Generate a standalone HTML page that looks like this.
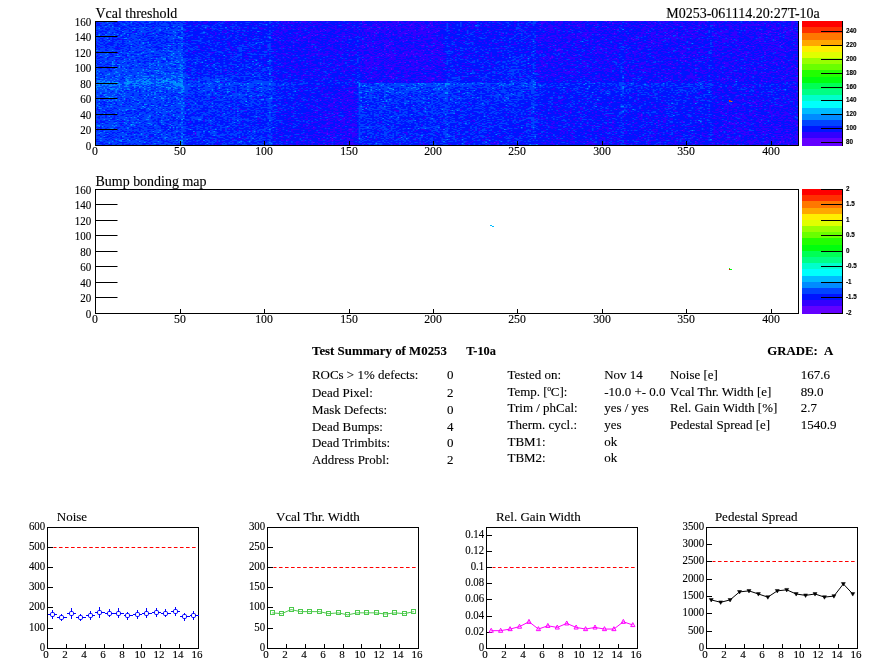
<!DOCTYPE html>
<html><head><meta charset="utf-8"><title>Test Summary of M0253</title>
<style>html,body{margin:0;padding:0;background:#fff;}svg{display:block;will-change:transform;}text{fill:#000;font-family:"Liberation Serif",serif;stroke:#000;stroke-width:.12px;}.s{font-family:"Liberation Sans",sans-serif;}</style></head><body>
<svg width="896" height="672" viewBox="0 0 896 672">
<rect width="896" height="672" fill="#fff"/>
<defs><clipPath id="hc"><rect x="95" y="21" width="703.5" height="124.5"/></clipPath><filter id="hb" x="-1%" y="-5%" width="102%" height="110%" color-interpolation-filters="sRGB"><feGaussianBlur stdDeviation="0.45"/></filter></defs>
<g clip-path="url(#hc)"><g filter="url(#hb)">
<rect x="92" y="18" width="709.5" height="130.5" fill="#0014ff"/>
<path transform="translate(95 21.5) scale(1.68990 1.00000)" d="M158 0h1m20 0h1m122 0h1m103 0h1M114 1h1m4 0h1m59 0h1m124 0h1m26 0h1M198 2h1m65 0h1m41 0h1M159 3h2m5 0h1m20 0h1m135 0h1m20 0h1m47 0h1M178 4h1m7 0h1m12 0h1m85 0h1m9 0h1m30 0h1m34 0h1m4 0h1m31 0h1M156 5h1m16 0h1m19 0h1m69 0h1m36 0h1m1 0h1M34 6h1m76 0h1m55 0h2m25 0h1m190 0h1m22 0h1M68 7h1m93 0h1m30 0h1m72 0h1m124 0h1m12 0h1M120 8h1m14 0h1m25 0h1m11 0h1m19 0h1m87 0h1m25 0h1m1 0h1m70 0h1m31 0h1M136 9h1m29 0h1m18 0h1m3 0h1m13 0h1m123 0h1m27 0h1M133 10h1m46 0h1m16 0h1m4 0h1m138 0h1m57 0h1M165 11h1m1 0h1m6 0h1m22 0h1m3 0h1m196 0h1m3 0h1m4 0h1m1 0h1M81 12h1m101 0h2m56 0h1m9 0h1m55 0h1m19 0h1m10 0h1m5 0h1m49 0h1m1 0h1M131 13h1m40 0h1m3 0h1m106 0h1m6 0h1m7 0h1m54 0h1m43 0h1m6 0h1M105 14h1m22 0h1m1 0h1m30 0h1m3 0h1m95 0h1m75 0h1m2 0h1m25 0h1M150 15h1m40 0h1m93 0h1M123 16h2m35 0h1m27 0h1m79 0h1m22 0h1M109 17h1m89 0h1m117 0h1M120 18h1m197 0h1m2 0h1m54 0h1M106 19h1m35 0h1m41 0h1m144 0h1m72 0h1M126 20h1m16 0h1m38 0h1m89 0h1m7 0h1m16 0h1m95 0h1M174 21h1m88 0h1m58 0h1m6 0h1m52 0h1m22 0h1M165 22h1m241 0h1M149 23h1m21 0h1m2 0h1m1 0h1m28 0h1m200 0h1M117 24h1m40 0h1m2 0h1m10 0h2m19 0h2m5 0h1m61 0h1m9 0h1m60 0h1m12 0h1m39 0h1m18 0h1M128 25h1m32 0h1m10 0h1m96 0h1m58 0h1m60 0h1M159 26h1m6 0h1m181 0h1m36 0h1M130 27h1m71 0h1m96 0h1M153 28h1m17 0h1m25 0h1m15 0h1m60 0h2m38 0h1m7 0h1M194 29h1m7 0h1m70 0h2m20 0h1m115 0h1M187 30h1m11 0h1m118 0h1m89 0h1M264 31h1m131 0h1M168 32h1m3 0h1m9 0h1m7 0h1m105 0h1m50 0h1m35 0h1M125 33h1m35 0h1m8 0h1m3 0h1m9 0h1m3 0h1m6 0h1m8 0h1m151 0h1m28 0h1m10 0h1M150 34h1m1 0h1m16 0h1m3 0h1m3 0h1m6 0h1m98 0h1m70 0h1m13 0h1m11 0h1M192 35h1m77 0h1m32 0h1M114 36h1m48 0h1m11 0h1m94 0h1m78 0h1m1 0h1M199 37h1m65 0h1m3 0h1m38 0h1m50 0h1M158 38h1m35 0h1m9 0h1m184 0h1M160 39h1m29 0h1m155 0h1m2 0h1M116 40h1m69 0h1m162 0h1m56 0h1M180 41h1m2 0h1m6 0h1m216 0h1M133 42h1m31 0h1m174 0h1m31 0h1M167 43h1m228 0h1m6 0h1M144 44h1m28 0h1m11 0h1m10 0h1m60 0h1m7 0h1m49 0h1m39 0h1m28 0h1M108 45h1m41 0h1m45 0h1m3 0h1m176 0h1m34 0h1M162 46h1m27 0h1m123 0h1m27 0h1m71 0h1M161 47h1m13 0h1m214 0h1m6 0h1m17 0h1M175 48h1m17 0h1m4 0h1m7 0h1m148 0h1M77 49h1m79 0h1m32 0h1M147 50h1m112 0h1m2 0h1m16 0h1m31 0h1m11 0h1m78 0h1M345 51h1m50 0h1M159 52h1m16 0h1m16 0h1m144 0h1M138 53h1m33 0h1m99 0h1M123 54h1m61 0h1m149 0h1m19 0h1M160 55h1m13 0h2m19 0h1m6 0h2m203 0h1M163 56h1m11 0h1m205 0h1M161 57h1m14 0h1m22 0h2m137 0h1m32 0h1M340 58h1m8 0h1m22 0h1m3 0h1M184 59h1m14 0h1m128 0h1m65 0h1M169 60h1m227 0h1M327 61h1m28 0h1M387 65h1m26 0h1M370 66h1M300 68h1M144 69h1m230 0h1M150 70h1m1 0h1m232 0h1M151 71h2M380 74h1M144 76h1M141 77h1M145 78h1m237 0h1M133 79h1m15 0h1M141 81h1m163 0h1m80 0h1m3 0h1M387 82h1M371 83h1m19 0h1M138 84h1m261 0h1M391 85h1m2 0h1M160 86h1M146 87h1M308 88h1M150 90h1m219 0h1M130 91h1m150 0h1M143 92h1m124 0h1M141 93h1m181 0h1M136 94h1m186 0h1m42 0h1m6 0h1m3 0h1m12 0h1m4 0h1M133 95h1m19 0h1M147 97h1M137 98h1M144 99h1m188 0h1m60 0h1m16 0h1M149 101h1m156 0h1m41 0h1m26 0h1m4 0h1m12 0h1M137 102h1m193 0h1m45 0h1M315 103h1m56 0h1m27 0h1M144 104h1m150 0h1m37 0h1m71 0h1m9 0h1M129 106h1m12 0h1m227 0h1M150 108h2M347 109h1m50 0h1M370 110h1m4 0h1m19 0h1m13 0h1M59 112h1m77 0h1m12 0h1m112 0h1m135 0h1M137 113h1m273 0h1M147 114h1M406 115h1M139 116h1m21 0h1m235 0h1M132 117h1m7 0h1m9 0h1m228 0h1m31 0h1M113 119h1m26 0h1M291 120h1m63 0h1m40 0h1m8 0h1m1 0h1M129 121h1m106 0h1m64 0h1m103 0h1M149 122h1m88 0h1m116 0h1m48 0h1M136 123h1m243 0h1m29 0h1" stroke="#6300ff" stroke-width="1.02" fill="none"/>
<path transform="translate(95 21.5) scale(1.68990 1.00000)" d="M54 0h1m11 0h1m8 0h1m1 0h3m2 0h1m10 0h1m12 0h2m2 0h3m1 0h1m1 0h1m5 0h3m3 0h3m1 0h1m1 0h2m1 0h1m8 0h1m6 0h2m1 0h1m2 0h1m3 0h1m1 0h2m1 0h5m2 0h4m1 0h2m3 0h2m1 0h2m4 0h1m2 0h3m1 0h2m1 0h1m1 0h1m8 0h1m4 0h1m1 0h3m4 0h1m5 0h2m11 0h2m14 0h3m2 0h1m2 0h2m1 0h2m3 0h1m1 0h2m2 0h3m3 0h1m3 0h1m4 0h1m2 0h1m2 0h2m2 0h1m2 0h4m3 0h4m1 0h2m1 0h1m4 0h3m1 0h2m2 0h2m1 0h1m5 0h2m1 0h1m2 0h5m2 0h2m2 0h5m2 0h1m1 0h1m2 0h1m3 0h1m3 0h1m3 0h3m1 0h1m2 0h1m4 0h2m2 0h1m3 0h2M25 1h1m32 0h1m3 0h1m1 0h3m4 0h1m2 0h1m2 0h1m22 0h1m9 0h1m1 0h1m3 0h3m3 0h4m2 0h4m6 0h1m5 0h1m5 0h1m7 0h2m4 0h1m1 0h1m1 0h2m2 0h1m3 0h2m3 0h2m1 0h2m2 0h7m3 0h2m1 0h1m2 0h1m2 0h2m2 0h1m10 0h4m5 0h1m4 0h2m1 0h1m8 0h1m3 0h2m9 0h5m4 0h2m1 0h2m1 0h2m2 0h4m1 0h1m2 0h1m2 0h2m1 0h1m6 0h1m2 0h1m3 0h1m2 0h2m3 0h1m3 0h1m4 0h2m1 0h1m3 0h1m1 0h3m3 0h6m2 0h1m3 0h1m2 0h4m1 0h1m3 0h1m1 0h1m2 0h1m2 0h2m5 0h1m4 0h1m1 0h2m2 0h1m2 0h1m1 0h1m1 0h1m3 0h1m3 0h2m3 0h3M3 2h1m49 0h2m5 0h1m3 0h2m2 0h1m2 0h1m4 0h1m1 0h1m2 0h1m12 0h1m4 0h1m5 0h1m5 0h7m3 0h1m2 0h1m1 0h1m1 0h1m2 0h3m2 0h2m4 0h1m1 0h1m5 0h2m1 0h1m2 0h1m1 0h1m6 0h1m1 0h1m2 0h1m1 0h8m1 0h5m1 0h2m2 0h2m1 0h1m4 0h1m2 0h1m1 0h3m2 0h1m2 0h1m6 0h1m2 0h1m1 0h2m4 0h2m8 0h1m10 0h1m1 0h1m7 0h2m2 0h1m1 0h2m3 0h1m1 0h3m3 0h1m1 0h1m1 0h1m1 0h1m2 0h1m2 0h6m2 0h2m1 0h2m2 0h5m3 0h1m4 0h1m6 0h2m2 0h2m2 0h2m3 0h1m2 0h1m3 0h2m2 0h1m1 0h1m3 0h2m1 0h1m5 0h1m2 0h2m5 0h1m3 0h1m4 0h1m3 0h1m1 0h1m2 0h2m2 0h1m2 0h2m7 0h1m1 0h2M58 3h2m2 0h1m7 0h1m9 0h1m11 0h1m2 0h1m8 0h1m3 0h2m1 0h1m1 0h1m3 0h1m2 0h1m1 0h1m3 0h2m1 0h3m1 0h2m3 0h2m6 0h2m1 0h2m5 0h1m5 0h1m1 0h2m2 0h1m1 0h6m1 0h1m1 0h1m5 0h2m1 0h1m1 0h1m1 0h2m1 0h1m1 0h3m1 0h3m6 0h1m7 0h1m4 0h1m4 0h1m3 0h2m1 0h2m3 0h1m7 0h1m8 0h2m3 0h1m1 0h1m2 0h1m1 0h1m4 0h2m2 0h1m6 0h5m3 0h1m2 0h1m3 0h1m5 0h1m2 0h1m1 0h1m3 0h2m5 0h1m1 0h2m3 0h1m1 0h1m1 0h2m2 0h1m3 0h3m1 0h1m1 0h1m2 0h1m2 0h2m2 0h2m1 0h2m2 0h4m1 0h1m3 0h3m1 0h1m1 0h1m2 0h10m1 0h1m1 0h1m1 0h4m1 0h1m2 0h1m4 0h1m1 0h2m1 0h1M59 4h1m18 0h1m15 0h1m14 0h1m2 0h1m1 0h1m5 0h1m1 0h1m1 0h2m1 0h3m2 0h2m6 0h1m1 0h1m3 0h1m1 0h1m2 0h1m6 0h2m4 0h4m2 0h1m1 0h1m1 0h4m4 0h1m1 0h2m1 0h3m2 0h5m13 0h1m7 0h1m2 0h1m1 0h1m6 0h2m6 0h2m6 0h1m1 0h1m2 0h2m2 0h1m8 0h1m3 0h3m1 0h1m1 0h2m2 0h7m1 0h2m1 0h1m6 0h3m2 0h1m2 0h3m6 0h1m1 0h2m1 0h2m1 0h1m5 0h5m2 0h2m2 0h3m2 0h3m1 0h2m2 0h1m3 0h2m10 0h1m1 0h1m1 0h1m1 0h4m1 0h3m2 0h13m1 0h1m2 0h3m2 0h1m2 0h1m3 0h1m2 0h1M78 5h1m6 0h1m4 0h1m5 0h1m12 0h2m3 0h2m1 0h1m1 0h1m1 0h1m2 0h3m5 0h1m2 0h2m1 0h1m2 0h2m4 0h1m1 0h2m1 0h2m3 0h8m1 0h5m1 0h1m2 0h2m1 0h1m1 0h1m1 0h2m2 0h1m1 0h1m1 0h1m3 0h2m1 0h5m1 0h1m2 0h2m1 0h1m10 0h1m1 0h3m3 0h1m1 0h1m1 0h2m1 0h1m7 0h1m4 0h1m5 0h1m1 0h1m7 0h1m3 0h6m6 0h1m2 0h1m1 0h5m11 0h1m6 0h1m4 0h3m1 0h1m1 0h3m3 0h1m1 0h4m2 0h1m1 0h1m1 0h1m2 0h2m6 0h2m2 0h1m1 0h1m1 0h3m3 0h1m3 0h1m2 0h3m3 0h3m2 0h1m1 0h2m1 0h1m1 0h1m9 0h2m2 0h2m2 0h1m4 0h3m1 0h2M61 6h1m4 0h1m12 0h1m2 0h1m1 0h1m1 0h1m3 0h1m6 0h2m2 0h1m4 0h1m1 0h1m3 0h1m1 0h2m4 0h4m1 0h1m3 0h1m2 0h1m5 0h3m1 0h1m6 0h2m2 0h1m4 0h5m8 0h1m3 0h1m1 0h8m1 0h4m1 0h3m1 0h1m2 0h3m2 0h1m6 0h1m8 0h2m2 0h1m1 0h2m5 0h2m5 0h2m16 0h2m2 0h1m2 0h2m1 0h4m2 0h2m1 0h1m1 0h3m2 0h1m3 0h1m1 0h1m1 0h1m2 0h2m3 0h1m1 0h1m3 0h1m1 0h1m3 0h1m4 0h1m4 0h2m1 0h2m2 0h2m3 0h1m3 0h1m1 0h1m1 0h1m6 0h1m2 0h3m3 0h2m2 0h1m2 0h1m2 0h1m1 0h1m5 0h2m3 0h1m1 0h1m5 0h1m2 0h1m1 0h1m3 0h1m2 0h7m2 0h1m1 0h2M54 7h1m11 0h1m6 0h1m8 0h1m7 0h1m6 0h4m7 0h1m1 0h1m1 0h1m2 0h3m1 0h3m1 0h1m5 0h2m2 0h1m3 0h1m2 0h3m1 0h1m1 0h1m1 0h2m1 0h1m1 0h1m1 0h1m5 0h1m1 0h4m4 0h4m1 0h1m1 0h3m2 0h6m3 0h1m1 0h4m3 0h5m5 0h1m6 0h2m2 0h2m2 0h1m9 0h1m18 0h1m6 0h2m5 0h2m2 0h2m4 0h1m4 0h3m2 0h1m4 0h2m2 0h1m4 0h2m1 0h1m2 0h1m3 0h1m4 0h1m1 0h1m3 0h4m3 0h2m3 0h4m4 0h1m3 0h2m1 0h3m1 0h3m2 0h1m11 0h1m2 0h3m1 0h1m2 0h1m2 0h2m2 0h1m2 0h2m4 0h3m1 0h2m1 0h1m2 0h3m1 0h1m2 0h1M18 8h1m47 0h2m1 0h1m13 0h1m1 0h1m1 0h1m10 0h1m11 0h6m2 0h1m2 0h1m2 0h2m1 0h2m1 0h1m2 0h1m3 0h2m3 0h4m4 0h1m2 0h2m2 0h1m1 0h2m1 0h1m2 0h1m1 0h3m1 0h1m4 0h1m1 0h3m4 0h1m1 0h1m1 0h1m1 0h2m1 0h1m1 0h2m1 0h2m1 0h1m3 0h1m10 0h1m1 0h1m8 0h1m8 0h3m2 0h1m2 0h2m1 0h1m1 0h2m4 0h1m9 0h1m1 0h4m3 0h1m11 0h1m2 0h1m2 0h4m1 0h1m2 0h4m1 0h1m1 0h1m14 0h3m1 0h1m5 0h2m1 0h1m1 0h1m3 0h3m2 0h2m1 0h1m5 0h1m13 0h1m4 0h1m1 0h1m1 0h1m2 0h1m1 0h1m2 0h1m3 0h1m8 0h1m1 0h3m2 0h3m1 0h1M54 9h2m3 0h1m16 0h2m1 0h1m10 0h1m10 0h1m5 0h2m2 0h3m7 0h1m4 0h1m1 0h1m1 0h2m1 0h2m2 0h3m3 0h2m2 0h3m3 0h1m1 0h1m1 0h1m1 0h6m2 0h1m1 0h4m1 0h2m1 0h1m1 0h2m2 0h2m1 0h3m2 0h3m1 0h4m1 0h3m4 0h1m2 0h2m4 0h1m2 0h1m5 0h2m1 0h1m4 0h1m1 0h1m9 0h1m1 0h1m4 0h1m1 0h2m7 0h1m2 0h2m1 0h3m1 0h1m1 0h1m2 0h2m3 0h1m4 0h1m1 0h2m2 0h2m1 0h4m2 0h1m1 0h1m7 0h1m2 0h2m1 0h1m3 0h2m5 0h1m3 0h1m1 0h3m1 0h3m3 0h1m2 0h1m1 0h4m1 0h1m1 0h3m1 0h1m3 0h2m2 0h2m1 0h2m3 0h1m6 0h4m1 0h1m3 0h1m2 0h3m1 0h2m2 0h1m1 0h2m1 0h1m1 0h1m1 0h1M23 10h1m29 0h2m15 0h1m4 0h1m1 0h1m6 0h1m9 0h1m11 0h3m1 0h1m1 0h2m6 0h3m4 0h6m1 0h2m1 0h2m3 0h3m5 0h1m2 0h3m1 0h1m1 0h10m1 0h2m2 0h2m3 0h1m2 0h3m1 0h5m1 0h4m3 0h3m1 0h1m6 0h1m2 0h1m2 0h2m15 0h2m4 0h1m10 0h1m2 0h1m3 0h1m3 0h2m5 0h2m1 0h1m1 0h2m1 0h1m2 0h1m1 0h1m5 0h1m3 0h1m3 0h2m3 0h1m3 0h1m2 0h1m1 0h1m2 0h1m3 0h1m7 0h2m1 0h1m3 0h1m1 0h6m1 0h1m1 0h1m1 0h1m4 0h1m1 0h3m5 0h1m1 0h2m5 0h1m2 0h4m3 0h2m5 0h2m2 0h2m1 0h1m1 0h1m1 0h3m1 0h1m4 0h1m1 0h1m1 0h5M22 11h1m10 0h1m34 0h1m2 0h1m3 0h3m8 0h2m1 0h1m3 0h1m1 0h1m2 0h1m6 0h1m1 0h4m1 0h1m4 0h5m3 0h1m2 0h1m1 0h3m4 0h1m2 0h1m1 0h2m2 0h2m1 0h1m5 0h1m2 0h1m1 0h1m2 0h2m4 0h3m4 0h1m2 0h1m1 0h3m1 0h2m1 0h2m1 0h6m1 0h3m10 0h1m1 0h1m8 0h1m2 0h2m5 0h1m4 0h1m2 0h1m7 0h1m18 0h1m1 0h3m1 0h2m4 0h1m8 0h10m1 0h1m2 0h1m1 0h1m2 0h1m1 0h1m7 0h1m1 0h1m1 0h4m4 0h3m2 0h2m3 0h3m1 0h4m1 0h1m1 0h1m1 0h1m2 0h2m3 0h3m2 0h1m1 0h8m1 0h5m2 0h1m1 0h2m1 0h1m2 0h3m5 0h3m1 0h2m1 0h1m3 0h2m1 0h2M28 12h1m40 0h1m1 0h1m1 0h1m5 0h1m10 0h1m6 0h1m7 0h2m2 0h2m7 0h1m3 0h2m3 0h3m3 0h2m6 0h2m3 0h2m2 0h3m3 0h1m1 0h1m1 0h1m2 0h1m1 0h1m1 0h1m3 0h1m1 0h1m2 0h1m2 0h4m3 0h1m1 0h8m2 0h2m2 0h1m9 0h1m3 0h1m4 0h1m5 0h2m2 0h1m2 0h1m5 0h1m3 0h1m1 0h1m7 0h1m1 0h1m7 0h1m1 0h1m1 0h1m4 0h1m4 0h1m3 0h2m1 0h3m1 0h3m1 0h1m4 0h1m6 0h2m1 0h1m4 0h1m7 0h1m1 0h4m1 0h4m1 0h1m2 0h1m3 0h1m1 0h1m5 0h1m1 0h7m1 0h1m6 0h2m1 0h4m5 0h3m3 0h1m1 0h1m3 0h1m1 0h1m1 0h1m1 0h1m1 0h2m5 0h1m1 0h1m2 0h2m2 0h3M36 13h1m28 0h1m5 0h1m3 0h1m2 0h1m6 0h1m2 0h1m4 0h1m4 0h1m7 0h3m1 0h1m2 0h1m2 0h1m2 0h2m1 0h1m3 0h2m1 0h2m1 0h1m1 0h4m5 0h7m2 0h3m1 0h1m1 0h1m1 0h2m1 0h4m4 0h1m1 0h2m2 0h2m1 0h2m1 0h1m1 0h1m1 0h6m1 0h5m6 0h1m13 0h2m13 0h1m1 0h2m2 0h1m3 0h4m7 0h1m1 0h1m7 0h2m1 0h1m4 0h2m1 0h2m2 0h3m2 0h2m1 0h2m2 0h2m2 0h1m3 0h4m2 0h3m2 0h1m1 0h1m4 0h1m1 0h2m1 0h1m1 0h1m3 0h2m2 0h1m3 0h1m1 0h1m1 0h1m1 0h2m2 0h1m1 0h1m1 0h1m2 0h1m2 0h3m5 0h3m1 0h2m1 0h1m3 0h4m4 0h1m2 0h2m2 0h5m2 0h1m1 0h3m5 0h4m3 0h1M30 14h1m29 0h1m9 0h1m7 0h1m7 0h1m8 0h1m8 0h1m2 0h1m1 0h1m1 0h1m2 0h1m2 0h1m1 0h1m5 0h3m3 0h1m2 0h1m3 0h1m1 0h1m3 0h1m1 0h2m2 0h1m2 0h2m1 0h1m1 0h2m3 0h1m2 0h1m2 0h1m3 0h2m1 0h2m1 0h3m1 0h1m4 0h2m1 0h1m2 0h2m1 0h5m1 0h1m1 0h1m3 0h1m15 0h1m1 0h1m4 0h1m7 0h2m1 0h1m19 0h4m3 0h3m1 0h2m1 0h1m2 0h1m1 0h1m2 0h1m1 0h4m1 0h2m2 0h2m1 0h1m1 0h2m7 0h1m1 0h3m1 0h1m2 0h1m2 0h2m1 0h1m2 0h2m1 0h5m2 0h2m4 0h1m2 0h1m1 0h1m4 0h2m1 0h4m1 0h1m2 0h1m1 0h1m2 0h5m1 0h5m2 0h1m1 0h2m5 0h1m1 0h1m3 0h2m1 0h1m7 0h2m1 0h4M53 15h1m12 0h1m1 0h1m9 0h1m13 0h1m15 0h1m3 0h1m4 0h1m1 0h1m3 0h3m1 0h1m1 0h1m3 0h1m2 0h1m3 0h1m4 0h2m1 0h2m2 0h1m4 0h1m3 0h1m1 0h1m1 0h3m1 0h1m1 0h4m4 0h3m2 0h4m1 0h1m3 0h1m1 0h1m1 0h2m3 0h1m2 0h1m5 0h1m14 0h1m4 0h1m4 0h1m6 0h1m6 0h1m14 0h1m2 0h5m2 0h1m3 0h3m1 0h1m2 0h1m1 0h5m1 0h1m3 0h1m3 0h1m1 0h1m1 0h1m2 0h1m4 0h1m1 0h1m2 0h1m1 0h3m3 0h1m1 0h3m2 0h3m1 0h1m1 0h2m1 0h2m1 0h11m3 0h2m4 0h3m3 0h1m1 0h1m3 0h1m1 0h2m4 0h4m2 0h4m4 0h1m1 0h3m1 0h1m1 0h1m2 0h1m3 0h1M57 16h1m11 0h1m1 0h1m6 0h1m3 0h1m4 0h1m1 0h1m3 0h1m7 0h1m3 0h1m1 0h1m2 0h1m3 0h3m1 0h2m1 0h1m4 0h2m5 0h4m1 0h1m3 0h2m2 0h1m1 0h1m1 0h1m2 0h1m5 0h1m1 0h2m1 0h2m4 0h1m2 0h1m4 0h1m3 0h1m2 0h1m1 0h1m1 0h1m3 0h1m3 0h5m1 0h3m4 0h2m3 0h1m4 0h1m15 0h1m9 0h1m6 0h1m7 0h5m1 0h1m4 0h2m3 0h4m1 0h2m1 0h3m2 0h1m1 0h1m8 0h1m3 0h1m1 0h3m5 0h1m1 0h2m8 0h1m1 0h1m1 0h5m1 0h1m1 0h7m2 0h4m2 0h2m1 0h2m9 0h1m1 0h1m2 0h1m1 0h6m1 0h2m3 0h3m4 0h1m1 0h1m1 0h1m1 0h1m1 0h3m3 0h3m2 0h3M14 17h1m44 0h1m29 0h1m7 0h1m7 0h2m4 0h1m2 0h1m2 0h2m1 0h2m1 0h1m1 0h3m3 0h1m7 0h3m2 0h5m1 0h2m7 0h1m2 0h1m1 0h2m1 0h1m1 0h1m4 0h1m1 0h1m1 0h1m1 0h1m2 0h3m2 0h3m1 0h1m1 0h5m1 0h2m1 0h1m1 0h1m5 0h1m1 0h2m3 0h1m15 0h3m12 0h2m5 0h1m4 0h1m1 0h3m1 0h1m1 0h3m1 0h1m1 0h1m1 0h1m1 0h3m2 0h4m2 0h2m1 0h1m5 0h1m1 0h1m1 0h2m1 0h1m2 0h3m3 0h2m2 0h1m1 0h1m6 0h1m1 0h1m2 0h1m7 0h3m1 0h3m1 0h1m3 0h2m8 0h2m1 0h3m2 0h2m1 0h1m1 0h1m2 0h1m8 0h1m3 0h4m2 0h3m1 0h1m1 0h1m3 0h3m2 0h1m1 0h1M15 18h1m4 0h1m49 0h1m4 0h2m6 0h1m4 0h2m5 0h1m11 0h1m2 0h1m4 0h1m3 0h1m2 0h1m3 0h1m2 0h1m1 0h3m1 0h2m2 0h1m1 0h2m1 0h2m2 0h1m7 0h2m1 0h1m1 0h3m1 0h1m1 0h1m2 0h1m1 0h1m1 0h2m5 0h2m1 0h1m3 0h1m3 0h1m1 0h4m2 0h2m1 0h1m2 0h1m32 0h2m14 0h1m1 0h1m2 0h2m1 0h1m2 0h1m1 0h2m2 0h3m5 0h2m5 0h1m3 0h1m4 0h1m2 0h2m3 0h2m1 0h1m7 0h1m1 0h1m1 0h2m2 0h1m3 0h2m1 0h2m1 0h1m1 0h5m1 0h3m2 0h2m1 0h1m3 0h1m2 0h5m1 0h1m5 0h1m1 0h3m1 0h2m3 0h2m3 0h1m3 0h1m2 0h5m1 0h1m2 0h1m1 0h3m5 0h3M55 19h1m15 0h1m1 0h1m7 0h1m7 0h2m2 0h1m13 0h1m5 0h3m1 0h1m2 0h5m1 0h1m1 0h2m3 0h1m4 0h2m3 0h1m1 0h2m1 0h1m8 0h2m2 0h1m1 0h1m4 0h6m1 0h2m3 0h4m2 0h9m5 0h3m9 0h2m2 0h3m2 0h1m5 0h1m2 0h1m2 0h1m10 0h1m9 0h1m6 0h4m1 0h3m1 0h1m2 0h3m1 0h1m2 0h2m3 0h3m5 0h2m2 0h2m2 0h2m5 0h4m3 0h1m2 0h3m9 0h1m2 0h4m1 0h1m2 0h1m1 0h1m3 0h3m6 0h1m2 0h1m2 0h1m4 0h1m3 0h4m2 0h2m1 0h1m2 0h2m2 0h1m2 0h4m1 0h1m3 0h2m5 0h1m1 0h1m1 0h1m1 0h1m2 0h1M52 20h1m3 0h1m21 0h1m29 0h2m2 0h1m1 0h1m2 0h2m3 0h1m4 0h5m3 0h1m2 0h5m2 0h1m1 0h1m5 0h1m4 0h2m2 0h1m2 0h4m1 0h4m3 0h2m1 0h1m2 0h1m3 0h2m2 0h2m1 0h2m3 0h4m1 0h1m7 0h1m2 0h1m2 0h1m3 0h2m3 0h2m1 0h1m9 0h1m5 0h1m10 0h2m3 0h1m2 0h1m1 0h4m3 0h1m4 0h1m3 0h3m5 0h1m1 0h2m1 0h1m1 0h1m7 0h1m1 0h2m3 0h3m1 0h2m4 0h1m2 0h6m2 0h1m3 0h2m1 0h2m3 0h1m2 0h1m1 0h1m3 0h1m3 0h1m6 0h1m1 0h2m1 0h4m1 0h2m1 0h2m2 0h1m1 0h2m2 0h2m3 0h2m2 0h1m2 0h1m1 0h2m1 0h1m2 0h1M1 21h1m56 0h1m11 0h1m3 0h1m4 0h1m5 0h1m3 0h1m18 0h2m2 0h1m3 0h1m1 0h3m2 0h1m2 0h1m1 0h5m4 0h1m2 0h2m5 0h1m5 0h1m4 0h1m1 0h4m1 0h2m1 0h2m1 0h2m2 0h2m2 0h1m2 0h1m6 0h1m5 0h1m2 0h4m1 0h2m11 0h1m4 0h1m9 0h1m2 0h1m4 0h3m6 0h1m1 0h1m1 0h1m3 0h1m5 0h1m10 0h1m2 0h2m2 0h1m2 0h1m1 0h2m2 0h2m2 0h1m2 0h1m4 0h3m2 0h1m3 0h1m2 0h1m2 0h1m2 0h1m1 0h1m1 0h1m3 0h2m2 0h4m2 0h1m1 0h1m2 0h2m7 0h2m4 0h2m6 0h2m2 0h4m1 0h1m1 0h1m2 0h1m1 0h1m1 0h3m1 0h1m1 0h1m1 0h2m3 0h1m2 0h5m3 0h2m4 0h2M8 22h1m69 0h2m7 0h1m16 0h1m1 0h1m2 0h1m1 0h1m1 0h1m3 0h1m2 0h1m1 0h1m5 0h1m1 0h1m1 0h1m2 0h1m1 0h1m1 0h2m4 0h1m2 0h1m3 0h1m3 0h1m1 0h1m2 0h1m1 0h2m1 0h3m3 0h5m1 0h1m4 0h3m2 0h1m1 0h2m1 0h4m2 0h1m1 0h1m2 0h1m2 0h1m9 0h1m6 0h1m1 0h1m2 0h1m1 0h1m1 0h2m1 0h3m4 0h1m4 0h1m4 0h1m1 0h1m4 0h1m7 0h2m1 0h1m3 0h2m1 0h1m5 0h1m8 0h1m4 0h2m2 0h1m4 0h1m5 0h2m6 0h1m2 0h3m2 0h1m1 0h1m1 0h3m7 0h2m1 0h3m2 0h2m6 0h1m3 0h1m2 0h2m1 0h1m7 0h1m1 0h2m2 0h1m4 0h1m1 0h2m1 0h9m2 0h1m7 0h1m1 0h1M45 23h1m19 0h1m13 0h1m5 0h1m3 0h1m8 0h1m10 0h2m10 0h1m3 0h2m6 0h1m1 0h1m6 0h1m1 0h4m11 0h1m1 0h3m1 0h1m1 0h1m7 0h1m6 0h1m3 0h1m1 0h1m3 0h1m1 0h1m1 0h1m4 0h4m4 0h1m3 0h1m4 0h1m18 0h1m3 0h1m1 0h1m2 0h4m5 0h1m1 0h1m5 0h1m1 0h1m3 0h2m1 0h1m1 0h1m2 0h3m1 0h1m2 0h3m3 0h2m1 0h3m1 0h1m2 0h2m1 0h2m3 0h1m3 0h1m1 0h2m6 0h1m1 0h2m1 0h2m1 0h1m2 0h1m3 0h1m3 0h2m1 0h1m16 0h2m3 0h1m1 0h1m2 0h1m3 0h1m2 0h1m1 0h5m3 0h2m4 0h1m5 0h5m2 0h1m1 0h1M25 24h1m8 0h1m25 0h2m17 0h1m10 0h1m9 0h2m3 0h1m5 0h1m1 0h1m7 0h1m4 0h1m1 0h4m5 0h1m2 0h1m4 0h1m3 0h1m1 0h1m2 0h1m2 0h1m5 0h2m1 0h1m3 0h1m3 0h1m3 0h3m2 0h1m1 0h4m2 0h2m3 0h3m5 0h3m4 0h1m1 0h1m7 0h1m2 0h1m9 0h1m3 0h1m24 0h2m1 0h1m1 0h1m5 0h1m2 0h2m1 0h2m2 0h2m1 0h1m3 0h1m5 0h1m3 0h1m3 0h1m1 0h2m3 0h2m3 0h3m1 0h4m2 0h1m1 0h1m1 0h2m1 0h2m4 0h1m6 0h1m1 0h1m1 0h1m2 0h3m4 0h1m4 0h5m10 0h1m2 0h1m6 0h1m2 0h2m1 0h1m1 0h1m3 0h2m3 0h1m4 0h3M41 25h1m11 0h1m7 0h1m4 0h1m7 0h1m3 0h1m1 0h1m3 0h1m5 0h1m3 0h1m6 0h1m2 0h3m3 0h3m1 0h2m1 0h1m7 0h1m1 0h1m4 0h4m2 0h1m1 0h1m1 0h1m2 0h1m1 0h1m1 0h1m4 0h1m1 0h4m3 0h1m3 0h2m2 0h1m1 0h1m1 0h1m2 0h2m3 0h1m1 0h1m1 0h2m1 0h1m2 0h2m2 0h4m1 0h2m1 0h1m23 0h1m2 0h1m11 0h2m3 0h1m3 0h1m1 0h1m2 0h1m8 0h1m2 0h2m4 0h3m4 0h1m2 0h2m6 0h1m1 0h3m3 0h2m3 0h2m12 0h1m1 0h3m1 0h1m2 0h2m1 0h1m1 0h1m9 0h1m1 0h3m3 0h1m2 0h1m3 0h1m5 0h2m1 0h1m1 0h3m1 0h2m2 0h1m1 0h1m3 0h4m1 0h1m5 0h1m1 0h4m2 0h1m3 0h2m1 0h1m2 0h2M4 26h1m7 0h1m48 0h1m2 0h1m2 0h1m12 0h2m1 0h1m8 0h1m5 0h1m2 0h1m7 0h3m5 0h1m1 0h2m3 0h5m4 0h1m3 0h4m4 0h2m1 0h2m3 0h1m1 0h1m1 0h2m3 0h1m1 0h1m3 0h1m2 0h3m1 0h3m1 0h4m1 0h1m1 0h3m2 0h1m1 0h2m2 0h3m2 0h5m3 0h1m4 0h1m14 0h1m6 0h1m2 0h1m23 0h2m5 0h2m1 0h1m1 0h5m1 0h1m2 0h3m2 0h1m2 0h1m2 0h4m3 0h3m1 0h1m10 0h1m2 0h1m1 0h1m2 0h2m2 0h1m1 0h1m1 0h1m4 0h1m1 0h1m1 0h1m5 0h5m4 0h1m1 0h4m5 0h1m1 0h4m1 0h1m3 0h2m2 0h1m5 0h1m1 0h1m2 0h1m2 0h1m1 0h1m1 0h2m1 0h1m3 0h2M14 27h1m52 0h1m8 0h1m3 0h1m29 0h1m1 0h1m1 0h1m5 0h1m1 0h2m4 0h1m3 0h1m3 0h5m6 0h1m2 0h2m6 0h1m3 0h3m2 0h2m2 0h1m1 0h5m2 0h3m1 0h2m3 0h1m6 0h1m4 0h1m1 0h1m7 0h1m1 0h1m4 0h1m4 0h1m4 0h1m2 0h1m4 0h1m2 0h4m8 0h1m3 0h1m12 0h2m2 0h1m1 0h2m6 0h1m5 0h2m1 0h1m1 0h1m3 0h1m2 0h2m2 0h1m1 0h3m2 0h1m4 0h1m2 0h1m2 0h3m4 0h1m5 0h1m3 0h1m1 0h2m2 0h1m2 0h2m5 0h3m8 0h1m1 0h1m2 0h1m5 0h2m1 0h1m2 0h1m2 0h2m1 0h2m1 0h1m2 0h2m1 0h2m1 0h5m1 0h1m1 0h2m2 0h3M62 28h1m14 0h1m3 0h2m10 0h1m11 0h3m2 0h1m3 0h2m1 0h1m2 0h2m2 0h1m1 0h2m2 0h2m3 0h1m3 0h4m3 0h1m9 0h2m3 0h7m1 0h1m4 0h2m1 0h1m3 0h4m1 0h1m1 0h3m2 0h1m1 0h1m4 0h2m2 0h2m4 0h1m3 0h2m9 0h1m3 0h1m3 0h1m4 0h1m3 0h1m14 0h1m11 0h2m2 0h1m4 0h1m3 0h3m1 0h1m9 0h3m1 0h1m1 0h1m5 0h3m10 0h1m1 0h1m5 0h1m1 0h1m1 0h2m1 0h1m1 0h1m1 0h3m3 0h1m2 0h1m8 0h2m4 0h1m1 0h1m1 0h4m5 0h4m1 0h2m3 0h1m1 0h1m5 0h1m1 0h5m1 0h5m1 0h1m1 0h2M28 29h1m26 0h1m7 0h2m10 0h2m4 0h1m1 0h1m6 0h1m2 0h3m4 0h2m4 0h1m4 0h1m9 0h1m6 0h4m8 0h1m1 0h2m2 0h1m1 0h1m6 0h8m1 0h1m3 0h2m1 0h1m2 0h1m2 0h3m1 0h1m3 0h1m1 0h7m1 0h1m1 0h5m1 0h1m1 0h1m4 0h1m9 0h1m3 0h1m27 0h1m8 0h1m1 0h2m3 0h2m5 0h2m6 0h2m6 0h2m4 0h1m2 0h3m2 0h5m3 0h1m1 0h1m1 0h1m2 0h1m1 0h1m4 0h1m5 0h1m5 0h1m1 0h1m3 0h1m1 0h3m5 0h1m2 0h2m3 0h1m1 0h3m1 0h2m3 0h3m2 0h2m8 0h1m2 0h2m1 0h4m1 0h1m1 0h2m1 0h3m2 0h1m1 0h4M55 30h1m2 0h2m11 0h1m6 0h1m13 0h2m1 0h1m15 0h1m6 0h2m2 0h2m2 0h1m1 0h1m1 0h1m1 0h1m3 0h3m2 0h2m1 0h2m1 0h1m3 0h2m1 0h1m2 0h2m3 0h3m2 0h1m2 0h3m1 0h2m1 0h1m1 0h1m3 0h3m2 0h1m2 0h2m1 0h1m5 0h1m2 0h2m8 0h1m4 0h1m2 0h1m8 0h1m1 0h1m6 0h1m8 0h2m5 0h2m4 0h4m1 0h1m1 0h1m2 0h1m1 0h1m1 0h2m2 0h1m1 0h1m10 0h1m1 0h1m2 0h2m1 0h1m1 0h2m1 0h2m2 0h2m2 0h1m1 0h1m3 0h3m8 0h1m1 0h1m2 0h3m2 0h1m2 0h7m1 0h2m1 0h2m1 0h3m1 0h2m4 0h1m6 0h2m1 0h2m1 0h3m1 0h3m1 0h1m1 0h2m1 0h1m2 0h1m2 0h3m1 0h1m3 0h1m1 0h2M57 31h1m3 0h1m5 0h4m12 0h1m4 0h1m1 0h2m13 0h2m7 0h2m6 0h1m3 0h1m5 0h1m1 0h1m2 0h1m4 0h1m1 0h3m1 0h2m1 0h4m3 0h1m3 0h2m1 0h2m2 0h1m1 0h1m2 0h2m1 0h2m3 0h7m1 0h1m1 0h3m1 0h1m1 0h8m9 0h1m8 0h1m2 0h1m6 0h1m3 0h3m10 0h2m1 0h2m5 0h2m3 0h1m8 0h5m2 0h1m4 0h1m1 0h1m5 0h5m4 0h2m1 0h1m1 0h1m3 0h1m2 0h1m1 0h3m3 0h2m3 0h4m4 0h2m2 0h1m1 0h1m2 0h3m1 0h2m1 0h3m2 0h4m4 0h1m1 0h1m1 0h4m3 0h2m3 0h1m1 0h2m1 0h1m5 0h2m3 0h1m2 0h1m1 0h3m3 0h1M13 32h1m40 0h1m3 0h1m10 0h1m10 0h1m8 0h1m7 0h1m4 0h1m1 0h2m1 0h2m1 0h3m3 0h1m1 0h1m7 0h1m1 0h7m1 0h3m2 0h1m2 0h3m3 0h1m2 0h2m3 0h1m4 0h2m2 0h1m1 0h1m3 0h1m1 0h2m2 0h1m3 0h2m1 0h4m1 0h3m6 0h1m2 0h1m1 0h3m6 0h2m3 0h1m1 0h3m10 0h1m9 0h1m13 0h1m3 0h2m3 0h2m3 0h1m2 0h1m3 0h1m3 0h1m5 0h1m1 0h2m1 0h1m3 0h3m1 0h1m1 0h2m9 0h2m1 0h2m1 0h2m1 0h1m1 0h2m3 0h2m3 0h1m4 0h1m4 0h1m6 0h3m4 0h1m5 0h1m2 0h1m5 0h1m3 0h1m2 0h1m1 0h4m2 0h3m3 0h2m4 0h3m1 0h2m3 0h1M2 33h1m65 0h1m9 0h2m1 0h1m1 0h1m18 0h1m5 0h2m1 0h4m1 0h2m5 0h1m2 0h1m1 0h2m2 0h6m4 0h1m2 0h1m4 0h1m1 0h2m2 0h3m1 0h1m3 0h2m1 0h2m3 0h2m1 0h4m1 0h3m3 0h2m1 0h5m2 0h6m3 0h3m5 0h1m1 0h1m4 0h2m3 0h1m5 0h2m1 0h1m3 0h1m10 0h1m17 0h2m10 0h2m1 0h1m1 0h2m2 0h2m1 0h1m1 0h1m1 0h1m5 0h2m4 0h2m5 0h2m3 0h2m1 0h1m2 0h1m7 0h2m4 0h1m5 0h1m1 0h3m2 0h1m5 0h2m1 0h2m2 0h2m1 0h2m4 0h1m4 0h1m1 0h2m5 0h1m2 0h1m2 0h1m6 0h1m3 0h4m4 0h2M65 34h1m8 0h1m14 0h1m17 0h1m4 0h1m2 0h1m5 0h3m3 0h3m1 0h2m2 0h3m1 0h2m4 0h1m5 0h1m4 0h1m2 0h4m3 0h3m2 0h2m1 0h3m1 0h1m1 0h4m1 0h2m1 0h2m1 0h8m3 0h1m9 0h2m9 0h1m3 0h1m1 0h1m4 0h1m3 0h1m1 0h1m16 0h1m10 0h1m1 0h1m4 0h1m2 0h1m1 0h1m5 0h1m1 0h1m6 0h1m1 0h1m4 0h3m1 0h1m1 0h1m5 0h1m2 0h1m1 0h1m2 0h1m1 0h2m3 0h2m1 0h2m8 0h1m3 0h1m2 0h1m1 0h2m3 0h1m1 0h1m2 0h1m1 0h1m2 0h2m1 0h1m3 0h2m6 0h1m1 0h1m1 0h1m1 0h2m1 0h1m1 0h3m2 0h3m4 0h5m4 0h1M72 35h1m8 0h1m6 0h3m6 0h1m1 0h1m6 0h2m3 0h1m1 0h1m8 0h1m4 0h1m4 0h1m1 0h1m4 0h1m1 0h2m2 0h2m3 0h1m7 0h10m1 0h2m1 0h5m2 0h5m1 0h2m1 0h1m5 0h1m1 0h1m2 0h5m1 0h3m3 0h1m1 0h1m2 0h1m1 0h3m4 0h1m1 0h1m3 0h2m1 0h1m1 0h1m1 0h1m3 0h1m2 0h1m8 0h1m11 0h3m2 0h1m1 0h1m1 0h1m2 0h1m2 0h1m4 0h1m2 0h3m6 0h1m3 0h1m3 0h1m2 0h1m4 0h2m3 0h1m4 0h1m5 0h2m1 0h1m1 0h1m1 0h1m5 0h1m3 0h2m2 0h1m1 0h2m1 0h2m4 0h1m2 0h3m1 0h1m1 0h5m2 0h1m3 0h3m6 0h1m4 0h1m1 0h1m1 0h1m1 0h1m6 0h1m3 0h3M18 36h1m16 0h1m41 0h1m2 0h1m26 0h1m1 0h1m8 0h2m5 0h2m15 0h1m14 0h1m2 0h1m3 0h1m6 0h2m3 0h2m3 0h1m1 0h1m1 0h1m2 0h2m3 0h4m1 0h1m1 0h6m6 0h1m5 0h2m3 0h1m8 0h1m10 0h1m11 0h1m7 0h4m1 0h2m1 0h1m3 0h3m1 0h7m1 0h1m2 0h3m1 0h1m1 0h1m1 0h1m2 0h1m3 0h1m8 0h4m4 0h2m1 0h1m5 0h1m4 0h1m1 0h1m1 0h1m2 0h1m2 0h1m1 0h1m1 0h1m4 0h1m6 0h1m8 0h1m2 0h2m1 0h3m4 0h1m1 0h3m1 0h1m1 0h2m2 0h1m3 0h1m1 0h2m1 0h1m1 0h1m4 0h2M62 37h1m4 0h1m7 0h1m13 0h2m6 0h1m1 0h2m7 0h1m2 0h1m3 0h1m1 0h3m6 0h2m3 0h2m5 0h4m2 0h1m2 0h1m3 0h1m5 0h1m1 0h1m2 0h9m3 0h4m1 0h5m5 0h2m1 0h3m1 0h2m2 0h1m2 0h5m4 0h1m4 0h1m1 0h2m6 0h2m1 0h1m3 0h2m17 0h3m4 0h1m3 0h1m2 0h1m2 0h1m1 0h1m1 0h2m4 0h4m2 0h1m10 0h1m1 0h1m4 0h2m1 0h1m7 0h1m1 0h1m1 0h3m2 0h2m1 0h1m3 0h1m2 0h1m2 0h8m1 0h3m3 0h1m3 0h1m1 0h1m3 0h1m4 0h5m5 0h2m1 0h1m3 0h2m2 0h1m2 0h2m1 0h1m1 0h1m1 0h1m3 0h3m2 0h2m4 0h1M65 38h1m2 0h1m4 0h1m4 0h1m7 0h1m3 0h1m1 0h2m4 0h1m3 0h1m6 0h1m2 0h1m4 0h1m11 0h1m5 0h1m1 0h1m4 0h1m4 0h1m2 0h1m2 0h2m4 0h6m2 0h1m3 0h1m1 0h5m3 0h1m2 0h1m1 0h3m3 0h1m2 0h3m2 0h1m2 0h1m1 0h2m3 0h1m16 0h1m4 0h2m2 0h1m13 0h1m8 0h1m3 0h1m1 0h2m1 0h2m4 0h1m1 0h1m4 0h1m1 0h1m2 0h1m7 0h1m1 0h2m1 0h1m1 0h2m1 0h1m1 0h4m4 0h4m1 0h2m5 0h1m5 0h2m2 0h2m2 0h1m3 0h1m1 0h1m4 0h1m3 0h1m5 0h3m5 0h2m2 0h1m1 0h1m4 0h1m3 0h2m2 0h1m1 0h3m1 0h1m2 0h1m1 0h1m1 0h6m2 0h1m1 0h3M55 39h1m32 0h1m11 0h1m6 0h1m1 0h1m2 0h1m3 0h2m2 0h1m4 0h1m1 0h3m5 0h1m1 0h1m4 0h2m2 0h5m3 0h1m3 0h1m4 0h2m1 0h5m1 0h1m1 0h1m1 0h1m1 0h3m1 0h7m2 0h4m1 0h1m2 0h1m1 0h2m1 0h1m7 0h1m10 0h1m12 0h1m3 0h1m10 0h1m3 0h1m3 0h1m3 0h2m2 0h3m1 0h1m2 0h2m1 0h3m3 0h2m3 0h5m3 0h3m2 0h3m1 0h1m3 0h1m3 0h1m6 0h2m6 0h2m3 0h1m1 0h1m11 0h2m6 0h6m1 0h1m3 0h2m2 0h1m6 0h2m4 0h1m1 0h1m6 0h1m8 0h2m3 0h1m4 0h2m1 0h2M12 40h1m57 0h1m2 0h1m8 0h1m22 0h1m12 0h1m4 0h1m1 0h3m7 0h1m3 0h1m1 0h1m1 0h1m2 0h1m10 0h1m1 0h2m1 0h3m2 0h3m1 0h1m1 0h1m1 0h1m1 0h2m1 0h1m1 0h1m4 0h4m1 0h2m2 0h2m1 0h2m1 0h4m1 0h1m5 0h1m6 0h1m13 0h1m5 0h1m6 0h1m13 0h1m1 0h3m1 0h1m1 0h1m1 0h3m2 0h1m1 0h1m2 0h3m4 0h1m3 0h2m3 0h1m1 0h2m2 0h2m4 0h1m4 0h1m1 0h1m8 0h1m4 0h1m3 0h1m2 0h1m1 0h3m5 0h2m1 0h1m3 0h1m7 0h1m3 0h1m2 0h1m2 0h1m2 0h3m2 0h1m1 0h1m4 0h2m1 0h1m6 0h2m1 0h2m2 0h1m2 0h1m2 0h1m4 0h1M86 41h1m7 0h1m11 0h1m3 0h1m1 0h1m1 0h1m1 0h2m4 0h2m1 0h1m1 0h1m4 0h1m2 0h1m2 0h1m2 0h1m2 0h1m1 0h1m2 0h2m3 0h1m2 0h1m1 0h10m2 0h2m1 0h1m4 0h1m1 0h2m3 0h1m1 0h2m5 0h1m2 0h1m1 0h1m1 0h4m8 0h1m41 0h1m7 0h2m8 0h3m2 0h1m8 0h3m2 0h1m4 0h1m1 0h1m2 0h1m2 0h1m2 0h2m2 0h2m8 0h3m3 0h1m8 0h1m2 0h1m2 0h1m5 0h3m1 0h1m2 0h2m2 0h1m4 0h1m1 0h2m1 0h4m1 0h1m1 0h2m11 0h2m2 0h3m1 0h1m2 0h2m1 0h1m5 0h1M62 42h1m3 0h1m1 0h2m9 0h1m17 0h1m8 0h2m3 0h3m5 0h1m2 0h1m4 0h2m3 0h1m1 0h1m1 0h1m3 0h2m1 0h1m1 0h3m9 0h1m1 0h5m2 0h3m2 0h1m1 0h1m1 0h1m1 0h3m2 0h1m4 0h2m1 0h3m1 0h2m4 0h2m1 0h1m2 0h1m3 0h1m6 0h2m1 0h2m7 0h1m4 0h1m17 0h1m11 0h1m1 0h1m2 0h3m2 0h1m4 0h1m1 0h2m5 0h3m3 0h1m1 0h1m1 0h3m1 0h1m1 0h1m8 0h1m5 0h7m1 0h1m3 0h3m3 0h1m1 0h1m3 0h2m3 0h1m3 0h1m4 0h1m3 0h1m7 0h1m1 0h1m1 0h2m3 0h2m1 0h1m2 0h1m2 0h1m1 0h1m3 0h1m5 0h5m1 0h1m1 0h1m1 0h1m1 0h2m2 0h1M96 43h1m3 0h1m11 0h1m5 0h2m2 0h1m3 0h2m1 0h2m4 0h1m1 0h1m4 0h5m2 0h1m6 0h1m3 0h2m1 0h4m3 0h2m1 0h2m1 0h2m1 0h1m1 0h2m1 0h2m1 0h2m1 0h2m1 0h1m4 0h2m1 0h3m1 0h2m6 0h1m8 0h1m1 0h1m3 0h1m5 0h2m2 0h1m5 0h1m16 0h2m1 0h4m2 0h1m1 0h1m6 0h2m2 0h2m1 0h1m2 0h4m1 0h2m8 0h1m2 0h1m4 0h1m2 0h2m5 0h3m1 0h2m2 0h2m1 0h1m1 0h3m1 0h4m1 0h2m1 0h2m3 0h1m2 0h2m3 0h1m1 0h1m4 0h2m4 0h3m2 0h1m1 0h1m4 0h3m4 0h1m1 0h1m6 0h1m5 0h3m3 0h1M56 44h1m5 0h1m5 0h1m11 0h1m4 0h1m14 0h2m2 0h1m6 0h1m3 0h2m2 0h2m2 0h1m4 0h3m2 0h2m1 0h1m1 0h1m3 0h1m2 0h1m5 0h2m3 0h2m2 0h5m1 0h1m4 0h2m1 0h4m5 0h2m2 0h3m1 0h2m2 0h1m3 0h1m3 0h5m9 0h2m11 0h1m5 0h1m19 0h1m4 0h1m4 0h2m2 0h2m1 0h1m3 0h2m2 0h4m1 0h3m1 0h1m3 0h1m1 0h1m2 0h1m2 0h1m2 0h2m1 0h1m9 0h2m1 0h2m3 0h4m4 0h1m3 0h2m2 0h1m1 0h1m7 0h1m1 0h1m1 0h1m4 0h1m5 0h2m3 0h3m1 0h2m2 0h1m1 0h2m4 0h2m3 0h1m2 0h2m2 0h1m2 0h2m1 0h1m2 0h1m2 0h3M72 45h1m8 0h1m16 0h1m8 0h1m1 0h3m1 0h2m2 0h3m1 0h1m1 0h1m1 0h1m1 0h1m12 0h1m1 0h1m6 0h1m1 0h3m3 0h2m1 0h1m1 0h2m1 0h5m1 0h2m3 0h7m1 0h1m3 0h1m1 0h2m1 0h3m1 0h1m1 0h1m5 0h2m5 0h1m1 0h1m2 0h1m1 0h3m9 0h1m3 0h1m9 0h1m10 0h1m6 0h3m1 0h1m3 0h1m1 0h1m2 0h1m10 0h1m2 0h1m7 0h2m1 0h1m2 0h2m7 0h1m1 0h1m1 0h3m2 0h1m1 0h1m9 0h1m5 0h1m10 0h1m3 0h1m1 0h1m5 0h1m3 0h1m2 0h1m1 0h3m6 0h1m4 0h1m2 0h1m2 0h3m2 0h2m7 0h1m1 0h1m4 0h1M97 46h1m8 0h1m2 0h1m1 0h1m6 0h2m10 0h2m2 0h3m2 0h3m3 0h2m2 0h1m1 0h1m2 0h2m1 0h1m1 0h3m1 0h2m2 0h2m3 0h5m4 0h3m2 0h2m1 0h1m1 0h1m2 0h2m1 0h3m1 0h1m33 0h1m18 0h1m2 0h1m3 0h3m2 0h2m4 0h1m4 0h1m8 0h2m2 0h2m2 0h1m1 0h1m8 0h1m1 0h1m5 0h1m1 0h1m2 0h1m3 0h1m2 0h1m5 0h1m2 0h1m6 0h1m1 0h1m4 0h1m3 0h1m5 0h1m2 0h1m3 0h1m4 0h1m4 0h1m2 0h1m4 0h1m1 0h1m1 0h1m2 0h1m1 0h5m2 0h1m2 0h1m5 0h1m1 0h3M29 47h1m25 0h1m25 0h1m12 0h1m1 0h1m10 0h1m5 0h2m3 0h1m1 0h1m4 0h1m1 0h3m1 0h3m3 0h2m2 0h1m2 0h1m1 0h1m1 0h1m2 0h1m1 0h2m1 0h5m2 0h1m1 0h1m1 0h1m1 0h1m1 0h4m1 0h1m3 0h4m1 0h7m3 0h6m2 0h2m1 0h1m2 0h1m1 0h1m1 0h1m1 0h1m1 0h2m3 0h1m6 0h1m19 0h1m3 0h1m8 0h1m1 0h1m4 0h1m4 0h2m5 0h1m1 0h1m5 0h2m1 0h1m2 0h3m2 0h1m1 0h2m1 0h3m1 0h1m4 0h1m2 0h2m1 0h1m4 0h6m1 0h1m1 0h1m2 0h2m2 0h3m2 0h1m1 0h1m4 0h1m4 0h1m3 0h1m4 0h1m7 0h2m1 0h1m1 0h1m4 0h3m1 0h1m5 0h1m10 0h1m2 0h3M56 48h1m9 0h1m9 0h2m12 0h1m15 0h1m1 0h1m6 0h1m4 0h1m1 0h4m3 0h1m1 0h1m3 0h1m1 0h1m1 0h1m2 0h1m1 0h1m1 0h1m1 0h1m3 0h1m4 0h1m2 0h2m1 0h1m1 0h1m1 0h2m5 0h1m1 0h1m4 0h1m1 0h6m1 0h1m4 0h3m3 0h1m5 0h1m6 0h1m5 0h1m2 0h1m1 0h2m9 0h1m5 0h1m2 0h1m16 0h1m3 0h1m1 0h2m3 0h3m1 0h3m1 0h4m3 0h1m2 0h2m1 0h2m2 0h1m1 0h1m1 0h4m1 0h1m5 0h2m5 0h6m1 0h2m6 0h1m14 0h2m2 0h1m3 0h1m4 0h2m3 0h1m1 0h1m1 0h2m3 0h1m2 0h1m2 0h1m1 0h1m1 0h1m2 0h1m1 0h1m1 0h1m4 0h2m1 0h1m1 0h1m4 0h2m2 0h3M54 49h1m1 0h1m58 0h2m1 0h1m4 0h1m4 0h1m1 0h3m3 0h1m2 0h2m5 0h4m1 0h3m4 0h1m1 0h1m1 0h2m6 0h1m2 0h2m2 0h2m1 0h1m2 0h1m1 0h1m1 0h3m4 0h1m6 0h3m10 0h1m7 0h1m2 0h3m3 0h2m27 0h4m1 0h1m1 0h1m1 0h2m1 0h3m2 0h1m3 0h3m2 0h1m2 0h1m1 0h1m2 0h1m1 0h4m1 0h3m1 0h1m3 0h1m4 0h2m4 0h1m2 0h4m1 0h1m2 0h2m2 0h3m1 0h3m1 0h1m1 0h2m2 0h3m1 0h1m1 0h2m1 0h4m1 0h1m2 0h2m1 0h1m2 0h1m2 0h3m2 0h1m5 0h2m1 0h1m14 0h3m1 0h2m2 0h1m1 0h1M67 50h1m8 0h1m3 0h2m7 0h1m4 0h1m2 0h1m8 0h1m7 0h1m1 0h3m1 0h1m3 0h1m1 0h1m3 0h1m3 0h1m7 0h1m2 0h2m5 0h1m4 0h1m1 0h4m2 0h2m2 0h1m1 0h1m1 0h2m2 0h2m1 0h1m2 0h3m6 0h1m2 0h3m4 0h1m1 0h1m4 0h1m1 0h1m8 0h3m7 0h1m3 0h1m5 0h1m11 0h1m3 0h1m4 0h2m2 0h2m3 0h2m5 0h1m1 0h1m4 0h1m1 0h1m1 0h1m1 0h1m1 0h4m5 0h1m1 0h3m9 0h1m1 0h3m6 0h3m1 0h1m2 0h1m3 0h1m2 0h1m2 0h1m2 0h1m4 0h1m1 0h1m1 0h3m1 0h2m2 0h1m1 0h1m1 0h1m1 0h2m4 0h2m8 0h1m2 0h1m1 0h2m2 0h1m4 0h2m4 0h1m1 0h1m1 0h4m1 0h1M60 51h1m7 0h1m14 0h1m16 0h1m4 0h1m1 0h1m1 0h1m6 0h5m2 0h1m3 0h1m3 0h1m1 0h1m1 0h1m4 0h3m4 0h1m2 0h1m2 0h1m4 0h1m2 0h2m1 0h3m2 0h1m1 0h3m2 0h1m1 0h3m1 0h3m2 0h1m1 0h4m7 0h1m2 0h3m2 0h2m4 0h1m2 0h2m7 0h1m10 0h1m7 0h1m12 0h1m3 0h1m5 0h1m3 0h1m1 0h9m1 0h1m4 0h1m12 0h1m2 0h1m2 0h1m6 0h1m4 0h1m1 0h1m5 0h1m2 0h1m3 0h3m1 0h1m1 0h2m1 0h1m7 0h1m5 0h2m1 0h2m2 0h1m2 0h1m1 0h1m2 0h3m1 0h2m1 0h1m5 0h1m1 0h1m1 0h2m3 0h1m3 0h6m2 0h1m1 0h1m1 0h1m2 0h2M54 52h1m6 0h2m4 0h1m4 0h1m1 0h1m2 0h1m1 0h1m3 0h1m22 0h1m6 0h1m5 0h1m7 0h2m1 0h1m3 0h1m3 0h1m8 0h1m3 0h1m2 0h1m3 0h1m3 0h1m1 0h2m2 0h1m3 0h2m1 0h1m1 0h4m3 0h1m1 0h4m2 0h1m4 0h4m3 0h1m10 0h1m21 0h1m18 0h1m6 0h2m5 0h2m2 0h1m3 0h4m1 0h1m1 0h1m5 0h1m1 0h1m4 0h1m3 0h1m4 0h1m8 0h1m7 0h1m1 0h1m4 0h1m1 0h2m2 0h1m1 0h2m2 0h3m6 0h2m5 0h3m7 0h1m1 0h1m1 0h1m2 0h1m1 0h5m1 0h1m2 0h5m1 0h3m1 0h3m4 0h1m1 0h1m1 0h2m1 0h3m1 0h1M55 53h2m24 0h1m3 0h1m6 0h1m9 0h1m2 0h1m5 0h2m1 0h1m1 0h1m2 0h2m2 0h2m3 0h1m3 0h1m6 0h1m8 0h1m13 0h1m2 0h4m5 0h4m4 0h3m2 0h1m2 0h2m1 0h1m5 0h3m1 0h2m2 0h1m31 0h2m25 0h3m1 0h2m2 0h1m1 0h1m2 0h1m2 0h3m3 0h5m5 0h1m1 0h1m2 0h1m4 0h2m3 0h2m1 0h1m1 0h1m4 0h1m1 0h1m4 0h1m2 0h1m5 0h1m3 0h1m1 0h2m5 0h2m1 0h2m7 0h2m2 0h1m3 0h1m1 0h3m1 0h1m2 0h2m1 0h1m1 0h1m3 0h1m2 0h1m2 0h1m1 0h1m2 0h1m1 0h2m7 0h1m1 0h2M70 54h1m33 0h2m1 0h1m3 0h1m1 0h1m2 0h1m5 0h1m1 0h7m4 0h1m1 0h2m5 0h1m4 0h1m1 0h1m7 0h1m1 0h4m1 0h2m2 0h1m3 0h2m1 0h2m4 0h2m1 0h1m7 0h2m2 0h1m2 0h1m1 0h1m1 0h1m7 0h2m2 0h1m5 0h1m1 0h2m26 0h1m9 0h1m2 0h1m2 0h3m1 0h1m10 0h1m1 0h1m3 0h1m5 0h3m1 0h1m5 0h1m1 0h2m4 0h1m1 0h4m2 0h2m1 0h3m3 0h1m6 0h1m2 0h1m4 0h1m3 0h4m6 0h2m3 0h1m3 0h1m3 0h1m4 0h1m1 0h1m1 0h1m2 0h1m1 0h1m4 0h1m1 0h3m1 0h1m6 0h2m1 0h1m1 0h2M85 55h1m20 0h1m4 0h1m1 0h1m8 0h1m8 0h1m2 0h1m1 0h1m1 0h1m5 0h1m1 0h1m17 0h3m1 0h1m1 0h1m1 0h2m2 0h1m2 0h2m2 0h4m3 0h5m3 0h1m5 0h1m1 0h1m14 0h2m1 0h1m10 0h1m14 0h1m2 0h2m6 0h6m1 0h1m2 0h2m3 0h1m1 0h1m8 0h2m1 0h2m1 0h1m2 0h3m2 0h2m14 0h2m7 0h1m3 0h2m3 0h1m1 0h2m1 0h2m3 0h1m1 0h1m2 0h6m2 0h1m1 0h1m5 0h1m2 0h1m3 0h1m1 0h2m2 0h2m3 0h2m1 0h2m6 0h1m1 0h3m8 0h2M107 56h1m3 0h1m1 0h1m1 0h1m1 0h1m2 0h1m1 0h1m1 0h2m1 0h2m1 0h1m1 0h1m1 0h3m1 0h2m2 0h1m1 0h4m1 0h2m1 0h1m5 0h1m1 0h1m1 0h1m1 0h2m1 0h1m8 0h2m3 0h1m1 0h2m5 0h1m3 0h1m1 0h5m1 0h1m1 0h1m4 0h1m7 0h2m7 0h1m3 0h1m20 0h2m10 0h1m1 0h1m1 0h1m1 0h1m5 0h2m3 0h4m1 0h1m1 0h1m5 0h1m1 0h1m1 0h2m6 0h2m2 0h1m5 0h1m3 0h1m1 0h1m8 0h1m2 0h2m4 0h1m1 0h1m3 0h2m3 0h9m2 0h1m2 0h1m4 0h1m1 0h1m2 0h2m3 0h1m4 0h1m3 0h1m1 0h1m2 0h1m1 0h1m4 0h1m3 0h3m1 0h1m2 0h5M60 57h1m46 0h2m6 0h1m6 0h1m10 0h1m2 0h1m5 0h1m1 0h1m7 0h2m5 0h1m2 0h1m4 0h1m2 0h3m1 0h2m3 0h2m1 0h1m4 0h4m1 0h2m2 0h3m4 0h3m11 0h1m2 0h1m8 0h1m5 0h1m6 0h1m2 0h1m19 0h1m1 0h1m7 0h2m2 0h1m2 0h1m9 0h1m1 0h1m1 0h1m2 0h1m3 0h1m1 0h1m1 0h1m5 0h1m11 0h2m7 0h1m2 0h1m3 0h1m4 0h1m2 0h1m1 0h1m1 0h2m5 0h1m4 0h1m1 0h1m1 0h1m2 0h2m2 0h1m4 0h1m1 0h2m2 0h1m1 0h1m4 0h4m2 0h1m1 0h2m3 0h2m3 0h4M57 58h1m1 0h1m46 0h2m1 0h1m10 0h1m1 0h1m4 0h1m4 0h1m1 0h1m2 0h1m4 0h1m2 0h1m2 0h2m2 0h1m8 0h1m1 0h2m1 0h1m3 0h2m6 0h2m1 0h5m2 0h1m2 0h1m1 0h3m1 0h4m2 0h1m1 0h3m9 0h1m12 0h1m11 0h1m2 0h1m1 0h1m16 0h1m2 0h1m5 0h2m2 0h1m6 0h1m8 0h1m1 0h1m1 0h3m2 0h2m2 0h2m6 0h2m1 0h1m2 0h1m3 0h1m3 0h2m4 0h1m2 0h1m1 0h1m1 0h1m4 0h1m3 0h1m3 0h3m4 0h1m5 0h5m2 0h1m3 0h1m1 0h1m1 0h2m3 0h1m6 0h1m2 0h1m2 0h1m5 0h2m2 0h1m3 0h2M58 59h1m51 0h1m4 0h1m2 0h1m13 0h1m8 0h1m3 0h2m5 0h2m3 0h4m7 0h3m2 0h1m1 0h1m1 0h1m3 0h1m1 0h1m2 0h1m2 0h1m1 0h1m4 0h1m1 0h1m1 0h1m1 0h2m1 0h1m15 0h1m1 0h1m25 0h1m17 0h1m1 0h1m2 0h1m2 0h2m1 0h1m12 0h1m2 0h1m1 0h1m2 0h1m4 0h1m1 0h1m1 0h1m5 0h2m1 0h1m12 0h1m1 0h2m1 0h1m1 0h2m1 0h1m1 0h3m2 0h2m1 0h1m3 0h1m2 0h1m2 0h2m3 0h1m2 0h1m1 0h2m2 0h1m2 0h2m2 0h3m1 0h1m2 0h2m1 0h1m7 0h2m1 0h3m1 0h1m1 0h8M77 60h1m36 0h1m6 0h2m3 0h1m4 0h1m1 0h2m7 0h1m4 0h1m2 0h3m4 0h3m6 0h2m3 0h1m1 0h2m1 0h1m2 0h1m2 0h1m1 0h1m5 0h2m1 0h1m1 0h4m29 0h1m4 0h1m4 0h1m24 0h3m3 0h2m2 0h3m3 0h1m2 0h3m4 0h1m6 0h2m2 0h1m11 0h1m1 0h2m6 0h1m3 0h2m2 0h1m2 0h1m1 0h3m4 0h1m4 0h1m5 0h1m1 0h1m2 0h1m4 0h1m6 0h1m1 0h2m2 0h1m1 0h1m2 0h1m1 0h1m10 0h3m1 0h2m1 0h1m2 0h2m2 0h1m1 0h1m4 0h1M74 61h2m11 0h1m29 0h1m1 0h1m15 0h1m5 0h1m16 0h1m1 0h1m1 0h3m2 0h2m5 0h3m4 0h1m2 0h2m3 0h1m1 0h1m1 0h1m2 0h1m1 0h1m31 0h1m30 0h2m5 0h1m5 0h1m4 0h1m6 0h1m1 0h1m5 0h2m5 0h1m19 0h1m9 0h4m8 0h1m2 0h2m1 0h1m2 0h2m1 0h1m5 0h2m2 0h2m4 0h2m5 0h1m7 0h1m3 0h1m2 0h1m3 0h1m1 0h1m2 0h3m3 0h1m5 0h1M115 62h1m13 0h1m20 0h1m1 0h2m161 0h1m52 0h1m3 0h1m1 0h1m9 0h1m8 0h2m13 0h1m1 0h1m2 0h1M135 63h1m2 0h1m3 0h1m7 0h1m147 0h1m21 0h1m7 0h1m17 0h1m14 0h1m15 0h1m4 0h1m3 0h3m5 0h1m10 0h1m6 0h2M112 64h1m11 0h2m1 0h1m2 0h1m2 0h1m13 0h1m4 0h1m1 0h1m80 0h1m31 0h1m2 0h1m42 0h1m28 0h1m17 0h1m5 0h2m1 0h1m5 0h1m3 0h1m3 0h2m3 0h3m4 0h1m9 0h1m1 0h1m3 0h1M108 65h1m8 0h1m3 0h1m1 0h1m6 0h4m3 0h1m8 0h2m6 0h1m85 0h1m87 0h1m26 0h1m19 0h2m6 0h3m4 0h1m3 0h1m5 0h1m6 0h1m4 0h2M72 66h1m36 0h1m12 0h1m5 0h1m6 0h1m1 0h1m3 0h1m1 0h1m2 0h1m3 0h5m69 0h1m42 0h1m4 0h1m16 0h1m12 0h1m4 0h1m8 0h1m5 0h1m3 0h1m9 0h1m11 0h1m12 0h1m4 0h1m7 0h3m1 0h1m3 0h1m3 0h1m1 0h1m1 0h1m2 0h1m8 0h1m2 0h1m4 0h4m1 0h1M94 67h1m14 0h1m11 0h1m2 0h1m1 0h1m5 0h1m1 0h2m1 0h1m9 0h6m74 0h1m43 0h1m7 0h1m18 0h1m2 0h1m6 0h1m12 0h1m15 0h1m2 0h1m8 0h2m14 0h1m3 0h1m4 0h1m1 0h1m17 0h1m6 0h2m2 0h1m7 0h3M94 68h1m25 0h2m1 0h1m1 0h1m8 0h1m1 0h1m5 0h2m1 0h1m1 0h1m2 0h1m2 0h1m84 0h1m23 0h1m2 0h1m4 0h2m8 0h1m5 0h1m18 0h1m19 0h1m3 0h1m38 0h2m1 0h1m3 0h1m1 0h1m3 0h1m8 0h2m3 0h1m14 0h1m2 0h1m1 0h1M107 69h1m14 0h1m7 0h1m2 0h2m6 0h1m8 0h1m1 0h3m101 0h1m4 0h1m17 0h1m1 0h1m1 0h1m5 0h1m10 0h1m5 0h1m13 0h1m39 0h1m4 0h1m2 0h4m13 0h2m3 0h1m12 0h1m2 0h2M72 70h1m8 0h1m7 0h1m5 0h1m15 0h1m2 0h1m6 0h2m4 0h1m5 0h2m3 0h1m6 0h2m1 0h1m2 0h1m41 0h1m85 0h1m1 0h1m16 0h2m33 0h1m11 0h1m12 0h1m7 0h1m4 0h1m4 0h1m4 0h2m3 0h1m4 0h2m8 0h1m9 0h1M69 71h1m12 0h1m25 0h1m4 0h1m5 0h1m14 0h1m3 0h3m3 0h1m2 0h1m2 0h1m65 0h1m18 0h1m18 0h1m17 0h1m6 0h1m9 0h1m13 0h1m24 0h1m4 0h1m18 0h1m4 0h2m7 0h4m1 0h2m2 0h5m2 0h1m8 0h2m3 0h1m1 0h2m6 0h2m4 0h1m2 0h1M123 72h1m4 0h3m2 0h1m2 0h4m3 0h5m1 0h4m2 0h1m7 0h1m1 0h1m101 0h1m5 0h1m3 0h1m13 0h1m2 0h1m23 0h3m1 0h1m6 0h1m17 0h1m8 0h2m1 0h1m5 0h2m2 0h1m7 0h2m4 0h4m2 0h1m4 0h1m2 0h1m7 0h1m4 0h1m2 0h2M55 73h1m18 0h1m38 0h1m10 0h1m2 0h1m7 0h2m5 0h1m1 0h1m1 0h1m1 0h1m1 0h1m1 0h1m1 0h1m13 0h1m45 0h1m20 0h1m28 0h1m22 0h1m28 0h1m1 0h1m26 0h1m3 0h1m7 0h1m8 0h1m1 0h1m4 0h1m16 0h2m1 0h1m5 0h1m1 0h1m4 0h2m4 0h1m1 0h1M120 74h2m5 0h1m6 0h1m1 0h2m2 0h1m1 0h1m3 0h4m1 0h1m34 0h1m14 0h1m20 0h1m33 0h1m17 0h1m1 0h2m5 0h1m11 0h2m12 0h1m4 0h1m2 0h1m2 0h1m9 0h1m4 0h1m5 0h1m9 0h1m2 0h1m14 0h1m2 0h2m7 0h1m8 0h2m4 0h1m1 0h1m2 0h1m5 0h1m1 0h2m3 0h1M99 75h1m9 0h1m5 0h1m4 0h1m9 0h1m3 0h5m2 0h1m1 0h1m1 0h1m1 0h2m2 0h3m33 0h1m28 0h1m38 0h1m4 0h1m9 0h1m6 0h1m8 0h1m5 0h1m5 0h1m8 0h1m10 0h1m10 0h1m1 0h1m10 0h1m9 0h1m13 0h1m3 0h1m2 0h2m4 0h2m1 0h1m2 0h5m1 0h1m13 0h1m3 0h2m1 0h1m1 0h1M69 76h3m21 0h1m3 0h1m23 0h1m2 0h1m12 0h1m2 0h1m6 0h1m1 0h4m56 0h1m31 0h1m25 0h1m4 0h2m4 0h1m4 0h1m12 0h1m6 0h1m9 0h1m6 0h1m5 0h1m18 0h1m5 0h1m17 0h2m4 0h1m3 0h1m3 0h1m2 0h2m4 0h1m1 0h1m10 0h1m1 0h2m1 0h1m4 0h1M53 77h1m1 0h1m14 0h1m22 0h1m4 0h1m21 0h1m5 0h1m5 0h2m8 0h3m2 0h3m5 0h1m26 0h1m49 0h1m9 0h1m35 0h1m7 0h2m1 0h2m13 0h1m2 0h1m2 0h1m9 0h1m1 0h1m1 0h1m2 0h1m8 0h1m7 0h1m3 0h1m4 0h1m7 0h1m7 0h2m2 0h1m4 0h1m4 0h1m2 0h1m1 0h1m6 0h1m3 0h1m5 0h1m2 0h1m2 0h1m1 0h1m1 0h1M18 78h1m81 0h1m7 0h1m3 0h1m6 0h1m2 0h1m3 0h1m2 0h1m3 0h1m2 0h2m1 0h1m1 0h2m3 0h2m1 0h4m1 0h2m57 0h1m11 0h1m42 0h1m1 0h1m5 0h2m41 0h2m6 0h1m23 0h1m2 0h1m2 0h1m2 0h2m1 0h1m1 0h1m1 0h1m10 0h4m7 0h1m1 0h1m1 0h1m1 0h1m2 0h1m4 0h2m1 0h1m1 0h1m3 0h3M53 79h1m55 0h1m2 0h1m8 0h1m4 0h1m2 0h1m1 0h1m3 0h2m2 0h1m1 0h3m2 0h1m1 0h1m1 0h4m43 0h1m35 0h1m28 0h1m11 0h3m13 0h1m1 0h1m3 0h1m17 0h1m6 0h1m2 0h2m9 0h2m3 0h1m13 0h1m12 0h1m6 0h1m5 0h5m1 0h1m2 0h1m1 0h2m1 0h1m2 0h2m4 0h1m2 0h1m4 0h1m3 0h1M54 80h1m11 0h1m1 0h1m11 0h1m24 0h2m11 0h1m2 0h3m6 0h1m1 0h1m4 0h1m3 0h2m1 0h3m2 0h1m1 0h2m1 0h2m118 0h2m5 0h1m5 0h1m6 0h1m10 0h1m16 0h1m12 0h1m1 0h1m16 0h3m5 0h1m4 0h2m1 0h1m7 0h1m2 0h1m1 0h3m4 0h4m2 0h1m1 0h2m2 0h1m1 0h1m4 0h2m2 0h1M84 81h1m27 0h2m4 0h1m9 0h1m1 0h1m3 0h1m3 0h1m8 0h2m1 0h1m1 0h1m1 0h1m66 0h1m33 0h1m6 0h1m8 0h3m1 0h1m5 0h1m4 0h1m2 0h1m1 0h1m8 0h1m2 0h1m2 0h1m2 0h2m7 0h1m2 0h1m1 0h1m5 0h2m23 0h2m2 0h1m6 0h1m4 0h2m3 0h1m6 0h1m4 0h3m4 0h2m7 0h1m1 0h1m4 0h1m2 0h1M55 82h1m57 0h1m3 0h1m7 0h2m4 0h1m3 0h1m3 0h3m1 0h1m2 0h1m1 0h1m2 0h3m17 0h1m49 0h1m12 0h1m30 0h1m1 0h1m4 0h1m2 0h2m1 0h1m17 0h4m19 0h1m9 0h1m4 0h1m13 0h1m10 0h1m6 0h1m2 0h2m1 0h2m2 0h1m1 0h2m5 0h1m3 0h3m1 0h2m1 0h1m3 0h1m2 0h2m1 0h1m3 0h1m2 0h1M16 83h1m38 0h1m51 0h1m3 0h1m6 0h1m5 0h2m5 0h1m3 0h2m1 0h3m1 0h1m3 0h1m3 0h2m2 0h1m21 0h1m11 0h1m30 0h1m2 0h1m46 0h1m12 0h1m2 0h1m9 0h1m3 0h1m4 0h1m13 0h1m1 0h1m10 0h1m2 0h1m1 0h1m5 0h1m3 0h1m7 0h1m13 0h3m1 0h1m1 0h1m2 0h5m6 0h1m4 0h2m6 0h1m3 0h1m1 0h3m3 0h1M69 84h1m28 0h1m9 0h1m6 0h1m1 0h1m2 0h1m6 0h2m4 0h1m5 0h3m1 0h2m1 0h2m1 0h1m2 0h2m6 0h2m8 0h1m24 0h1m70 0h1m24 0h1m5 0h1m6 0h1m17 0h1m8 0h1m4 0h4m13 0h1m12 0h1m6 0h2m1 0h4m1 0h1m1 0h1m9 0h1m5 0h1m1 0h1m5 0h1m3 0h1m3 0h1M84 85h1m32 0h1m7 0h1m1 0h3m4 0h2m1 0h4m2 0h1m3 0h3m4 0h2m31 0h1m57 0h1m9 0h1m7 0h1m2 0h1m4 0h3m9 0h1m2 0h1m2 0h1m2 0h1m5 0h1m6 0h1m3 0h1m11 0h1m5 0h1m2 0h1m3 0h2m4 0h2m7 0h2m5 0h1m1 0h1m7 0h1m2 0h1m2 0h4m1 0h2m1 0h1m2 0h1m4 0h3m1 0h2m3 0h1m1 0h2m1 0h5M54 86h1m14 0h1m10 0h1m27 0h2m16 0h1m1 0h1m1 0h2m1 0h1m2 0h1m1 0h1m1 0h1m2 0h1m1 0h1m1 0h2m2 0h1m1 0h1m5 0h1m36 0h1m20 0h1m3 0h1m9 0h1m9 0h2m8 0h1m2 0h1m10 0h1m2 0h1m3 0h1m2 0h1m10 0h3m6 0h1m21 0h1m9 0h1m2 0h2m5 0h3m7 0h1m7 0h1m1 0h1m11 0h1m2 0h1m1 0h1m1 0h2m5 0h2m3 0h1m10 0h1m5 0h2m2 0h1m1 0h1m1 0h1M60 87h1m47 0h1m9 0h1m7 0h1m2 0h1m1 0h1m7 0h4m2 0h1m1 0h1m1 0h1m1 0h4m13 0h1m8 0h1m15 0h1m7 0h1m36 0h1m27 0h1m6 0h2m6 0h1m5 0h2m3 0h1m16 0h1m3 0h1m9 0h1m2 0h1m2 0h1m1 0h2m2 0h1m20 0h1m3 0h1m7 0h1m3 0h3m7 0h1m1 0h1m5 0h1m2 0h2m1 0h2m1 0h1m2 0h1m4 0h3m2 0h1m1 0h1M80 88h2m3 0h2m2 0h1m5 0h1m13 0h2m2 0h1m7 0h1m9 0h2m1 0h1m4 0h1m1 0h3m3 0h1m1 0h3m1 0h1m40 0h1m21 0h1m41 0h1m4 0h1m9 0h1m3 0h1m4 0h1m4 0h2m11 0h1m2 0h1m3 0h1m2 0h1m4 0h1m21 0h1m1 0h1m6 0h1m9 0h2m5 0h1m3 0h4m1 0h1m1 0h1m1 0h1m1 0h2m4 0h1m1 0h2m5 0h1m5 0h1m1 0h1m1 0h1m1 0h1m5 0h2m2 0h1M2 89h1m82 0h1m22 0h1m8 0h1m1 0h1m9 0h1m2 0h2m8 0h2m1 0h1m1 0h3m5 0h1m3 0h1m17 0h3m8 0h1m20 0h1m6 0h1m21 0h1m18 0h1m6 0h2m8 0h1m1 0h1m4 0h1m4 0h1m2 0h1m3 0h2m3 0h1m1 0h1m1 0h2m7 0h1m4 0h1m6 0h2m3 0h1m5 0h1m1 0h1m5 0h2m6 0h1m4 0h1m7 0h1m3 0h2m2 0h1m2 0h3m2 0h1m1 0h4m2 0h1m1 0h2m5 0h4m1 0h1m3 0h1m1 0h1m2 0h1m2 0h1M64 90h1m9 0h1m8 0h1m4 0h2m15 0h1m5 0h1m2 0h1m1 0h1m13 0h2m3 0h2m1 0h2m1 0h1m9 0h1m1 0h3m22 0h2m11 0h1m53 0h1m9 0h1m15 0h1m2 0h1m2 0h2m1 0h2m1 0h1m7 0h1m4 0h1m2 0h1m16 0h1m1 0h1m15 0h2m7 0h2m1 0h1m10 0h1m7 0h1m3 0h1m4 0h1m3 0h2m9 0h3m4 0h1m1 0h4m1 0h2m3 0h1m2 0h1M50 91h1m48 0h1m7 0h2m7 0h2m7 0h2m2 0h1m1 0h1m2 0h2m2 0h1m2 0h4m2 0h2m1 0h1m3 0h1m87 0h1m14 0h1m3 0h1m1 0h1m4 0h1m3 0h1m5 0h2m7 0h1m2 0h1m3 0h1m1 0h1m9 0h1m15 0h1m12 0h1m15 0h2m2 0h1m7 0h1m2 0h3m1 0h2m1 0h2m1 0h1m4 0h1m2 0h1m2 0h1m1 0h1m2 0h2m5 0h2m2 0h2m1 0h4m2 0h1M43 92h1m14 0h1m16 0h1m22 0h1m13 0h2m9 0h2m3 0h1m2 0h1m4 0h1m2 0h1m2 0h1m6 0h4m60 0h1m9 0h1m4 0h1m15 0h1m12 0h1m1 0h1m2 0h2m5 0h1m2 0h1m1 0h2m3 0h1m1 0h1m4 0h2m2 0h1m3 0h1m5 0h1m13 0h1m3 0h1m2 0h1m1 0h1m18 0h1m4 0h1m8 0h2m12 0h3m7 0h4m3 0h4m8 0h2m1 0h3m3 0h3m3 0h1M9 93h1m43 0h1m56 0h2m5 0h1m3 0h1m3 0h2m8 0h4m1 0h1m2 0h1m4 0h1m1 0h2m2 0h1m59 0h1m17 0h1m18 0h1m23 0h1m2 0h1m9 0h1m3 0h1m3 0h1m3 0h1m1 0h2m10 0h1m1 0h1m4 0h2m3 0h1m9 0h1m18 0h1m3 0h1m2 0h1m8 0h2m1 0h1m1 0h1m1 0h2m1 0h1m1 0h1m1 0h1m1 0h2m3 0h2m4 0h1m1 0h3m1 0h2m1 0h4m4 0h1M35 94h1m8 0h1m21 0h1m7 0h1m8 0h1m2 0h1m3 0h1m16 0h1m6 0h1m3 0h1m6 0h1m2 0h1m2 0h1m3 0h1m3 0h2m8 0h3m16 0h1m1 0h1m32 0h1m12 0h1m4 0h1m33 0h1m1 0h1m2 0h1m1 0h1m12 0h1m2 0h1m1 0h1m2 0h1m12 0h3m2 0h7m5 0h1m5 0h1m2 0h1m3 0h1m4 0h4m1 0h1m1 0h1m5 0h1m3 0h1m1 0h1m10 0h1m10 0h1m2 0h1m3 0h2m1 0h3m1 0h3m5 0h1m2 0h1m2 0h1m1 0h3m1 0h3m1 0h2m1 0h1m1 0h1M68 95h1m18 0h1m13 0h1m6 0h1m9 0h1m3 0h1m1 0h1m1 0h5m1 0h1m4 0h3m2 0h2m4 0h1m3 0h1m2 0h1m10 0h1m28 0h1m37 0h1m8 0h1m1 0h1m1 0h1m13 0h1m1 0h1m3 0h1m5 0h1m7 0h1m10 0h1m1 0h1m1 0h1m7 0h1m3 0h1m2 0h1m2 0h1m7 0h3m1 0h3m3 0h1m6 0h1m10 0h1m8 0h2m7 0h2m5 0h1m2 0h5m1 0h2m4 0h4m2 0h3m2 0h2m2 0h1m1 0h1m5 0h2M65 96h1m30 0h1m15 0h1m2 0h1m1 0h1m1 0h1m1 0h2m1 0h2m4 0h2m2 0h2m5 0h3m1 0h1m1 0h2m1 0h2m43 0h1m13 0h1m11 0h1m22 0h1m9 0h2m6 0h1m1 0h1m12 0h1m6 0h1m1 0h2m2 0h1m3 0h1m1 0h1m4 0h1m3 0h1m6 0h1m4 0h1m3 0h1m1 0h1m3 0h1m1 0h1m3 0h1m1 0h1m1 0h2m10 0h1m2 0h2m7 0h2m1 0h1m1 0h1m2 0h4m1 0h1m1 0h1m3 0h2m1 0h3m3 0h1m1 0h1m1 0h2m2 0h2m1 0h1m4 0h4m1 0h2M66 97h1m22 0h1m6 0h2m10 0h1m5 0h2m9 0h1m2 0h1m9 0h3m2 0h2m1 0h1m2 0h3m34 0h1m4 0h1m2 0h1m9 0h1m1 0h1m41 0h1m2 0h1m1 0h1m6 0h1m1 0h1m1 0h3m8 0h1m4 0h1m2 0h2m2 0h2m5 0h1m8 0h1m18 0h2m3 0h1m3 0h2m3 0h2m2 0h2m8 0h1m2 0h1m11 0h3m1 0h1m4 0h1m1 0h1m5 0h1m1 0h2m6 0h1m2 0h2m3 0h1m1 0h1m1 0h2m1 0h1m2 0h3M80 98h1m15 0h1m1 0h1m13 0h1m1 0h1m7 0h1m1 0h2m1 0h1m5 0h3m2 0h1m2 0h1m1 0h2m1 0h3m1 0h1m1 0h2m20 0h1m7 0h1m4 0h1m31 0h1m31 0h1m11 0h1m1 0h1m17 0h1m3 0h1m7 0h1m24 0h1m1 0h2m4 0h1m6 0h1m1 0h2m1 0h2m3 0h1m10 0h1m13 0h1m3 0h1m1 0h2m4 0h2m2 0h1m2 0h1m2 0h2m1 0h1m4 0h1m2 0h1m2 0h1m2 0h1m2 0h1M0 99h1m63 0h1m28 0h1m22 0h2m10 0h1m4 0h1m1 0h3m1 0h2m1 0h1m2 0h3m2 0h1m1 0h1m1 0h1m61 0h1m6 0h2m11 0h1m9 0h1m9 0h1m3 0h1m6 0h1m1 0h1m11 0h1m2 0h2m1 0h1m3 0h1m5 0h2m3 0h2m2 0h1m5 0h1m5 0h1m5 0h1m3 0h1m7 0h2m9 0h1m6 0h1m6 0h1m10 0h1m5 0h2m3 0h1m2 0h3m2 0h2m2 0h3m1 0h1m1 0h2m1 0h3m1 0h3m1 0h3M1 100h1m14 0h1m39 0h1m7 0h1m13 0h1m8 0h1m9 0h1m12 0h1m3 0h1m4 0h1m2 0h1m3 0h1m3 0h1m1 0h1m5 0h1m3 0h1m2 0h3m1 0h2m2 0h1m15 0h1m21 0h1m10 0h1m10 0h1m8 0h1m1 0h1m15 0h1m16 0h1m12 0h2m2 0h1m6 0h1m9 0h1m11 0h1m2 0h2m8 0h1m1 0h1m4 0h1m1 0h1m1 0h1m1 0h1m3 0h2m1 0h2m8 0h2m7 0h1m1 0h1m1 0h1m7 0h1m3 0h3m5 0h1m2 0h3m6 0h4m4 0h1m8 0h1m2 0h5M20 101h1m35 0h1m48 0h1m22 0h4m5 0h4m4 0h1m1 0h1m2 0h1m3 0h1m12 0h1m1 0h1m34 0h1m1 0h1m10 0h1m37 0h1m1 0h1m9 0h1m3 0h1m1 0h1m2 0h2m1 0h2m12 0h1m16 0h1m2 0h1m6 0h1m12 0h1m2 0h2m9 0h1m8 0h1m4 0h1m6 0h1m4 0h1m2 0h1m1 0h1m6 0h2m1 0h1m6 0h1m1 0h1m2 0h1m3 0h2m6 0h1m1 0h2M44 102h1m10 0h1m40 0h2m12 0h1m4 0h2m8 0h1m2 0h1m4 0h1m4 0h3m1 0h1m1 0h1m1 0h2m4 0h2m14 0h1m56 0h1m2 0h1m1 0h1m2 0h1m20 0h1m7 0h1m7 0h2m1 0h1m4 0h1m3 0h2m2 0h1m2 0h1m6 0h1m3 0h1m2 0h1m2 0h2m8 0h1m2 0h2m4 0h1m7 0h1m17 0h1m5 0h2m2 0h1m2 0h1m1 0h3m3 0h1m1 0h3m1 0h1m1 0h1m4 0h3m2 0h1m3 0h1m6 0h1m3 0h1m2 0h2m2 0h1m1 0h1M67 103h1m17 0h1m24 0h1m3 0h1m1 0h1m4 0h1m1 0h2m1 0h1m5 0h1m1 0h1m1 0h3m3 0h2m3 0h3m1 0h4m6 0h1m8 0h1m6 0h1m2 0h1m12 0h1m20 0h1m8 0h1m10 0h1m1 0h1m12 0h2m12 0h2m2 0h1m2 0h1m6 0h1m5 0h1m5 0h2m1 0h1m5 0h1m1 0h1m2 0h1m1 0h1m7 0h1m4 0h1m8 0h1m3 0h1m3 0h2m5 0h1m3 0h1m20 0h1m5 0h1m1 0h5m1 0h1m1 0h1m2 0h2m1 0h1m3 0h2m1 0h1m1 0h1m2 0h1m1 0h2m1 0h1m3 0h2m1 0h3M15 104h1m8 0h1m18 0h1m15 0h1m8 0h1m2 0h1m13 0h1m1 0h1m3 0h1m1 0h1m29 0h1m2 0h1m1 0h1m5 0h3m5 0h1m3 0h2m2 0h5m38 0h1m53 0h1m15 0h1m2 0h1m1 0h1m2 0h1m11 0h1m4 0h1m1 0h1m2 0h2m2 0h1m3 0h1m2 0h3m11 0h1m2 0h1m2 0h1m1 0h1m7 0h1m5 0h3m1 0h1m9 0h2m3 0h1m13 0h1m4 0h1m1 0h1m1 0h1m1 0h2m1 0h1m2 0h1m2 0h2m2 0h1m1 0h2m7 0h2m1 0h2M45 105h1m66 0h1m7 0h1m2 0h1m1 0h1m1 0h1m1 0h1m4 0h5m1 0h1m2 0h2m1 0h1m5 0h1m1 0h1m18 0h2m30 0h1m6 0h1m1 0h1m27 0h1m14 0h1m11 0h2m4 0h1m4 0h1m19 0h1m5 0h1m21 0h1m8 0h1m2 0h1m3 0h1m4 0h5m3 0h1m1 0h2m5 0h1m3 0h4m1 0h1m2 0h1m4 0h1m6 0h2m1 0h7m1 0h5m8 0h2M56 106h1m34 0h1m8 0h1m6 0h1m7 0h1m6 0h1m3 0h1m3 0h1m2 0h2m1 0h1m4 0h1m3 0h1m19 0h1m13 0h1m27 0h1m20 0h1m19 0h1m1 0h1m3 0h1m11 0h1m2 0h5m7 0h1m5 0h2m5 0h2m4 0h4m2 0h1m1 0h2m1 0h1m5 0h1m1 0h2m3 0h2m1 0h1m2 0h1m2 0h1m1 0h2m1 0h2m6 0h1m9 0h1m5 0h1m3 0h2m1 0h1m3 0h1m4 0h1m1 0h2m1 0h1m2 0h1m8 0h1m5 0h3m5 0h1m1 0h3M1 107h1m76 0h2m27 0h1m1 0h1m1 0h1m2 0h1m9 0h3m1 0h3m6 0h1m3 0h5m2 0h1m1 0h4m1 0h1m18 0h1m12 0h1m38 0h1m4 0h2m21 0h1m9 0h1m5 0h1m1 0h1m3 0h1m1 0h2m1 0h1m3 0h1m12 0h1m1 0h1m1 0h2m3 0h1m1 0h2m12 0h2m13 0h1m12 0h1m10 0h1m3 0h1m2 0h1m4 0h2m1 0h1m1 0h4m1 0h2m3 0h1m1 0h2m1 0h5m3 0h5m5 0h1m2 0h1M68 108h1m15 0h1m23 0h1m7 0h5m8 0h1m3 0h1m5 0h3m3 0h3m4 0h1m1 0h2m13 0h1m23 0h2m10 0h1m15 0h1m5 0h1m16 0h1m12 0h2m18 0h1m1 0h1m3 0h2m7 0h1m5 0h2m3 0h1m1 0h1m1 0h1m5 0h1m5 0h1m2 0h1m3 0h1m3 0h3m4 0h1m3 0h2m5 0h1m11 0h1m5 0h1m1 0h1m1 0h2m4 0h1m3 0h3m1 0h3m4 0h1m1 0h1m1 0h3m1 0h1m1 0h1m2 0h1m1 0h1m1 0h4m1 0h1M76 109h1m7 0h1m1 0h1m5 0h1m16 0h1m4 0h1m1 0h1m5 0h1m3 0h2m4 0h3m2 0h1m3 0h1m2 0h2m3 0h4m1 0h1m12 0h1m22 0h1m4 0h1m2 0h1m18 0h1m3 0h1m2 0h1m2 0h1m11 0h1m14 0h1m10 0h2m5 0h1m2 0h2m1 0h1m3 0h1m6 0h1m1 0h2m4 0h1m2 0h1m2 0h2m1 0h1m11 0h1m5 0h1m2 0h1m1 0h2m1 0h1m13 0h1m1 0h1m7 0h2m8 0h2m1 0h3m1 0h4m2 0h1m2 0h2m7 0h4m2 0h1m1 0h1m1 0h1m2 0h3m2 0h1m1 0h1M92 110h1m2 0h1m12 0h1m5 0h1m1 0h1m9 0h1m4 0h1m2 0h1m2 0h1m1 0h4m2 0h1m1 0h2m1 0h2m1 0h2m13 0h1m20 0h1m6 0h1m38 0h1m3 0h1m5 0h1m30 0h2m1 0h1m2 0h1m9 0h2m1 0h3m3 0h1m1 0h1m1 0h1m6 0h3m15 0h3m9 0h1m1 0h1m3 0h1m1 0h1m2 0h1m7 0h1m4 0h3m5 0h1m1 0h2m1 0h1m1 0h4m1 0h3m7 0h2m2 0h1m1 0h4m2 0h1m1 0h1m3 0h2M22 111h1m35 0h2m39 0h1m7 0h1m2 0h1m6 0h1m12 0h2m1 0h5m1 0h2m1 0h1m2 0h4m2 0h3m20 0h1m7 0h3m7 0h1m8 0h1m11 0h1m11 0h1m7 0h1m14 0h1m17 0h1m2 0h1m5 0h1m1 0h1m1 0h1m1 0h3m3 0h1m1 0h1m10 0h1m6 0h2m5 0h1m3 0h1m3 0h1m1 0h1m6 0h1m2 0h2m2 0h1m1 0h1m2 0h1m1 0h1m5 0h1m7 0h1m2 0h1m2 0h4m5 0h1m2 0h2m1 0h2m2 0h3m2 0h1m2 0h5m1 0h1m3 0h4m1 0h1m5 0h1m1 0h1M55 112h1m55 0h1m7 0h2m2 0h1m1 0h1m6 0h1m2 0h2m1 0h1m2 0h1m1 0h2m3 0h1m2 0h5m3 0h1m6 0h1m17 0h1m17 0h1m11 0h1m6 0h1m20 0h1m8 0h3m3 0h1m4 0h1m5 0h1m1 0h1m4 0h1m1 0h1m1 0h1m3 0h1m5 0h1m5 0h1m1 0h1m4 0h1m2 0h1m7 0h2m11 0h1m5 0h1m3 0h1m1 0h2m3 0h2m1 0h1m7 0h1m4 0h3m4 0h1m1 0h1m3 0h1m3 0h2m4 0h3m1 0h1m2 0h1m4 0h1m1 0h2m2 0h1m6 0h1m1 0h1m1 0h1m3 0h1M29 113h1m27 0h1m1 0h1m13 0h1m29 0h1m2 0h1m2 0h2m11 0h2m1 0h1m3 0h2m7 0h4m6 0h1m1 0h1m1 0h3m24 0h1m4 0h1m18 0h1m12 0h1m15 0h1m29 0h1m2 0h1m10 0h1m4 0h1m6 0h1m2 0h2m5 0h1m4 0h1m3 0h1m4 0h1m4 0h1m1 0h1m2 0h1m5 0h1m1 0h2m2 0h1m16 0h2m1 0h1m1 0h2m1 0h1m6 0h2m1 0h1m1 0h1m1 0h1m9 0h8m1 0h1m1 0h1m1 0h1m4 0h6m1 0h3m1 0h1m1 0h1M78 114h1m22 0h1m3 0h1m4 0h1m5 0h1m7 0h1m1 0h3m1 0h3m1 0h1m1 0h1m2 0h1m1 0h1m2 0h2m3 0h2m1 0h3m32 0h1m3 0h1m5 0h1m15 0h1m5 0h1m11 0h2m5 0h1m2 0h1m1 0h1m7 0h1m21 0h1m1 0h1m3 0h1m1 0h2m1 0h1m6 0h1m1 0h1m3 0h1m2 0h1m8 0h1m5 0h1m4 0h1m4 0h2m1 0h2m1 0h1m2 0h1m5 0h1m2 0h4m6 0h2m4 0h2m1 0h1m2 0h1m2 0h1m2 0h1m2 0h2m4 0h1m3 0h1m2 0h1m2 0h1m2 0h1m1 0h2m2 0h1m2 0h2m3 0h2m1 0h1m1 0h1m1 0h2M32 115h2m15 0h1m9 0h1m27 0h1m13 0h1m11 0h1m1 0h2m2 0h1m1 0h1m3 0h1m3 0h1m3 0h1m1 0h1m4 0h3m3 0h1m5 0h2m1 0h1m5 0h1m4 0h1m5 0h1m7 0h1m13 0h1m19 0h1m2 0h1m7 0h1m12 0h1m1 0h1m9 0h1m1 0h1m11 0h1m3 0h1m1 0h1m4 0h1m6 0h1m7 0h1m2 0h1m4 0h1m5 0h1m1 0h1m18 0h1m3 0h2m8 0h2m2 0h1m2 0h2m5 0h1m1 0h1m4 0h5m2 0h2m1 0h2m2 0h2m1 0h1m1 0h2m2 0h1m2 0h1m3 0h1m3 0h1m5 0h1m2 0h3m2 0h3m2 0h3M11 116h1m54 0h1m2 0h1m18 0h2m15 0h2m3 0h2m9 0h2m1 0h1m4 0h1m1 0h1m5 0h1m8 0h4m2 0h1m1 0h1m13 0h1m10 0h2m8 0h1m11 0h1m3 0h1m7 0h1m2 0h1m6 0h1m4 0h1m3 0h2m5 0h2m4 0h1m1 0h1m6 0h1m11 0h2m5 0h2m2 0h1m1 0h1m2 0h1m9 0h1m6 0h3m3 0h1m1 0h2m12 0h1m1 0h2m3 0h1m2 0h1m2 0h1m1 0h1m4 0h2m9 0h1m3 0h1m5 0h1m5 0h3m2 0h1m2 0h2m1 0h3m1 0h1m7 0h1m1 0h2m5 0h2m1 0h1m2 0h1m1 0h5m1 0h2M81 117h1m2 0h1m1 0h1m1 0h1m5 0h1m13 0h1m6 0h1m8 0h2m1 0h1m6 0h1m7 0h1m2 0h3m1 0h1m5 0h1m10 0h1m9 0h1m11 0h1m42 0h1m30 0h1m7 0h1m9 0h1m1 0h2m10 0h1m5 0h2m2 0h1m1 0h1m2 0h2m2 0h1m7 0h1m1 0h1m3 0h1m6 0h2m2 0h1m2 0h1m4 0h1m1 0h1m4 0h1m3 0h2m6 0h3m1 0h1m2 0h1m1 0h2m2 0h1m1 0h2m4 0h1m1 0h1m2 0h1m4 0h1m1 0h1m1 0h9m1 0h1m3 0h2M69 118h1m2 0h1m8 0h1m1 0h1m1 0h1m20 0h1m3 0h1m2 0h2m8 0h1m2 0h2m4 0h1m1 0h3m2 0h3m4 0h1m2 0h4m10 0h1m2 0h1m7 0h1m15 0h1m38 0h1m3 0h1m13 0h1m11 0h1m11 0h1m1 0h3m5 0h2m5 0h1m1 0h2m3 0h1m2 0h2m1 0h1m1 0h1m3 0h1m1 0h2m7 0h1m1 0h3m2 0h1m5 0h1m4 0h1m2 0h1m1 0h1m2 0h2m1 0h2m3 0h1m4 0h1m1 0h1m1 0h2m4 0h1m5 0h3m1 0h1m2 0h2m1 0h1m4 0h1m1 0h2m5 0h1m1 0h1m1 0h1m2 0h1m1 0h2m1 0h1m1 0h1m1 0h1m1 0h1M89 119h1m16 0h1m3 0h2m2 0h1m2 0h1m5 0h1m8 0h3m1 0h1m1 0h2m2 0h3m3 0h2m1 0h2m2 0h1m33 0h1m24 0h1m10 0h1m3 0h2m1 0h1m34 0h1m8 0h2m1 0h1m6 0h1m11 0h1m2 0h1m2 0h2m1 0h1m5 0h2m5 0h1m2 0h2m1 0h1m1 0h4m3 0h3m5 0h1m9 0h1m3 0h1m7 0h2m1 0h2m3 0h1m5 0h2m1 0h2m2 0h2m1 0h4m4 0h2m1 0h2m4 0h2m1 0h1m2 0h1m1 0h2M11 120h1m47 0h1m3 0h1m8 0h1m2 0h1m5 0h1m37 0h2m1 0h2m2 0h1m1 0h1m8 0h2m1 0h1m6 0h1m1 0h1m42 0h1m10 0h1m16 0h1m2 0h1m13 0h2m8 0h1m3 0h1m16 0h1m1 0h1m1 0h1m6 0h1m1 0h3m3 0h1m1 0h1m3 0h1m1 0h1m7 0h1m10 0h1m12 0h2m5 0h1m8 0h2m14 0h2m6 0h1m1 0h1m1 0h2m3 0h1m2 0h1m2 0h1m2 0h6m1 0h1m1 0h1m2 0h2m1 0h2m1 0h2m1 0h1m2 0h1m1 0h2m2 0h1M72 121h1m39 0h1m5 0h3m5 0h1m4 0h1m3 0h2m5 0h1m1 0h3m4 0h2m33 0h1m7 0h1m24 0h1m2 0h1m7 0h1m3 0h1m3 0h1m5 0h1m19 0h1m1 0h1m3 0h1m3 0h1m7 0h2m1 0h1m2 0h1m3 0h3m7 0h2m2 0h2m2 0h2m1 0h1m5 0h2m1 0h1m3 0h2m7 0h1m3 0h2m2 0h1m3 0h2m6 0h2m1 0h1m5 0h3m1 0h1m1 0h2m12 0h1m1 0h4m1 0h3m1 0h4m4 0h1m2 0h2m1 0h3m3 0h1M74 122h1m37 0h1m6 0h1m1 0h1m1 0h1m4 0h1m3 0h1m5 0h1m1 0h1m2 0h2m1 0h1m4 0h2m1 0h1m3 0h1m16 0h1m3 0h1m1 0h1m10 0h1m1 0h1m14 0h1m5 0h1m4 0h2m12 0h3m4 0h1m11 0h1m6 0h1m1 0h1m2 0h2m2 0h3m2 0h1m6 0h1m1 0h1m7 0h6m2 0h2m2 0h1m2 0h1m2 0h1m3 0h3m1 0h1m9 0h2m5 0h1m4 0h1m1 0h1m1 0h1m9 0h1m2 0h1m9 0h1m4 0h4m3 0h1m3 0h1m2 0h1m1 0h4m2 0h1m2 0h2m4 0h1m2 0h1m1 0h4m1 0h1m1 0h1M32 123h1m38 0h1m35 0h2m6 0h2m2 0h2m3 0h1m1 0h1m1 0h1m3 0h3m3 0h2m2 0h2m1 0h2m3 0h4m1 0h1m4 0h1m16 0h1m14 0h1m1 0h1m1 0h1m13 0h1m8 0h1m12 0h1m4 0h1m9 0h1m23 0h1m18 0h2m2 0h2m3 0h1m2 0h2m5 0h1m6 0h1m2 0h1m4 0h1m2 0h1m4 0h2m1 0h1m2 0h1m3 0h1m1 0h1m1 0h2m5 0h1m4 0h2m3 0h4m1 0h3m2 0h1m1 0h2m1 0h1m3 0h1m1 0h1m2 0h2m2 0h3m1 0h1m6 0h3m7 0h4" stroke="#3300ff" stroke-width="1.02" fill="none"/>
<path transform="translate(95 21.5) scale(1.68990 1.00000)" d="M0 0h1m2 0h1m1 0h1m2 0h1m4 0h1m4 0h1m2 0h2m2 0h5m1 0h4m1 0h2m1 0h1m1 0h3m3 0h1m3 0h2m2 0h1m2 0h1m2 0h2m4 0h1m8 0h1m23 0h1m2 0h1m4 0h1m8 0h1m29 0h1m98 0h1m3 0h1m6 0h1m1 0h3m8 0h1m20 0h1m13 0h1m27 0h1m28 0h1m10 0h1m8 0h1m4 0h1m12 0h1m6 0h1M2 1h3m1 0h1m1 0h3m3 0h2m2 0h2m3 0h2m2 0h2m4 0h2m1 0h1m1 0h2m1 0h1m3 0h1m1 0h4m1 0h2m19 0h1m1 0h1m7 0h1m5 0h3m11 0h2m2 0h1m13 0h1m5 0h1m9 0h1m78 0h1m4 0h1m4 0h1m6 0h1m1 0h1m2 0h1m4 0h2m11 0h2m1 0h2m51 0h1m69 0h1m32 0h1M4 2h4m1 0h1m2 0h1m2 0h3m1 0h3m2 0h2m2 0h5m3 0h1m1 0h1m1 0h3m2 0h1m2 0h1m1 0h2m20 0h1m1 0h2m10 0h1m10 0h2m4 0h1m4 0h1m40 0h1m7 0h1m50 0h1m7 0h1m11 0h1m10 0h1m4 0h1m5 0h1m1 0h1m2 0h1m2 0h3m53 0h1m19 0h1m61 0h1m7 0h1M0 3h1m2 0h3m3 0h2m4 0h2m1 0h2m1 0h1m1 0h1m2 0h1m2 0h1m4 0h1m1 0h1m1 0h6m1 0h9m7 0h1m9 0h1m1 0h1m7 0h1m1 0h1m5 0h2m8 0h2m79 0h1m27 0h1m5 0h1m1 0h1m3 0h1m5 0h1m4 0h1m9 0h1m3 0h1m4 0h1m4 0h1m3 0h1m3 0h1m16 0h1m10 0h1m5 0h1m40 0h1M4 4h1m2 0h2m1 0h1m3 0h1m1 0h3m2 0h3m2 0h2m1 0h1m1 0h3m1 0h1m1 0h1m1 0h5m2 0h3m1 0h2m4 0h1m3 0h1m2 0h4m3 0h1m2 0h2m8 0h1m11 0h1m1 0h1m3 0h1m3 0h1m1 0h1m3 0h1m4 0h1m27 0h2m7 0h1m43 0h1m10 0h1m5 0h1m1 0h1m9 0h2m4 0h1m11 0h1m5 0h1m5 0h1m2 0h1m51 0h1m45 0h1m6 0h2m41 0h1M1 5h2m1 0h2m1 0h2m6 0h1m2 0h2m4 0h2m1 0h1m1 0h1m2 0h1m3 0h1m1 0h1m3 0h1m2 0h1m1 0h1m2 0h2m2 0h3m2 0h2m2 0h1m1 0h3m1 0h1m1 0h1m2 0h1m5 0h3m1 0h1m20 0h1m23 0h1m78 0h1m7 0h1m4 0h1m3 0h2m17 0h1m6 0h1m45 0h1m48 0h2m16 0h1M0 6h4m1 0h2m1 0h7m4 0h2m1 0h2m2 0h2m1 0h1m1 0h1m1 0h1m1 0h8m3 0h1m1 0h3m13 0h1m4 0h1m11 0h1m3 0h1m2 0h2m3 0h1m1 0h1m7 0h1m48 0h1m2 0h1m7 0h1m8 0h1m23 0h1m11 0h1m33 0h1m6 0h2m3 0h2m30 0h1m9 0h1m6 0h1m6 0h1M0 7h2m3 0h1m1 0h1m1 0h2m1 0h1m4 0h2m1 0h3m1 0h6m1 0h3m1 0h4m1 0h1m3 0h1m2 0h2m3 0h1m5 0h1m3 0h1m2 0h1m3 0h3m2 0h2m1 0h1m3 0h1m1 0h1m1 0h1m7 0h3m15 0h1m12 0h1m43 0h1m39 0h1m3 0h1m36 0h3m20 0h1m38 0h1m17 0h1m5 0h1m6 0h1m11 0h1m4 0h1m5 0h1m48 0h1M0 8h6m3 0h2m1 0h3m1 0h1m2 0h1m1 0h1m1 0h1m2 0h3m1 0h3m1 0h2m1 0h1m1 0h2m1 0h1m1 0h7m1 0h2m3 0h1m5 0h1m6 0h1m1 0h1m5 0h1m21 0h1m16 0h1m30 0h1m7 0h1m50 0h1m7 0h1m10 0h1m13 0h1m8 0h1m2 0h1m10 0h1m53 0h1m12 0h1m18 0h1m7 0h1m15 0h1m19 0h2m6 0h1M2 9h2m1 0h2m1 0h4m2 0h2m1 0h3m3 0h1m1 0h5m2 0h3m1 0h2m1 0h1m1 0h8m1 0h1m1 0h2m15 0h1m3 0h2m5 0h2m2 0h2m1 0h2m3 0h1m10 0h1m1 0h1m18 0h1m83 0h2m5 0h1m4 0h1m11 0h1m18 0h1m1 0h1m20 0h1m7 0h1m26 0h1m53 0h1m18 0h1m1 0h1m26 0h1m3 0h1M0 10h2m5 0h6m4 0h3m1 0h1m3 0h1m2 0h6m2 0h3m1 0h2m1 0h1m3 0h1m2 0h2m4 0h2m6 0h1m16 0h1m1 0h1m4 0h1m1 0h1m6 0h1m5 0h1m104 0h1m11 0h1m3 0h1m2 0h1m9 0h1m10 0h1m3 0h1m1 0h1m3 0h1m1 0h1m4 0h1m11 0h1m2 0h1m5 0h1m23 0h1m3 0h1m13 0h1m21 0h1m5 0h1m6 0h1m1 0h1m4 0h1m37 0h1M2 11h1m1 0h2m1 0h1m1 0h1m1 0h1m2 0h1m2 0h5m3 0h6m3 0h4m3 0h6m1 0h2m13 0h1m1 0h1m8 0h1m3 0h1m5 0h1m19 0h1m21 0h1m93 0h1m2 0h1m7 0h1m1 0h1m5 0h1m1 0h1m1 0h1m10 0h1m27 0h1m4 0h1m38 0h1m10 0h1m25 0h1m17 0h1M0 12h1m1 0h2m1 0h1m1 0h3m2 0h2m2 0h1m5 0h2m2 0h2m1 0h1m2 0h2m1 0h1m1 0h1m5 0h6m2 0h2m1 0h1m7 0h3m1 0h1m10 0h1m9 0h1m7 0h1m5 0h1m1 0h1m11 0h1m3 0h1m46 0h1m42 0h1m10 0h1m1 0h1m6 0h1m13 0h1m6 0h1m1 0h1m2 0h1m3 0h1m55 0h1m45 0h1m5 0h1m37 0h1M3 13h1m3 0h2m1 0h1m1 0h1m2 0h3m3 0h2m1 0h4m1 0h1m1 0h3m1 0h1m2 0h2m1 0h1m4 0h3m2 0h3m3 0h1m8 0h1m6 0h1m10 0h1m2 0h1m14 0h2m110 0h2m6 0h2m15 0h1m9 0h1m2 0h1m6 0h1m34 0h1m2 0h1m34 0h1m15 0h1m50 0h1M0 14h2m2 0h7m5 0h1m2 0h1m1 0h4m2 0h1m1 0h1m4 0h1m5 0h2m3 0h1m4 0h3m2 0h3m10 0h1m11 0h1m2 0h1m4 0h2m31 0h1m13 0h1m66 0h1m15 0h1m2 0h1m8 0h1m17 0h1m3 0h1m3 0h2m2 0h1m81 0h2m63 0h1M1 15h2m2 0h1m2 0h1m1 0h1m2 0h3m1 0h1m1 0h1m1 0h6m1 0h1m2 0h9m1 0h8m3 0h1m1 0h2m5 0h1m2 0h1m4 0h1m6 0h1m3 0h1m3 0h1m9 0h1m1 0h1m3 0h1m1 0h2m39 0h1m3 0h1m7 0h1m52 0h1m10 0h1m4 0h1m23 0h1m5 0h1m1 0h1m3 0h1m46 0h1m12 0h1m4 0h1m16 0h1m20 0h1m1 0h1m3 0h1m35 0h1M0 16h2m1 0h2m1 0h2m1 0h1m3 0h2m3 0h1m1 0h4m1 0h1m1 0h1m2 0h1m4 0h2m3 0h3m1 0h4m13 0h1m5 0h2m3 0h1m3 0h1m2 0h1m3 0h1m2 0h1m13 0h1m1 0h1m5 0h1m45 0h1m1 0h1m23 0h1m26 0h1m9 0h1m9 0h2m2 0h1m8 0h1m1 0h1m4 0h1m4 0h1m2 0h1m4 0h1m14 0h1m24 0h1m20 0h1m1 0h1m23 0h1m11 0h1m33 0h1m3 0h1m9 0h1M0 17h3m2 0h2m2 0h1m1 0h2m2 0h2m2 0h2m1 0h3m2 0h4m1 0h1m2 0h1m2 0h2m1 0h1m1 0h3m1 0h4m3 0h1m7 0h2m9 0h1m4 0h1m4 0h1m7 0h1m2 0h3m6 0h2m53 0h1m48 0h2m11 0h1m7 0h3m10 0h1m3 0h2m7 0h1m65 0h1m16 0h1m1 0h1m4 0h1m7 0h1m4 0h1m4 0h1m10 0h1m17 0h1M1 18h1m1 0h1m1 0h2m2 0h1m9 0h1m1 0h1m1 0h3m3 0h3m2 0h1m1 0h2m1 0h2m2 0h4m3 0h3m9 0h1m14 0h1m6 0h1m8 0h2m3 0h1m7 0h1m43 0h2m6 0h1m32 0h1m21 0h1m7 0h1m2 0h1m11 0h1m8 0h1m2 0h1m3 0h2m4 0h2m29 0h1m4 0h1m7 0h1m75 0h1m22 0h1M0 19h2m1 0h1m2 0h2m3 0h1m1 0h3m1 0h4m1 0h9m5 0h1m2 0h3m1 0h2m1 0h1m1 0h1m2 0h1m5 0h6m4 0h1m1 0h1m12 0h1m2 0h1m10 0h1m4 0h1m7 0h1m1 0h1m7 0h1m35 0h1m79 0h1m2 0h1m1 0h1m1 0h1m8 0h1m7 0h1m30 0h2m21 0h1m11 0h1m11 0h1m26 0h1m14 0h1m21 0h1m11 0h1M1 20h2m2 0h1m1 0h3m2 0h2m1 0h1m2 0h1m2 0h3m1 0h1m1 0h1m3 0h1m1 0h3m1 0h1m1 0h1m1 0h1m2 0h3m1 0h4m2 0h1m6 0h2m3 0h2m8 0h1m4 0h1m1 0h1m4 0h2m9 0h1m1 0h3m12 0h1m29 0h1m8 0h1m8 0h1m10 0h1m31 0h1m3 0h1m7 0h1m15 0h1m9 0h1m3 0h1m2 0h1m34 0h1m17 0h1m30 0h1m13 0h1m16 0h1m28 0h1M0 21h1m1 0h3m1 0h2m3 0h5m1 0h5m1 0h3m1 0h1m1 0h2m2 0h1m3 0h2m1 0h1m5 0h1m3 0h1m1 0h1m10 0h2m2 0h1m4 0h2m17 0h1m1 0h1m1 0h3m19 0h1m32 0h1m37 0h1m23 0h1m5 0h1m3 0h2m13 0h1m7 0h1m8 0h1m2 0h1m2 0h1m18 0h1m25 0h1m44 0h1m13 0h1m12 0h1M1 22h1m1 0h2m1 0h1m5 0h1m1 0h1m3 0h5m1 0h2m1 0h1m1 0h1m1 0h1m1 0h1m2 0h3m3 0h4m1 0h1m2 0h1m1 0h3m2 0h3m2 0h1m2 0h1m2 0h1m1 0h1m1 0h1m4 0h1m4 0h1m8 0h1m7 0h1m3 0h1m96 0h1m5 0h1m1 0h1m2 0h1m7 0h3m1 0h1m26 0h1m8 0h1m23 0h1m7 0h1m18 0h2m7 0h1m10 0h1m33 0h1m7 0h1M1 23h2m2 0h1m5 0h2m2 0h1m1 0h2m1 0h1m1 0h2m1 0h4m2 0h1m2 0h3m2 0h3m1 0h1m3 0h2m1 0h3m1 0h2m11 0h1m4 0h1m1 0h1m1 0h1m10 0h1m2 0h1m1 0h3m2 0h1m1 0h1m2 0h2m24 0h2m8 0h1m15 0h1m5 0h1m50 0h2m7 0h1m2 0h1m9 0h1m30 0h1m33 0h1m39 0h1m9 0h1m15 0h1m48 0h1M2 24h3m2 0h2m2 0h2m1 0h1m1 0h1m2 0h1m3 0h2m1 0h2m1 0h5m1 0h1m1 0h2m1 0h3m2 0h3m1 0h1m3 0h1m2 0h1m11 0h1m2 0h1m11 0h1m1 0h3m3 0h1m1 0h1m8 0h2m95 0h1m8 0h1m36 0h1m6 0h1m4 0h1m2 0h1m10 0h1m10 0h1m6 0h1m24 0h1m59 0h1m4 0h1M0 25h1m2 0h3m2 0h4m2 0h1m3 0h2m4 0h6m1 0h2m1 0h1m3 0h3m1 0h1m1 0h1m1 0h1m2 0h3m2 0h1m4 0h2m3 0h1m6 0h1m5 0h1m3 0h1m5 0h3m2 0h1m4 0h1m4 0h2m26 0h1m24 0h1m8 0h1m31 0h1m11 0h2m3 0h1m13 0h1m12 0h1m1 0h2m15 0h1m51 0h2m13 0h1m32 0h1m4 0h2m39 0h1M0 26h1m1 0h1m2 0h1m1 0h1m1 0h1m1 0h1m3 0h4m2 0h4m1 0h1m1 0h2m3 0h1m6 0h1m4 0h3m1 0h3m3 0h1m2 0h1m1 0h1m12 0h1m10 0h3m6 0h1m3 0h1m4 0h2m11 0h1m14 0h1m85 0h1m5 0h1m2 0h1m18 0h1m1 0h2m8 0h1m3 0h1m7 0h1m15 0h1m10 0h1m14 0h1m1 0h2m2 0h1m40 0h1m48 0h1M0 27h2m1 0h4m1 0h3m6 0h3m1 0h3m1 0h2m1 0h4m1 0h4m3 0h1m1 0h3m1 0h2m1 0h2m1 0h1m2 0h3m1 0h1m6 0h1m1 0h2m7 0h2m5 0h3m1 0h3m3 0h1m1 0h2m5 0h1m5 0h1m1 0h1m33 0h1m70 0h2m1 0h1m1 0h1m2 0h1m8 0h1m1 0h1m1 0h2m4 0h1m15 0h1m42 0h1m12 0h1m5 0h1m22 0h1m5 0h2M1 28h1m1 0h3m1 0h5m3 0h3m1 0h1m1 0h8m1 0h2m2 0h2m2 0h1m1 0h1m1 0h2m2 0h5m3 0h1m1 0h3m1 0h2m7 0h1m1 0h1m6 0h2m5 0h2m15 0h3m18 0h1m9 0h1m85 0h1m4 0h1m3 0h1m2 0h1m16 0h1m2 0h1m1 0h1m2 0h1m15 0h1m3 0h1m11 0h1m5 0h1m4 0h1m11 0h2m14 0h2m22 0h1m29 0h1M2 29h4m2 0h2m1 0h5m1 0h2m2 0h1m1 0h5m1 0h7m1 0h3m1 0h2m1 0h3m1 0h4m1 0h2m2 0h1m7 0h1m3 0h3m5 0h1m7 0h4m13 0h1m14 0h1m14 0h1m16 0h1m2 0h1m23 0h1m32 0h1m4 0h1m1 0h2m5 0h1m5 0h1m3 0h1m6 0h1m1 0h1m1 0h1m6 0h1m8 0h1m11 0h1m6 0h1m5 0h1m3 0h1m52 0h2m20 0h1M0 30h1m1 0h2m1 0h5m1 0h1m1 0h1m1 0h1m1 0h1m3 0h1m1 0h1m1 0h1m2 0h2m1 0h2m2 0h3m1 0h1m1 0h3m2 0h3m1 0h2m1 0h2m17 0h3m4 0h1m5 0h2m4 0h1m4 0h1m2 0h3m1 0h3m1 0h1m99 0h5m13 0h2m11 0h1m1 0h1m4 0h2m41 0h1m53 0h1m20 0h1M0 31h1m1 0h1m4 0h3m4 0h1m1 0h4m1 0h2m4 0h1m1 0h10m1 0h1m1 0h1m2 0h8m3 0h1m7 0h1m1 0h1m4 0h1m1 0h3m3 0h2m1 0h1m17 0h2m53 0h1m52 0h1m2 0h1m13 0h1m5 0h2m11 0h1m13 0h1m34 0h1m8 0h1m11 0h1m8 0h1m15 0h1m17 0h1m5 0h2m21 0h1m15 0h1M0 32h1m1 0h5m3 0h2m2 0h1m1 0h3m1 0h7m1 0h3m1 0h1m2 0h7m1 0h3m1 0h3m2 0h1m8 0h2m4 0h2m6 0h1m7 0h1m2 0h1m3 0h3m1 0h1m8 0h1m9 0h1m63 0h1m21 0h1m8 0h3m6 0h1m14 0h1m8 0h1m5 0h1m12 0h1m10 0h1m2 0h1m2 0h1m29 0h1m20 0h1m34 0h2m6 0h1m4 0h1m24 0h1M0 33h2m1 0h3m1 0h2m2 0h2m2 0h1m1 0h1m1 0h2m2 0h2m1 0h2m3 0h3m1 0h1m2 0h4m1 0h2m1 0h2m1 0h3m1 0h1m5 0h1m3 0h1m3 0h1m3 0h1m1 0h1m6 0h1m1 0h1m1 0h3m5 0h4m1 0h5m1 0h1m27 0h1m11 0h1m2 0h1m2 0h1m4 0h1m59 0h1m1 0h1m12 0h1m15 0h1m6 0h1m1 0h1m3 0h2m3 0h1m1 0h1m6 0h1m1 0h1m11 0h1m23 0h1m16 0h1M0 34h1m1 0h1m1 0h6m1 0h1m1 0h3m4 0h1m1 0h1m2 0h2m2 0h1m1 0h9m1 0h2m1 0h1m1 0h4m1 0h2m1 0h1m2 0h1m2 0h1m3 0h1m1 0h2m16 0h3m13 0h1m5 0h1m10 0h1m1 0h1m35 0h1m53 0h1m5 0h1m5 0h1m2 0h1m16 0h1m3 0h1m6 0h1m1 0h1m3 0h2m3 0h1m2 0h1m6 0h1m10 0h1m2 0h1m60 0h1M2 35h1m1 0h3m4 0h1m3 0h3m1 0h3m1 0h5m1 0h5m5 0h4m1 0h1m2 0h5m9 0h1m3 0h1m11 0h1m2 0h1m1 0h3m6 0h2m5 0h1m1 0h1m3 0h1m24 0h1m7 0h1m51 0h1m38 0h2m17 0h2m2 0h2m3 0h1m2 0h1m5 0h1m10 0h1m34 0h1m16 0h1m11 0h1m18 0h1m25 0h1m9 0h1m12 0h1M1 36h1m3 0h1m3 0h3m4 0h2m2 0h4m2 0h5m1 0h1m1 0h1m1 0h1m1 0h1m1 0h2m1 0h5m1 0h2m8 0h2m1 0h1m3 0h2m1 0h1m11 0h1m1 0h1m2 0h1m5 0h1m5 0h1m4 0h1m1 0h1m5 0h1m8 0h1m14 0h1m9 0h1m10 0h1m1 0h1m8 0h1m45 0h1m6 0h1m10 0h1m3 0h1m5 0h1m5 0h1m1 0h2m2 0h1m3 0h1m3 0h1m48 0h1m19 0h1m16 0h1m13 0h1m1 0h1m30 0h1M0 37h1m2 0h4m1 0h6m1 0h1m1 0h7m1 0h2m1 0h1m2 0h2m1 0h2m1 0h3m3 0h2m1 0h1m1 0h7m1 0h1m3 0h1m3 0h1m5 0h1m2 0h1m2 0h1m3 0h1m1 0h1m3 0h1m11 0h1m25 0h1m21 0h1m1 0h1m6 0h1m52 0h1m1 0h1m4 0h1m6 0h1m20 0h1m4 0h1m3 0h1m6 0h1m13 0h1M0 38h7m1 0h4m2 0h1m3 0h1m4 0h5m2 0h1m1 0h1m3 0h4m4 0h7m1 0h2m1 0h2m1 0h5m4 0h1m1 0h2m8 0h1m1 0h1m1 0h1m1 0h1m2 0h1m2 0h1m2 0h2m7 0h1m4 0h1m24 0h1m7 0h1m13 0h1m55 0h1m1 0h1m2 0h2m1 0h1m6 0h1m3 0h1m16 0h2m2 0h1m4 0h1m3 0h1m18 0h2m6 0h1m5 0h1m9 0h1m8 0h1m41 0h1m1 0h1m25 0h2M1 39h1m1 0h1m1 0h5m3 0h10m1 0h1m1 0h8m2 0h3m2 0h2m2 0h1m1 0h1m1 0h2m1 0h3m2 0h1m2 0h1m9 0h1m5 0h1m5 0h2m5 0h1m14 0h1m16 0h1m1 0h1m27 0h2m2 0h1m42 0h1m6 0h1m2 0h3m2 0h1m6 0h1m3 0h1m1 0h1m5 0h1m11 0h1m1 0h2m1 0h2m3 0h1m1 0h1m61 0h1m25 0h1m19 0h1m14 0h1m16 0h1m13 0h1M0 40h1m1 0h1m1 0h1m2 0h3m1 0h1m1 0h4m1 0h4m1 0h2m2 0h2m3 0h1m2 0h1m2 0h2m4 0h1m1 0h1m1 0h1m1 0h4m6 0h2m1 0h1m4 0h1m15 0h2m3 0h2m12 0h2m1 0h1m10 0h1m37 0h1m52 0h1m12 0h1m1 0h2m1 0h1m4 0h1m3 0h1m2 0h2m1 0h2m1 0h2m3 0h2m1 0h3m30 0h1m3 0h1m6 0h1m9 0h2m5 0h1m7 0h1m4 0h1m4 0h1m1 0h1m1 0h1m19 0h1m1 0h2m35 0h1M1 41h1m3 0h3m3 0h2m1 0h2m2 0h1m2 0h4m2 0h1m2 0h3m1 0h3m1 0h1m2 0h7m2 0h2m3 0h1m2 0h1m3 0h1m9 0h1m3 0h1m3 0h1m15 0h1m1 0h1m4 0h1m29 0h1m14 0h1m6 0h1m50 0h1m1 0h1m1 0h1m8 0h1m2 0h3m3 0h1m1 0h1m1 0h1m4 0h2m2 0h2m4 0h2m1 0h1m1 0h1m7 0h1m34 0h1m11 0h2m3 0h1m3 0h1m1 0h1m11 0h2m15 0h1m12 0h1m23 0h1m4 0h1m11 0h1M0 42h1m1 0h5m1 0h2m1 0h2m2 0h1m1 0h2m1 0h2m1 0h3m1 0h2m1 0h2m1 0h1m1 0h9m2 0h1m3 0h4m3 0h1m1 0h2m4 0h1m5 0h3m2 0h1m3 0h1m5 0h1m4 0h1m1 0h1m1 0h2m5 0h2m5 0h1m15 0h1m9 0h1m3 0h1m8 0h1m5 0h1m52 0h2m24 0h1m3 0h1m5 0h1m1 0h1m1 0h3m9 0h1m7 0h1m8 0h1m10 0h1m3 0h1m16 0h1m2 0h1m80 0h1M4 43h2m3 0h1m5 0h6m2 0h10m1 0h2m2 0h4m1 0h3m2 0h2m1 0h1m1 0h1m3 0h1m1 0h1m7 0h1m11 0h5m1 0h1m1 0h1m1 0h2m2 0h1m4 0h1m4 0h1m4 0h1m24 0h1m4 0h1m14 0h1m54 0h1m5 0h1m12 0h1m1 0h1m9 0h1m3 0h1m5 0h1m3 0h2m3 0h2m15 0h1m6 0h1m25 0h1m1 0h1m40 0h1m36 0h1M1 44h4m1 0h3m1 0h1m3 0h5m1 0h2m1 0h1m1 0h1m1 0h1m1 0h2m3 0h1m3 0h6m1 0h2m1 0h2m2 0h2m10 0h1m4 0h3m1 0h1m2 0h2m5 0h1m3 0h1m1 0h1m4 0h1m15 0h1m13 0h1m18 0h1m5 0h1m61 0h1m2 0h1m9 0h1m8 0h1m7 0h1m10 0h2m5 0h2m30 0h1m28 0h1m42 0h2m29 0h1M0 45h2m3 0h1m2 0h2m1 0h2m4 0h4m2 0h6m2 0h4m1 0h3m2 0h4m3 0h3m1 0h1m1 0h2m3 0h1m5 0h2m2 0h2m2 0h2m1 0h2m9 0h1m1 0h2m1 0h1m4 0h1m1 0h1m4 0h1m32 0h1m18 0h1m53 0h2m17 0h1m3 0h1m6 0h2m1 0h1m2 0h5m3 0h1m4 0h1m6 0h1m18 0h1m3 0h1m1 0h1m17 0h1m1 0h1m59 0h1M1 46h1m3 0h1m1 0h1m3 0h1m1 0h1m2 0h2m1 0h1m1 0h3m1 0h2m1 0h4m1 0h7m1 0h1m2 0h3m1 0h2m1 0h3m2 0h2m9 0h1m2 0h1m3 0h1m4 0h1m1 0h1m1 0h1m6 0h1m5 0h1m4 0h1m1 0h1m11 0h1m50 0h1m40 0h1m8 0h1m11 0h2m6 0h1m1 0h1m2 0h1m1 0h2m1 0h1m2 0h1m9 0h1m11 0h1m12 0h1m8 0h1m4 0h1m12 0h1m11 0h1m6 0h1m15 0h1m16 0h1m8 0h1m9 0h1m24 0h1M0 47h2m2 0h3m2 0h1m3 0h4m2 0h1m2 0h7m1 0h1m1 0h4m3 0h5m1 0h2m1 0h1m2 0h1m1 0h1m4 0h1m5 0h1m12 0h1m1 0h1m6 0h2m1 0h1m2 0h1m2 0h1m1 0h1m1 0h2m1 0h1m1 0h1m38 0h1m11 0h1m8 0h1m29 0h1m25 0h1m15 0h1m4 0h1m3 0h1m10 0h1m2 0h2m16 0h1m23 0h1m9 0h2m42 0h2m6 0h1m1 0h1m4 0h1m11 0h1m1 0h1m19 0h1M1 48h7m1 0h2m1 0h6m1 0h3m1 0h5m1 0h1m1 0h1m1 0h2m2 0h5m1 0h5m2 0h1m6 0h3m1 0h1m2 0h1m2 0h2m3 0h1m1 0h1m5 0h1m4 0h2m7 0h1m4 0h2m1 0h3m12 0h1m12 0h1m1 0h1m8 0h1m11 0h1m12 0h1m43 0h1m1 0h1m3 0h1m15 0h2m3 0h1m1 0h1m3 0h1m2 0h7m1 0h1m62 0h1m18 0h1m2 0h1m56 0h1M0 49h1m1 0h6m2 0h6m1 0h11m1 0h3m1 0h2m3 0h15m4 0h2m4 0h1m7 0h4m1 0h1m1 0h1m2 0h1m1 0h1m1 0h1m7 0h1m1 0h1m2 0h4m1 0h1m1 0h1m2 0h1m32 0h1m65 0h1m1 0h1m1 0h2m5 0h1m1 0h1m2 0h1m4 0h2m12 0h1m2 0h4m1 0h1m2 0h1m3 0h1m1 0h1m18 0h1m27 0h1m4 0h1m66 0h2m10 0h1m10 0h1M3 50h3m1 0h2m1 0h2m1 0h5m1 0h1m1 0h4m1 0h5m1 0h5m1 0h1m1 0h1m3 0h3m2 0h1m1 0h1m3 0h1m3 0h1m3 0h1m2 0h1m2 0h1m4 0h1m4 0h1m4 0h1m3 0h1m1 0h1m8 0h1m3 0h2m2 0h1m3 0h1m13 0h1m3 0h1m5 0h2m42 0h1m32 0h1m2 0h1m7 0h1m11 0h2m1 0h1m2 0h1m2 0h4m2 0h1m3 0h1m2 0h1m24 0h1m2 0h1m20 0h1m4 0h1m10 0h1M0 51h3m1 0h8m2 0h2m1 0h4m1 0h3m1 0h1m1 0h1m3 0h1m1 0h2m2 0h2m1 0h3m1 0h1m1 0h4m2 0h1m3 0h2m2 0h1m1 0h1m3 0h1m1 0h1m2 0h1m1 0h1m3 0h1m1 0h1m4 0h1m3 0h1m1 0h1m2 0h3m1 0h1m4 0h1m8 0h2m22 0h1m2 0h1m15 0h1m7 0h1m37 0h1m14 0h1m2 0h1m3 0h2m8 0h1m1 0h2m2 0h2m6 0h1m1 0h2m2 0h1m5 0h1m26 0h1m5 0h1m18 0h1m12 0h2m7 0h1m21 0h1m15 0h1m4 0h1m7 0h1m9 0h1M0 52h1m2 0h1m1 0h3m1 0h2m1 0h13m1 0h3m1 0h1m1 0h1m2 0h2m1 0h1m1 0h1m1 0h1m1 0h1m2 0h1m1 0h5m3 0h1m8 0h1m4 0h1m9 0h1m2 0h1m1 0h1m2 0h4m1 0h2m1 0h1m2 0h1m1 0h1m5 0h1m15 0h1m12 0h1m7 0h1m49 0h1m13 0h1m3 0h1m6 0h1m2 0h2m1 0h1m2 0h1m2 0h2m2 0h1m1 0h2m1 0h1m2 0h5m2 0h1m2 0h1m5 0h2m34 0h1m16 0h1m4 0h1m27 0h1M0 53h3m2 0h2m2 0h5m2 0h1m2 0h12m1 0h5m2 0h2m1 0h4m1 0h3m2 0h3m2 0h1m1 0h1m4 0h4m2 0h1m7 0h3m2 0h2m2 0h1m1 0h2m5 0h2m1 0h1m15 0h1m11 0h1m24 0h2m2 0h1m51 0h1m1 0h1m9 0h1m10 0h1m10 0h1m1 0h1m1 0h2m3 0h1m1 0h1m1 0h1m4 0h3m68 0h1m77 0h1M1 54h2m1 0h2m1 0h4m1 0h2m1 0h2m1 0h2m2 0h1m1 0h1m1 0h1m1 0h5m2 0h10m2 0h4m1 0h4m2 0h1m2 0h1m7 0h1m1 0h2m1 0h2m1 0h1m3 0h2m10 0h1m2 0h2m2 0h2m16 0h1m13 0h1m3 0h1m11 0h1m6 0h1m53 0h1m17 0h1m3 0h1m3 0h2m8 0h1m1 0h1m3 0h1m4 0h1m1 0h1m8 0h1m13 0h1m21 0h1m8 0h1m50 0h1M0 55h5m1 0h5m3 0h4m1 0h4m2 0h3m4 0h2m1 0h1m1 0h2m1 0h1m1 0h4m2 0h1m3 0h3m8 0h1m1 0h1m3 0h1m1 0h5m4 0h5m1 0h6m3 0h4m4 0h3m8 0h2m40 0h1m14 0h1m10 0h1m26 0h1m5 0h1m1 0h4m4 0h1m1 0h1m2 0h2m8 0h1m3 0h1m1 0h1m1 0h1m2 0h2m2 0h3m17 0h1m6 0h1m6 0h1m22 0h1m8 0h1m11 0h1m29 0h1m4 0h1m5 0h1m14 0h1m25 0h1M2 56h1m1 0h1m2 0h2m2 0h1m1 0h3m2 0h1m2 0h2m1 0h8m1 0h7m1 0h4m1 0h1m1 0h2m1 0h1m2 0h1m1 0h1m1 0h1m1 0h2m2 0h4m3 0h1m3 0h1m1 0h2m2 0h1m2 0h2m2 0h1m3 0h2m3 0h1m3 0h1m4 0h1m48 0h1m22 0h1m32 0h5m12 0h2m1 0h2m7 0h1m2 0h1m2 0h1m1 0h1m7 0h1m1 0h1m1 0h1m3 0h1m12 0h1m45 0h1m13 0h1m51 0h1m11 0h1M1 57h2m2 0h7m1 0h3m3 0h4m1 0h1m1 0h2m5 0h2m2 0h2m1 0h1m3 0h1m1 0h3m2 0h3m1 0h1m1 0h2m2 0h1m1 0h5m1 0h1m1 0h8m1 0h2m3 0h1m2 0h1m8 0h3m2 0h1m1 0h1m23 0h1m6 0h1m1 0h1m2 0h1m22 0h1m14 0h1m32 0h3m1 0h1m11 0h1m2 0h1m2 0h1m9 0h1m2 0h1m2 0h1m1 0h3m3 0h1m31 0h1m5 0h1m16 0h1m5 0h2m1 0h2m34 0h1m16 0h1m31 0h1M0 58h2m1 0h3m1 0h2m1 0h3m1 0h1m1 0h2m2 0h1m1 0h4m2 0h1m1 0h1m2 0h1m1 0h1m4 0h2m3 0h1m1 0h3m2 0h1m8 0h2m1 0h8m1 0h1m5 0h2m7 0h1m2 0h2m1 0h1m5 0h1m2 0h2m7 0h2m4 0h2m3 0h1m11 0h1m14 0h2m2 0h1m21 0h1m31 0h1m5 0h3m12 0h1m5 0h2m1 0h1m2 0h1m2 0h1m6 0h1m2 0h2m2 0h2m1 0h1m10 0h1m14 0h1m13 0h1m20 0h1m12 0h1m43 0h1M4 59h1m1 0h5m1 0h5m3 0h4m3 0h1m4 0h5m1 0h2m3 0h3m1 0h2m3 0h2m1 0h3m1 0h1m1 0h4m1 0h2m1 0h12m1 0h2m6 0h2m2 0h5m4 0h2m2 0h1m1 0h1m1 0h1m9 0h2m7 0h2m2 0h1m4 0h1m2 0h2m7 0h1m4 0h1m33 0h1m17 0h1m3 0h2m1 0h1m13 0h1m1 0h1m7 0h1m6 0h3m3 0h2m1 0h1m2 0h3m18 0h1m1 0h1m3 0h1m4 0h1m21 0h1m5 0h1m2 0h1m23 0h1m10 0h1m6 0h2M0 60h1m2 0h1m2 0h1m2 0h1m2 0h2m1 0h4m4 0h1m2 0h1m6 0h3m1 0h1m10 0h2m3 0h8m5 0h3m1 0h1m4 0h2m3 0h2m5 0h3m2 0h12m2 0h1m3 0h1m12 0h1m15 0h1m13 0h1m1 0h1m52 0h4m7 0h1m15 0h1m4 0h1m1 0h1m2 0h1m3 0h1m1 0h1m2 0h1m3 0h1m18 0h1m7 0h1m1 0h1m3 0h2m13 0h1m32 0h2m18 0h2m28 0h1M1 61h1m3 0h1m3 0h1m4 0h3m5 0h2m1 0h3m3 0h1m2 0h2m5 0h2m5 0h1m1 0h1m1 0h2m2 0h1m1 0h1m1 0h2m2 0h1m1 0h4m3 0h1m2 0h1m1 0h3m2 0h2m1 0h1m4 0h1m1 0h11m1 0h1m6 0h2m2 0h1m1 0h1m4 0h1m1 0h1m12 0h1m4 0h2m1 0h1m1 0h1m1 0h1m2 0h1m2 0h1m12 0h1m30 0h1m7 0h1m1 0h1m1 0h2m1 0h1m7 0h2m1 0h3m2 0h1m7 0h2m5 0h3m1 0h1m1 0h3m2 0h3m32 0h1m4 0h2m11 0h3m2 0h1m2 0h1m19 0h1m18 0h2m9 0h1m40 0h1m3 0h1M5 62h1m7 0h1m1 0h2m4 0h1m4 0h1m2 0h1m5 0h2m1 0h4m1 0h1m1 0h1m6 0h2m1 0h3m1 0h1m1 0h2m2 0h1m1 0h1m1 0h3m1 0h3m1 0h2m2 0h4m1 0h4m1 0h5m1 0h1m1 0h4m1 0h3m1 0h1m2 0h2m1 0h1m1 0h1m4 0h5m2 0h1m2 0h2m1 0h1m7 0h1m1 0h1m3 0h1m5 0h1m2 0h4m1 0h1m2 0h1m2 0h4m1 0h3m2 0h7m1 0h5m1 0h1m2 0h6m1 0h1m1 0h1m1 0h1m3 0h3m3 0h2m3 0h2m1 0h1m1 0h2m2 0h8m1 0h3m3 0h2m2 0h1m1 0h3m3 0h4m1 0h1m3 0h1m3 0h1m1 0h1m2 0h2m1 0h3m4 0h3m4 0h3m3 0h1m1 0h2m1 0h3m1 0h1m2 0h4m2 0h1m1 0h1m1 0h1m4 0h1m3 0h1m1 0h3m4 0h1m2 0h2m4 0h2m2 0h1m3 0h1m1 0h3m1 0h1m1 0h2m14 0h1m10 0h1m5 0h1m10 0h1m1 0h1m4 0h1M3 63h1m4 0h1m1 0h1m1 0h1m4 0h1m2 0h1m1 0h1m2 0h1m1 0h1m3 0h1m2 0h2m1 0h2m1 0h1m1 0h4m6 0h3m1 0h1m1 0h8m2 0h2m1 0h3m1 0h1m4 0h7m2 0h5m1 0h1m3 0h4m1 0h3m1 0h1m1 0h1m2 0h2m1 0h3m1 0h3m8 0h2m7 0h1m8 0h1m7 0h1m1 0h2m1 0h2m1 0h5m2 0h2m1 0h13m1 0h1m1 0h1m1 0h2m1 0h3m1 0h3m1 0h1m5 0h1m2 0h4m2 0h9m1 0h1m1 0h3m3 0h2m2 0h4m1 0h1m5 0h2m1 0h3m4 0h2m1 0h2m2 0h1m5 0h1m2 0h2m2 0h2m2 0h1m14 0h1m2 0h1m1 0h1m1 0h1m1 0h4m1 0h1m1 0h2m5 0h1m1 0h1m2 0h1m1 0h2m2 0h2m1 0h1m4 0h1m3 0h1m2 0h4m1 0h2m5 0h4m4 0h1m7 0h2m3 0h1m1 0h1m5 0h1m1 0h1m6 0h2m1 0h1m4 0h1m2 0h1M0 64h2m1 0h1m1 0h1m1 0h1m5 0h1m1 0h3m1 0h3m4 0h5m1 0h4m3 0h1m1 0h3m1 0h2m5 0h8m1 0h3m1 0h7m2 0h2m1 0h5m5 0h9m1 0h3m2 0h5m1 0h4m1 0h1m3 0h1m17 0h1m10 0h1m4 0h1m5 0h2m2 0h2m3 0h1m1 0h1m1 0h2m1 0h8m2 0h1m1 0h2m1 0h1m1 0h3m2 0h7m1 0h4m1 0h5m1 0h9m1 0h1m2 0h2m2 0h3m2 0h1m3 0h1m1 0h5m3 0h3m1 0h2m1 0h4m1 0h1m1 0h2m5 0h1m1 0h1m1 0h2m3 0h1m11 0h1m1 0h1m3 0h1m1 0h1m4 0h1m2 0h1m1 0h2m2 0h1m1 0h2m2 0h3m2 0h3m2 0h1m2 0h1m1 0h2m1 0h1m1 0h2m1 0h2m6 0h1m4 0h2m1 0h1m4 0h2m7 0h1m4 0h1m14 0h1m5 0h1M4 65h4m2 0h4m1 0h2m3 0h3m1 0h2m4 0h1m1 0h2m1 0h4m2 0h3m2 0h2m1 0h1m3 0h4m1 0h2m2 0h1m2 0h2m1 0h3m1 0h7m1 0h4m1 0h1m1 0h1m3 0h3m2 0h1m2 0h2m1 0h1m1 0h1m2 0h1m1 0h1m4 0h1m1 0h1m42 0h1m1 0h6m1 0h7m2 0h4m1 0h2m2 0h2m1 0h1m1 0h2m1 0h9m1 0h3m1 0h1m1 0h5m1 0h7m2 0h1m4 0h2m1 0h1m1 0h1m2 0h2m1 0h3m1 0h1m1 0h4m1 0h3m1 0h3m4 0h2m2 0h1m1 0h2m13 0h1m1 0h1m10 0h1m3 0h1m1 0h1m4 0h1m2 0h1m1 0h2m4 0h2m2 0h1m3 0h1m1 0h1m2 0h2m2 0h1m3 0h1m7 0h6m4 0h2m1 0h3m5 0h2m2 0h1m3 0h1m11 0h1m3 0h1m1 0h1m1 0h1m1 0h1m4 0h1m5 0h1M1 66h4m1 0h1m1 0h1m1 0h4m1 0h7m2 0h1m2 0h1m1 0h2m3 0h2m1 0h1m1 0h3m3 0h1m2 0h3m2 0h3m4 0h1m3 0h3m1 0h3m3 0h1m4 0h2m2 0h1m2 0h2m1 0h5m1 0h1m3 0h5m1 0h1m5 0h1m1 0h1m3 0h1m7 0h1m5 0h1m7 0h1m7 0h1m7 0h2m5 0h1m1 0h4m1 0h1m1 0h2m1 0h1m1 0h3m1 0h5m1 0h2m2 0h2m2 0h2m3 0h1m1 0h3m1 0h6m1 0h1m4 0h1m3 0h3m2 0h7m1 0h4m1 0h1m1 0h1m1 0h2m4 0h3m1 0h1m3 0h3m1 0h1m1 0h1m1 0h1m2 0h1m4 0h3m2 0h1m6 0h1m1 0h2m3 0h1m5 0h1m10 0h1m1 0h1m1 0h1m9 0h1m1 0h1m3 0h1m8 0h2m4 0h4m6 0h1m1 0h1m1 0h2m4 0h1m15 0h1m3 0h1m4 0h1M0 67h1m1 0h1m1 0h1m1 0h2m4 0h1m1 0h1m1 0h3m1 0h1m1 0h2m1 0h4m1 0h5m2 0h3m1 0h2m3 0h1m2 0h3m1 0h4m3 0h10m2 0h1m1 0h1m2 0h2m1 0h2m1 0h1m1 0h7m3 0h1m2 0h9m3 0h2m1 0h2m3 0h2m2 0h1m4 0h1m2 0h2m24 0h3m1 0h1m2 0h3m1 0h1m1 0h5m2 0h1m3 0h1m2 0h4m1 0h3m2 0h1m1 0h1m1 0h1m2 0h1m1 0h1m1 0h3m3 0h2m3 0h3m4 0h4m2 0h1m3 0h2m2 0h1m1 0h2m1 0h1m4 0h2m3 0h1m3 0h1m1 0h4m13 0h1m6 0h1m1 0h3m4 0h1m5 0h1m10 0h1m1 0h1m1 0h1m4 0h2m2 0h1m2 0h1m2 0h1m7 0h2m5 0h1m10 0h1m1 0h2m2 0h3m2 0h1m18 0h1m2 0h1m17 0h1M0 68h1m1 0h2m1 0h1m5 0h1m2 0h2m2 0h1m2 0h1m1 0h3m1 0h2m1 0h2m1 0h10m1 0h2m1 0h2m1 0h1m2 0h4m1 0h1m4 0h1m1 0h4m1 0h1m1 0h1m2 0h3m1 0h3m1 0h1m3 0h3m1 0h3m1 0h5m1 0h2m1 0h2m2 0h1m1 0h1m4 0h1m1 0h1m11 0h1m26 0h1m3 0h3m4 0h1m2 0h3m1 0h2m2 0h1m1 0h1m1 0h1m2 0h5m1 0h1m2 0h4m1 0h1m1 0h2m5 0h2m3 0h2m1 0h3m6 0h1m4 0h1m1 0h1m1 0h1m1 0h1m4 0h2m2 0h1m1 0h4m1 0h8m1 0h1m1 0h1m12 0h2m5 0h1m1 0h1m5 0h1m3 0h1m1 0h1m1 0h1m4 0h1m1 0h1m3 0h3m1 0h3m1 0h1m8 0h1m2 0h1m1 0h1m1 0h1m6 0h1m3 0h3m6 0h1m2 0h1m22 0h1m1 0h3m3 0h1m8 0h1m2 0h1m4 0h1m1 0h1M0 69h6m1 0h5m1 0h2m1 0h2m2 0h1m1 0h1m2 0h1m1 0h3m2 0h1m2 0h3m1 0h1m1 0h1m1 0h8m1 0h3m3 0h2m2 0h2m1 0h3m5 0h3m2 0h1m1 0h4m2 0h2m2 0h2m2 0h3m1 0h4m2 0h1m1 0h1m11 0h1m1 0h1m3 0h2m1 0h1m21 0h1m6 0h6m2 0h2m1 0h2m2 0h8m1 0h10m2 0h3m2 0h2m1 0h10m1 0h1m2 0h2m3 0h2m1 0h2m7 0h3m1 0h1m3 0h5m1 0h1m1 0h2m2 0h2m5 0h2m6 0h1m8 0h1m1 0h1m4 0h1m1 0h1m3 0h1m10 0h1m1 0h1m1 0h1m3 0h1m4 0h1m1 0h1m1 0h1m4 0h2m1 0h1m5 0h2m2 0h1m1 0h1m4 0h1m1 0h2m1 0h4m3 0h1m1 0h1m6 0h2m24 0h2m11 0h1m2 0h1m3 0h1M0 70h6m1 0h3m1 0h1m1 0h1m1 0h1m2 0h6m3 0h1m1 0h1m1 0h5m1 0h1m2 0h2m1 0h2m3 0h3m2 0h2m1 0h2m2 0h6m2 0h3m3 0h1m1 0h2m5 0h1m1 0h1m1 0h2m2 0h2m4 0h1m2 0h1m1 0h1m1 0h1m3 0h1m4 0h1m3 0h1m14 0h1m23 0h2m1 0h1m2 0h5m1 0h2m1 0h1m3 0h2m2 0h3m1 0h3m2 0h4m2 0h2m2 0h1m3 0h2m2 0h5m3 0h1m8 0h1m4 0h1m3 0h1m2 0h3m2 0h3m3 0h1m5 0h1m1 0h1m1 0h1m1 0h3m2 0h1m1 0h1m2 0h1m9 0h1m6 0h1m4 0h2m4 0h1m3 0h1m1 0h3m3 0h2m1 0h2m1 0h1m1 0h1m4 0h1m8 0h1m4 0h1m2 0h1m7 0h1m2 0h1m1 0h1m1 0h1m1 0h1m7 0h2m22 0h1m1 0h1m5 0h1m2 0h3m14 0h1M0 71h1m1 0h1m1 0h4m2 0h2m1 0h2m1 0h3m1 0h6m1 0h5m2 0h1m3 0h1m4 0h6m3 0h4m1 0h2m2 0h3m1 0h1m2 0h1m1 0h4m2 0h1m3 0h1m2 0h1m1 0h2m2 0h1m2 0h2m5 0h1m1 0h3m1 0h2m3 0h1m17 0h2m23 0h1m4 0h1m3 0h3m5 0h2m1 0h1m1 0h2m2 0h1m1 0h5m1 0h2m2 0h3m3 0h1m3 0h4m1 0h1m3 0h1m1 0h4m3 0h1m1 0h1m1 0h1m2 0h1m1 0h1m3 0h1m1 0h1m2 0h2m1 0h5m3 0h1m1 0h3m5 0h4m2 0h1m3 0h1m2 0h1m5 0h1m7 0h3m11 0h1m2 0h1m1 0h1m3 0h1m3 0h1m2 0h1m2 0h1m3 0h2m1 0h2m3 0h1m3 0h1m5 0h1m1 0h1m1 0h2m1 0h1m2 0h1m3 0h1m1 0h1m37 0h1m5 0h1m1 0h1M0 72h3m3 0h8m1 0h2m1 0h4m1 0h11m2 0h5m1 0h3m1 0h1m2 0h1m3 0h6m1 0h1m1 0h1m2 0h1m1 0h2m1 0h1m3 0h1m3 0h1m2 0h6m2 0h1m1 0h5m1 0h3m3 0h1m1 0h1m1 0h1m1 0h1m4 0h2m38 0h1m1 0h2m4 0h1m1 0h1m1 0h1m1 0h1m2 0h1m3 0h5m1 0h1m2 0h1m3 0h3m1 0h1m1 0h3m3 0h3m2 0h2m2 0h3m5 0h1m2 0h3m4 0h4m4 0h1m2 0h1m3 0h1m1 0h1m3 0h1m1 0h3m2 0h2m1 0h2m3 0h1m7 0h1m3 0h1m3 0h1m3 0h1m5 0h1m9 0h1m2 0h1m1 0h1m7 0h2m1 0h1m11 0h1m3 0h2m11 0h1m5 0h1m1 0h1M0 73h5m2 0h4m1 0h1m1 0h1m1 0h6m1 0h3m2 0h2m4 0h1m1 0h2m1 0h1m1 0h3m1 0h1m1 0h2m3 0h1m1 0h1m2 0h1m3 0h1m1 0h1m1 0h2m1 0h1m1 0h4m3 0h1m3 0h4m1 0h3m1 0h1m2 0h2m1 0h5m4 0h2m8 0h1m1 0h1m1 0h1m14 0h1m2 0h1m2 0h1m14 0h2m2 0h2m1 0h2m3 0h1m1 0h1m1 0h1m1 0h1m1 0h2m1 0h2m1 0h1m1 0h2m1 0h1m1 0h1m2 0h2m5 0h3m1 0h1m1 0h3m1 0h1m2 0h1m3 0h1m1 0h1m2 0h1m1 0h2m1 0h1m8 0h1m2 0h2m4 0h4m1 0h1m1 0h2m1 0h1m2 0h1m3 0h3m2 0h1m20 0h1m1 0h1m2 0h1m2 0h1m1 0h1m4 0h1m2 0h1m16 0h1m1 0h3m1 0h1m3 0h2m6 0h1m3 0h1m6 0h1m9 0h5m17 0h1m1 0h1m3 0h1m5 0h1m3 0h1m1 0h1m2 0h1m5 0h1M0 74h1m1 0h1m3 0h4m1 0h1m1 0h1m1 0h2m1 0h3m2 0h3m1 0h2m3 0h6m1 0h3m1 0h2m3 0h9m1 0h1m2 0h2m1 0h5m1 0h1m1 0h6m1 0h1m1 0h9m1 0h1m3 0h1m1 0h1m2 0h2m1 0h2m6 0h1m2 0h1m2 0h1m38 0h1m3 0h6m1 0h1m3 0h3m3 0h1m2 0h1m1 0h3m3 0h1m2 0h1m1 0h2m1 0h4m2 0h8m1 0h3m5 0h3m1 0h2m3 0h1m2 0h10m1 0h5m1 0h6m3 0h1m1 0h4m1 0h1m6 0h1m9 0h1m8 0h1m2 0h1m9 0h1m4 0h1m2 0h2m8 0h1m6 0h2m1 0h1m13 0h2m3 0h1m7 0h1m1 0h1m13 0h1m4 0h1m4 0h1M1 75h2m1 0h1m3 0h4m1 0h3m1 0h4m1 0h5m1 0h1m3 0h2m1 0h3m1 0h2m1 0h1m1 0h1m1 0h1m1 0h1m1 0h1m1 0h2m2 0h1m1 0h1m7 0h2m3 0h1m1 0h1m2 0h5m1 0h2m1 0h3m4 0h3m1 0h1m3 0h1m1 0h3m2 0h2m1 0h1m17 0h1m27 0h2m1 0h2m1 0h2m1 0h1m1 0h2m3 0h1m1 0h1m3 0h2m1 0h1m1 0h1m1 0h1m3 0h1m1 0h2m1 0h1m2 0h1m1 0h1m3 0h6m2 0h5m2 0h1m2 0h1m6 0h1m5 0h1m1 0h3m1 0h1m1 0h1m1 0h1m1 0h1m3 0h2m1 0h1m2 0h3m15 0h1m1 0h1m5 0h1m6 0h2m2 0h1m17 0h1m1 0h1m2 0h1m17 0h1m1 0h2m3 0h1m13 0h1m4 0h1m3 0h1m2 0h1m3 0h1m20 0h1m5 0h1m8 0h1M0 76h8m3 0h2m1 0h1m1 0h5m2 0h2m1 0h5m1 0h1m1 0h1m1 0h2m2 0h2m1 0h5m1 0h1m1 0h2m1 0h1m2 0h2m2 0h1m1 0h1m2 0h2m4 0h1m5 0h1m1 0h1m1 0h2m1 0h2m1 0h1m3 0h1m3 0h1m12 0h1m2 0h1m2 0h2m6 0h1m5 0h1m6 0h1m1 0h1m17 0h1m1 0h1m3 0h3m1 0h2m2 0h2m4 0h1m2 0h4m1 0h1m2 0h2m1 0h1m1 0h4m1 0h1m2 0h2m1 0h2m2 0h2m1 0h1m1 0h2m1 0h2m3 0h1m3 0h1m2 0h2m1 0h1m3 0h1m2 0h2m1 0h1m1 0h1m1 0h1m4 0h1m3 0h1m3 0h1m1 0h1m2 0h1m6 0h2m3 0h3m4 0h2m10 0h1m3 0h3m6 0h1m9 0h2m9 0h1m2 0h3m6 0h1m2 0h1m6 0h1m5 0h4m2 0h1m4 0h1m34 0h1M1 77h3m1 0h2m1 0h4m1 0h4m3 0h6m1 0h1m2 0h5m1 0h3m2 0h2m2 0h2m2 0h2m1 0h1m6 0h2m2 0h1m1 0h1m1 0h3m2 0h2m1 0h1m3 0h1m1 0h2m1 0h6m1 0h2m1 0h1m4 0h1m1 0h2m2 0h2m1 0h3m3 0h1m1 0h2m4 0h1m17 0h1m15 0h2m2 0h4m2 0h2m3 0h1m2 0h2m2 0h1m2 0h1m1 0h1m2 0h6m1 0h1m1 0h1m3 0h1m5 0h2m1 0h1m1 0h2m1 0h2m1 0h4m1 0h2m2 0h2m1 0h1m7 0h1m1 0h1m2 0h1m1 0h1m6 0h1m2 0h1m5 0h3m7 0h2m3 0h2m4 0h1m10 0h2m19 0h1m3 0h1m4 0h1m10 0h1m17 0h2m4 0h1m8 0h1m9 0h1m26 0h3m2 0h1M0 78h2m3 0h4m1 0h2m1 0h2m1 0h1m2 0h1m1 0h2m1 0h7m1 0h2m1 0h1m1 0h5m1 0h3m2 0h1m3 0h2m1 0h2m2 0h1m1 0h1m1 0h5m3 0h1m1 0h5m1 0h1m1 0h1m1 0h1m3 0h3m2 0h4m1 0h1m3 0h4m2 0h1m15 0h2m3 0h1m2 0h1m24 0h1m6 0h1m3 0h1m3 0h3m1 0h1m1 0h1m1 0h2m2 0h1m4 0h2m1 0h1m2 0h3m1 0h2m3 0h1m2 0h3m2 0h1m2 0h1m1 0h1m1 0h1m4 0h1m4 0h1m2 0h1m1 0h1m2 0h1m1 0h1m2 0h4m1 0h7m1 0h2m1 0h1m2 0h1m3 0h1m23 0h1m2 0h1m3 0h1m5 0h1m4 0h1m3 0h1m10 0h1m10 0h1m1 0h1m6 0h1m1 0h1m2 0h1m12 0h1m42 0h1m7 0h1M0 79h2m1 0h2m1 0h1m2 0h1m1 0h1m1 0h1m1 0h3m1 0h1m1 0h1m1 0h2m1 0h3m1 0h2m1 0h6m4 0h2m1 0h7m1 0h1m1 0h2m2 0h1m1 0h2m6 0h6m6 0h1m3 0h1m1 0h2m1 0h1m1 0h1m2 0h1m1 0h2m1 0h4m2 0h1m8 0h1m6 0h1m1 0h1m4 0h1m25 0h1m4 0h1m1 0h1m2 0h2m6 0h2m1 0h3m3 0h3m1 0h1m2 0h4m5 0h3m1 0h1m2 0h3m1 0h2m1 0h1m2 0h1m5 0h1m3 0h1m1 0h3m1 0h1m1 0h1m2 0h3m4 0h2m4 0h1m7 0h2m10 0h1m11 0h1m3 0h1m10 0h2m13 0h1m6 0h1m17 0h1m1 0h1m3 0h3m2 0h2m6 0h1m1 0h3m1 0h2m7 0h1m15 0h1m7 0h1m3 0h1M0 80h2m1 0h1m2 0h1m1 0h1m1 0h1m1 0h4m1 0h1m1 0h1m1 0h1m4 0h3m1 0h2m1 0h4m1 0h4m1 0h2m1 0h1m1 0h1m2 0h1m1 0h1m1 0h4m1 0h1m1 0h1m1 0h2m1 0h1m1 0h1m6 0h4m2 0h1m2 0h3m4 0h2m2 0h2m4 0h3m4 0h1m21 0h1m25 0h1m4 0h3m4 0h1m1 0h1m1 0h2m2 0h2m1 0h1m2 0h2m2 0h9m3 0h1m2 0h2m3 0h2m2 0h2m2 0h1m5 0h1m5 0h1m2 0h4m2 0h2m2 0h1m1 0h2m1 0h2m1 0h2m5 0h1m3 0h1m8 0h2m13 0h1m2 0h1m4 0h1m1 0h1m13 0h1m11 0h1m5 0h1m6 0h1m16 0h1m13 0h2m10 0h1m13 0h1m21 0h2M0 81h1m1 0h1m1 0h1m2 0h1m2 0h2m1 0h3m2 0h4m1 0h2m2 0h9m1 0h4m1 0h1m1 0h1m1 0h6m2 0h2m2 0h2m4 0h1m1 0h1m1 0h2m5 0h1m2 0h2m3 0h1m2 0h2m2 0h1m1 0h3m2 0h1m2 0h1m1 0h2m15 0h1m25 0h1m9 0h1m2 0h2m1 0h1m2 0h1m1 0h3m4 0h1m1 0h2m1 0h1m2 0h4m2 0h1m2 0h1m2 0h1m2 0h1m2 0h1m1 0h2m1 0h1m1 0h1m2 0h2m3 0h2m1 0h3m2 0h1m3 0h1m2 0h1m1 0h2m7 0h2m7 0h1m8 0h1m1 0h1m2 0h1m5 0h1m12 0h1m10 0h1m2 0h1m18 0h1m12 0h1m6 0h1m2 0h1m2 0h1m2 0h1m3 0h1m7 0h1m11 0h1m5 0h1m25 0h1m1 0h1m5 0h1M0 82h2m2 0h1m1 0h3m1 0h1m2 0h5m1 0h1m1 0h4m1 0h1m2 0h4m1 0h4m1 0h2m1 0h1m2 0h1m2 0h1m2 0h1m4 0h1m7 0h2m1 0h1m3 0h2m1 0h1m1 0h1m4 0h2m4 0h2m2 0h2m1 0h2m1 0h2m1 0h1m2 0h1m4 0h2m8 0h1m2 0h1m34 0h1m8 0h1m1 0h1m1 0h2m2 0h1m1 0h5m4 0h2m1 0h1m3 0h1m1 0h2m2 0h1m1 0h2m2 0h3m3 0h1m1 0h1m1 0h1m1 0h1m2 0h1m1 0h1m1 0h1m2 0h2m1 0h1m3 0h1m4 0h2m3 0h1m1 0h4m4 0h2m4 0h2m8 0h1m1 0h1m9 0h1m2 0h1m1 0h1m2 0h1m1 0h1m4 0h1m8 0h1m20 0h1m13 0h1m2 0h1m1 0h1m7 0h1m22 0h1m8 0h1m12 0h1M0 83h4m3 0h2m1 0h1m2 0h2m3 0h1m1 0h1m1 0h6m4 0h1m2 0h2m2 0h6m2 0h8m1 0h5m3 0h3m2 0h1m1 0h1m1 0h3m3 0h2m1 0h1m1 0h2m4 0h1m1 0h1m2 0h3m4 0h3m1 0h1m2 0h1m3 0h1m3 0h1m2 0h1m5 0h1m30 0h1m1 0h1m7 0h1m2 0h2m1 0h2m4 0h1m3 0h1m7 0h2m2 0h1m2 0h2m2 0h1m1 0h1m1 0h2m1 0h1m4 0h1m2 0h1m9 0h4m1 0h1m1 0h3m8 0h2m1 0h1m1 0h1m7 0h4m1 0h2m5 0h1m2 0h1m5 0h1m1 0h1m1 0h1m6 0h1m5 0h1m14 0h1m1 0h1m1 0h2m8 0h1m3 0h1m9 0h1m3 0h2m14 0h1m1 0h1m1 0h1m9 0h1m2 0h1m6 0h1m18 0h2M0 84h1m3 0h1m1 0h2m1 0h4m1 0h8m1 0h3m1 0h1m1 0h1m2 0h1m2 0h3m1 0h1m6 0h5m1 0h2m3 0h2m1 0h4m2 0h1m1 0h1m1 0h1m1 0h4m1 0h3m2 0h1m1 0h1m2 0h1m2 0h1m1 0h2m2 0h1m3 0h1m1 0h2m1 0h1m1 0h1m3 0h2m9 0h1m6 0h1m26 0h2m5 0h3m2 0h2m1 0h1m4 0h1m1 0h1m1 0h1m2 0h1m6 0h1m1 0h1m3 0h3m1 0h1m4 0h4m1 0h1m1 0h1m3 0h1m1 0h2m1 0h1m1 0h1m1 0h2m2 0h2m6 0h1m9 0h2m1 0h1m8 0h3m3 0h1m10 0h1m4 0h1m13 0h1m15 0h2m1 0h1m1 0h1m6 0h1m16 0h1m7 0h1m12 0h1m1 0h1m23 0h2m7 0h1m8 0h2M0 85h2m1 0h2m1 0h1m1 0h1m1 0h4m1 0h1m2 0h2m2 0h3m1 0h2m1 0h2m1 0h1m1 0h1m3 0h2m4 0h3m1 0h4m1 0h1m1 0h1m1 0h1m2 0h1m1 0h2m1 0h1m1 0h2m4 0h1m2 0h1m3 0h1m2 0h1m4 0h5m4 0h1m5 0h3m1 0h1m7 0h1m3 0h1m11 0h1m10 0h1m13 0h1m1 0h2m1 0h1m1 0h1m1 0h1m2 0h2m2 0h3m3 0h1m6 0h1m3 0h1m1 0h1m1 0h1m1 0h1m1 0h2m1 0h1m1 0h1m1 0h1m2 0h4m1 0h1m4 0h1m1 0h1m3 0h1m3 0h2m5 0h1m3 0h1m5 0h1m3 0h2m2 0h1m5 0h2m9 0h1m4 0h1m3 0h1m2 0h2m4 0h1m7 0h1m3 0h1m3 0h1m10 0h1m2 0h1m4 0h1m8 0h1m7 0h1m2 0h1m20 0h1m51 0h1M2 86h9m1 0h17m2 0h5m1 0h1m1 0h14m4 0h2m1 0h1m1 0h2m3 0h2m2 0h1m1 0h2m1 0h2m4 0h1m1 0h1m8 0h1m4 0h7m6 0h1m4 0h2m6 0h1m7 0h1m23 0h3m3 0h1m4 0h5m5 0h1m1 0h1m1 0h1m2 0h1m2 0h2m3 0h1m1 0h2m1 0h2m1 0h2m5 0h3m6 0h1m5 0h1m2 0h2m2 0h1m3 0h3m21 0h2m10 0h1m10 0h1m3 0h1m4 0h1m4 0h1m5 0h1m1 0h1m8 0h4m1 0h1m5 0h1m18 0h1m1 0h1m4 0h1m4 0h1m4 0h2m20 0h1M0 87h1m4 0h2m1 0h1m1 0h1m2 0h10m1 0h1m3 0h1m1 0h1m1 0h2m1 0h1m2 0h2m1 0h1m1 0h5m2 0h1m1 0h1m3 0h2m1 0h1m1 0h1m7 0h1m5 0h2m1 0h1m2 0h5m4 0h1m4 0h2m1 0h1m3 0h3m4 0h2m3 0h1m2 0h1m2 0h1m12 0h1m21 0h3m4 0h3m2 0h1m1 0h3m1 0h2m1 0h1m2 0h2m3 0h1m2 0h3m1 0h1m7 0h2m1 0h1m1 0h4m3 0h1m2 0h2m4 0h3m1 0h5m1 0h1m3 0h3m3 0h1m1 0h2m1 0h1m1 0h1m8 0h2m1 0h2m28 0h1m5 0h1m3 0h1m2 0h2m3 0h1m14 0h1m14 0h1m1 0h2m2 0h1m3 0h1m5 0h1m3 0h2m3 0h2m7 0h1M0 88h1m2 0h3m1 0h3m1 0h2m2 0h3m2 0h2m2 0h1m5 0h2m2 0h5m2 0h2m2 0h2m1 0h2m2 0h1m1 0h1m2 0h6m2 0h1m1 0h1m1 0h2m1 0h1m2 0h1m1 0h2m3 0h1m1 0h1m5 0h2m2 0h1m9 0h1m1 0h2m4 0h1m3 0h1m11 0h1m27 0h2m3 0h2m1 0h5m1 0h3m7 0h5m3 0h2m5 0h2m2 0h1m1 0h1m4 0h4m3 0h3m4 0h1m1 0h1m6 0h1m3 0h1m2 0h1m4 0h1m1 0h2m2 0h1m2 0h2m3 0h2m2 0h1m2 0h1m5 0h1m1 0h1m12 0h1m7 0h1m1 0h1m3 0h1m15 0h1m5 0h1m13 0h1m4 0h1m3 0h1m17 0h1m30 0h1m4 0h1M1 89h1m1 0h2m5 0h6m1 0h1m4 0h1m1 0h3m3 0h3m2 0h7m1 0h1m3 0h6m1 0h2m2 0h2m7 0h2m1 0h3m2 0h1m4 0h1m3 0h1m1 0h4m2 0h2m1 0h3m1 0h1m2 0h2m1 0h1m4 0h1m1 0h1m17 0h2m4 0h1m17 0h1m1 0h2m4 0h2m5 0h1m2 0h3m5 0h1m1 0h1m3 0h1m2 0h3m2 0h2m3 0h3m1 0h1m2 0h1m1 0h1m1 0h1m1 0h1m2 0h1m1 0h1m1 0h1m1 0h1m8 0h1m2 0h1m3 0h1m1 0h2m2 0h1m1 0h1m1 0h1m3 0h1m1 0h1m4 0h1m9 0h1m4 0h1m4 0h1m11 0h1m8 0h1m5 0h1m6 0h3m4 0h1m7 0h1m23 0h2m4 0h1m30 0h1M0 90h2m1 0h1m2 0h1m2 0h1m1 0h4m1 0h2m3 0h2m2 0h1m2 0h1m1 0h2m1 0h2m1 0h3m1 0h2m1 0h1m1 0h3m1 0h5m2 0h1m1 0h1m8 0h4m1 0h2m1 0h2m1 0h1m1 0h1m1 0h1m3 0h2m7 0h1m1 0h1m1 0h1m3 0h1m2 0h3m9 0h1m37 0h3m6 0h1m2 0h2m4 0h2m1 0h1m2 0h1m2 0h2m3 0h3m3 0h1m1 0h4m2 0h1m3 0h3m3 0h1m3 0h3m5 0h3m1 0h2m5 0h2m9 0h1m1 0h1m1 0h1m2 0h1m2 0h2m3 0h1m3 0h1m20 0h1m1 0h1m3 0h1m7 0h1m1 0h1m8 0h1m2 0h1m2 0h1m3 0h1m8 0h2m6 0h1m1 0h1m17 0h1m4 0h1m23 0h1M1 91h4m2 0h2m1 0h3m1 0h2m1 0h1m1 0h2m1 0h1m1 0h1m1 0h4m2 0h3m4 0h6m1 0h2m4 0h2m2 0h2m2 0h1m1 0h3m1 0h2m4 0h1m1 0h1m3 0h2m2 0h1m3 0h1m4 0h1m1 0h1m1 0h2m1 0h1m3 0h1m1 0h3m2 0h1m35 0h1m10 0h1m1 0h3m2 0h1m2 0h1m1 0h3m1 0h1m1 0h1m1 0h2m2 0h1m1 0h3m4 0h1m1 0h2m2 0h2m1 0h2m1 0h1m1 0h4m1 0h1m1 0h3m6 0h1m6 0h4m1 0h1m2 0h2m1 0h2m1 0h1m3 0h1m1 0h2m1 0h1m2 0h1m5 0h2m25 0h2m23 0h3m2 0h1m8 0h1m1 0h2m1 0h3m9 0h1m1 0h2m3 0h1m49 0h1m15 0h1M1 92h3m3 0h3m4 0h3m5 0h2m2 0h4m1 0h3m1 0h2m2 0h4m1 0h2m2 0h1m1 0h1m4 0h2m3 0h2m2 0h2m1 0h2m2 0h1m6 0h2m1 0h2m1 0h2m2 0h1m1 0h1m4 0h1m4 0h2m1 0h1m13 0h2m1 0h1m1 0h1m15 0h1m1 0h1m13 0h1m1 0h1m6 0h1m1 0h1m2 0h1m5 0h1m2 0h2m3 0h1m1 0h1m6 0h3m2 0h1m2 0h5m2 0h6m10 0h1m4 0h1m2 0h1m2 0h2m1 0h2m1 0h1m8 0h1m3 0h1m1 0h1m3 0h1m1 0h1m17 0h1m23 0h5m3 0h2m12 0h1m2 0h1m4 0h1m5 0h2m14 0h1m4 0h1m13 0h1m5 0h1m31 0h1M0 93h1m3 0h1m1 0h2m5 0h3m2 0h5m1 0h1m2 0h1m1 0h6m1 0h1m3 0h2m2 0h1m2 0h6m2 0h1m3 0h1m3 0h4m2 0h1m2 0h2m1 0h3m2 0h1m3 0h1m5 0h1m4 0h1m1 0h1m3 0h1m1 0h1m1 0h2m26 0h1m21 0h5m1 0h1m1 0h1m1 0h3m1 0h1m1 0h3m3 0h2m1 0h4m2 0h1m2 0h1m2 0h3m1 0h1m3 0h1m1 0h1m1 0h1m11 0h3m1 0h1m1 0h1m7 0h1m6 0h1m5 0h1m5 0h1m2 0h1m1 0h1m1 0h2m3 0h1m1 0h2m14 0h1m7 0h1m1 0h1m11 0h1m8 0h1m2 0h1m14 0h1m12 0h1m2 0h2m4 0h2m9 0h1m1 0h2m17 0h1m8 0h1M1 94h2m1 0h2m1 0h4m2 0h2m2 0h5m1 0h4m1 0h4m1 0h2m1 0h1m1 0h1m2 0h2m2 0h1m2 0h5m10 0h1m1 0h1m1 0h1m4 0h2m1 0h2m2 0h1m2 0h1m1 0h2m8 0h1m3 0h2m1 0h3m1 0h1m4 0h1m1 0h1m4 0h1m26 0h3m5 0h1m4 0h5m3 0h3m1 0h1m3 0h1m2 0h1m1 0h4m1 0h2m1 0h1m3 0h2m1 0h1m1 0h3m1 0h1m2 0h1m2 0h1m1 0h1m7 0h1m2 0h2m3 0h2m5 0h1m1 0h1m1 0h1m8 0h1m2 0h1m2 0h1m16 0h1m10 0h1m4 0h1m1 0h1m5 0h1m18 0h1m18 0h1m10 0h1m11 0h2m18 0h1m29 0h1M0 95h2m1 0h3m1 0h1m2 0h1m1 0h1m1 0h4m2 0h1m1 0h2m3 0h1m1 0h3m2 0h4m1 0h6m1 0h3m1 0h2m2 0h1m2 0h2m1 0h1m1 0h2m7 0h1m2 0h2m1 0h2m3 0h1m1 0h1m7 0h3m1 0h2m4 0h2m2 0h1m9 0h2m23 0h1m4 0h1m9 0h3m1 0h1m1 0h1m2 0h1m1 0h1m3 0h1m2 0h1m1 0h2m1 0h1m2 0h1m1 0h1m1 0h1m2 0h1m9 0h1m4 0h2m2 0h2m1 0h1m4 0h2m4 0h1m4 0h1m3 0h1m4 0h1m3 0h1m7 0h1m3 0h1m11 0h1m6 0h1m3 0h2m10 0h1m1 0h1m12 0h1m6 0h1m2 0h1m19 0h1m4 0h1m2 0h2m9 0h2m3 0h1m6 0h1m35 0h1m14 0h1M0 96h1m2 0h1m1 0h1m1 0h1m1 0h2m1 0h6m1 0h2m1 0h1m1 0h1m1 0h1m1 0h3m1 0h1m2 0h6m1 0h1m1 0h1m3 0h5m3 0h8m2 0h1m1 0h1m1 0h1m5 0h2m1 0h5m1 0h1m8 0h2m1 0h1m4 0h4m30 0h2m18 0h2m1 0h1m8 0h2m2 0h1m1 0h2m11 0h1m8 0h3m4 0h2m2 0h2m1 0h1m4 0h3m8 0h1m5 0h1m2 0h1m1 0h2m2 0h1m6 0h1m1 0h1m2 0h1m2 0h4m7 0h1m2 0h1m2 0h2m13 0h1m22 0h1m8 0h1m58 0h1m34 0h2M0 97h2m1 0h6m3 0h1m1 0h6m1 0h4m2 0h6m1 0h3m2 0h2m1 0h1m1 0h2m4 0h2m5 0h7m3 0h1m2 0h1m1 0h1m3 0h2m3 0h2m1 0h1m1 0h1m1 0h1m1 0h1m7 0h1m1 0h1m1 0h3m1 0h1m11 0h2m13 0h1m23 0h1m2 0h4m1 0h1m1 0h1m5 0h2m1 0h1m1 0h2m8 0h1m3 0h1m3 0h1m1 0h1m1 0h1m6 0h1m3 0h2m2 0h1m2 0h1m7 0h1m5 0h2m1 0h1m5 0h1m4 0h1m8 0h5m1 0h1m5 0h1m3 0h1m14 0h1m12 0h1m6 0h2m3 0h1m6 0h1m7 0h1m31 0h1m1 0h1m19 0h2m33 0h1M0 98h5m1 0h3m3 0h1m1 0h1m1 0h1m1 0h2m1 0h4m3 0h2m2 0h3m1 0h1m2 0h1m1 0h2m2 0h1m1 0h1m1 0h1m3 0h3m1 0h1m1 0h2m4 0h1m1 0h1m1 0h2m2 0h2m2 0h1m1 0h1m1 0h10m2 0h1m1 0h1m3 0h2m2 0h3m24 0h1m14 0h1m10 0h1m2 0h1m3 0h1m2 0h1m2 0h1m1 0h1m5 0h3m1 0h1m2 0h1m3 0h1m3 0h2m1 0h1m2 0h3m1 0h1m1 0h1m1 0h1m1 0h1m1 0h1m6 0h1m6 0h1m1 0h1m2 0h2m7 0h3m3 0h1m3 0h1m4 0h2m3 0h3m1 0h1m1 0h1m6 0h1m1 0h1m3 0h1m2 0h1m7 0h3m1 0h2m10 0h1m3 0h1m10 0h1m4 0h1m18 0h1m18 0h1m8 0h1m16 0h1m5 0h1M1 99h2m1 0h2m3 0h4m1 0h2m1 0h2m1 0h4m1 0h9m2 0h1m1 0h1m1 0h4m4 0h1m2 0h1m2 0h2m1 0h2m2 0h3m1 0h3m2 0h1m5 0h1m2 0h1m2 0h1m3 0h1m2 0h4m1 0h1m5 0h1m3 0h1m2 0h4m8 0h2m2 0h1m2 0h1m4 0h1m19 0h1m4 0h1m2 0h1m1 0h1m5 0h1m3 0h3m1 0h1m2 0h1m2 0h1m1 0h1m1 0h4m5 0h1m5 0h2m4 0h2m3 0h2m7 0h2m3 0h1m2 0h1m3 0h2m1 0h1m5 0h2m1 0h1m2 0h2m2 0h3m4 0h2m1 0h1m14 0h3m15 0h1m5 0h1m10 0h1m2 0h1m15 0h1m8 0h1m12 0h1m2 0h1m2 0h1m3 0h2m9 0h1m24 0h1M0 100h1m1 0h1m3 0h2m1 0h2m2 0h1m4 0h2m1 0h2m1 0h2m1 0h2m2 0h3m1 0h1m2 0h3m3 0h2m1 0h2m2 0h2m5 0h1m2 0h1m3 0h1m1 0h3m1 0h1m1 0h1m3 0h1m1 0h1m1 0h1m2 0h2m4 0h1m2 0h1m1 0h1m2 0h1m4 0h1m2 0h1m2 0h1m11 0h1m1 0h1m1 0h1m2 0h1m26 0h1m1 0h2m2 0h3m1 0h1m1 0h1m2 0h1m2 0h3m3 0h2m1 0h1m1 0h4m4 0h2m1 0h1m1 0h2m1 0h2m2 0h1m1 0h3m1 0h1m1 0h1m1 0h1m3 0h2m7 0h1m2 0h1m7 0h1m2 0h1m5 0h1m1 0h1m1 0h1m4 0h1m2 0h3m2 0h1m13 0h1m6 0h1m2 0h1m35 0h1m10 0h1m4 0h2m6 0h1m26 0h1m22 0h1M2 101h1m3 0h6m1 0h4m1 0h2m1 0h1m1 0h1m1 0h1m1 0h1m1 0h8m1 0h1m1 0h2m2 0h1m1 0h3m1 0h1m2 0h1m1 0h1m2 0h1m8 0h2m1 0h1m2 0h1m7 0h1m1 0h1m1 0h1m6 0h1m9 0h1m1 0h1m4 0h2m14 0h1m30 0h1m4 0h1m2 0h2m4 0h2m3 0h2m2 0h1m5 0h1m1 0h1m1 0h1m2 0h1m5 0h2m1 0h1m3 0h1m1 0h1m1 0h5m1 0h2m2 0h1m1 0h1m3 0h2m5 0h3m2 0h1m2 0h1m2 0h1m3 0h1m1 0h2m7 0h5m3 0h1m24 0h1m3 0h1m5 0h2m1 0h2m3 0h1m1 0h1m6 0h1m7 0h1m1 0h2m2 0h1m7 0h2m2 0h1m1 0h1m5 0h1m2 0h1m2 0h1m4 0h2m19 0h1M0 102h2m1 0h1m1 0h1m2 0h3m1 0h2m3 0h1m2 0h1m1 0h5m1 0h1m1 0h1m2 0h2m1 0h1m2 0h5m1 0h4m1 0h2m1 0h1m12 0h1m1 0h2m2 0h1m3 0h1m2 0h3m2 0h2m2 0h1m12 0h2m1 0h1m2 0h1m3 0h1m5 0h1m2 0h1m5 0h1m29 0h1m3 0h1m2 0h1m3 0h1m4 0h1m5 0h3m1 0h1m3 0h1m2 0h2m4 0h1m2 0h1m4 0h1m2 0h4m5 0h2m1 0h1m2 0h1m2 0h1m2 0h1m1 0h1m1 0h1m2 0h1m4 0h5m4 0h1m6 0h2m1 0h2m4 0h1m2 0h1m11 0h1m4 0h1m2 0h1m3 0h1m5 0h1m4 0h1m9 0h1m1 0h1m23 0h1m13 0h1m26 0h1m2 0h1m6 0h1m6 0h1M0 103h4m1 0h6m1 0h3m1 0h4m3 0h1m2 0h5m1 0h1m2 0h2m2 0h1m3 0h1m3 0h3m1 0h3m3 0h1m3 0h1m1 0h1m1 0h1m2 0h1m1 0h1m1 0h2m2 0h1m3 0h1m1 0h1m5 0h2m2 0h1m2 0h2m2 0h1m2 0h2m2 0h1m6 0h1m4 0h1m37 0h4m2 0h1m3 0h1m2 0h1m1 0h1m4 0h1m4 0h1m8 0h1m1 0h1m2 0h1m1 0h1m2 0h1m4 0h1m9 0h1m3 0h2m5 0h1m2 0h2m7 0h1m4 0h2m10 0h3m1 0h1m18 0h1m1 0h1m6 0h1m11 0h1m12 0h1m3 0h1m7 0h1m1 0h1m2 0h1m4 0h1m13 0h1m1 0h2m7 0h1m4 0h1m23 0h1M0 104h1m2 0h7m1 0h1m1 0h2m2 0h1m1 0h2m1 0h1m2 0h2m1 0h1m1 0h4m2 0h2m3 0h1m4 0h2m1 0h3m4 0h2m2 0h1m2 0h1m1 0h1m6 0h4m3 0h1m1 0h4m1 0h1m1 0h1m1 0h1m11 0h1m1 0h1m2 0h1m7 0h1m3 0h1m5 0h1m31 0h2m3 0h1m3 0h3m1 0h1m3 0h1m1 0h1m7 0h1m1 0h1m3 0h1m3 0h1m3 0h1m3 0h2m3 0h1m1 0h1m3 0h1m2 0h1m6 0h1m3 0h2m4 0h1m2 0h2m1 0h2m11 0h2m1 0h1m2 0h3m4 0h1m1 0h1m6 0h2m4 0h1m10 0h1m18 0h2m11 0h1m8 0h1m5 0h1m8 0h1m1 0h1m15 0h1m5 0h1M0 105h2m4 0h5m1 0h5m1 0h1m1 0h4m1 0h4m2 0h1m2 0h5m4 0h2m1 0h1m1 0h7m4 0h4m4 0h3m4 0h1m2 0h1m1 0h1m3 0h1m5 0h3m1 0h1m1 0h1m2 0h1m1 0h1m2 0h1m13 0h2m13 0h1m15 0h1m7 0h10m1 0h2m1 0h2m3 0h2m1 0h2m9 0h3m2 0h2m3 0h5m5 0h1m1 0h1m1 0h1m8 0h1m2 0h1m3 0h3m1 0h3m3 0h1m10 0h1m4 0h2m1 0h2m1 0h1m6 0h1m8 0h2m4 0h1m2 0h2m6 0h1m1 0h3m13 0h1m4 0h1m4 0h1m2 0h1m9 0h1m6 0h1m41 0h1M1 106h1m2 0h3m1 0h4m3 0h2m1 0h1m1 0h1m2 0h2m2 0h4m1 0h2m1 0h4m1 0h1m1 0h1m6 0h1m2 0h2m3 0h2m1 0h1m1 0h2m1 0h2m1 0h1m3 0h1m1 0h5m1 0h1m1 0h1m2 0h1m2 0h1m5 0h1m1 0h1m4 0h2m3 0h1m4 0h1m5 0h1m34 0h1m3 0h1m3 0h1m2 0h1m2 0h1m2 0h3m3 0h1m2 0h1m10 0h1m2 0h8m1 0h2m5 0h1m4 0h1m2 0h3m3 0h1m1 0h2m6 0h2m1 0h1m3 0h2m3 0h1m13 0h1m1 0h1m7 0h1m8 0h1m32 0h1m12 0h1m8 0h1m21 0h1m19 0h1M2 107h1m1 0h2m1 0h2m3 0h1m1 0h5m2 0h1m3 0h1m2 0h3m4 0h2m1 0h1m5 0h1m1 0h1m1 0h1m2 0h5m4 0h2m3 0h2m1 0h1m2 0h1m2 0h1m2 0h1m3 0h1m3 0h3m3 0h1m1 0h1m1 0h1m4 0h2m1 0h2m31 0h1m1 0h1m17 0h8m1 0h1m2 0h2m1 0h2m2 0h3m4 0h2m2 0h1m2 0h1m3 0h2m1 0h2m2 0h2m1 0h1m3 0h3m1 0h1m3 0h1m6 0h1m2 0h1m1 0h1m2 0h1m9 0h2m2 0h3m1 0h2m2 0h1m6 0h1m1 0h1m20 0h1m5 0h1m5 0h1m2 0h1m6 0h2m6 0h2m21 0h1m4 0h1m8 0h1m9 0h1m4 0h1M1 108h2m3 0h1m3 0h2m1 0h2m1 0h2m1 0h3m1 0h3m1 0h1m1 0h6m1 0h5m5 0h1m1 0h1m1 0h3m2 0h1m1 0h1m2 0h1m1 0h2m2 0h1m2 0h2m2 0h2m2 0h1m1 0h1m1 0h1m12 0h1m2 0h4m1 0h1m4 0h1m3 0h1m44 0h1m1 0h1m5 0h1m2 0h1m2 0h4m1 0h1m4 0h1m1 0h1m5 0h1m1 0h1m7 0h1m2 0h2m1 0h1m3 0h1m3 0h2m2 0h1m6 0h1m1 0h1m3 0h2m3 0h1m8 0h1m12 0h1m2 0h1m2 0h1m4 0h1m6 0h2m18 0h1m14 0h1m1 0h1m16 0h1m30 0h1m5 0h1m12 0h1m8 0h1m15 0h1M0 109h1m1 0h2m1 0h5m1 0h2m1 0h2m1 0h9m1 0h4m2 0h1m1 0h3m1 0h1m2 0h1m1 0h1m2 0h3m1 0h3m10 0h2m2 0h2m4 0h1m2 0h1m4 0h1m2 0h1m2 0h1m1 0h1m2 0h2m1 0h2m1 0h2m2 0h1m1 0h1m7 0h1m9 0h1m7 0h1m24 0h1m4 0h2m5 0h1m1 0h1m1 0h1m1 0h2m1 0h1m1 0h1m8 0h1m10 0h4m4 0h2m5 0h2m6 0h1m2 0h1m2 0h4m1 0h2m11 0h1m8 0h3m22 0h1m2 0h1m10 0h1m18 0h1m1 0h1m1 0h1m1 0h2m4 0h1m12 0h1m2 0h1m2 0h1m7 0h1m1 0h1m9 0h1m22 0h3M1 110h2m3 0h3m1 0h5m4 0h1m1 0h1m1 0h1m1 0h4m1 0h1m1 0h2m1 0h5m1 0h2m3 0h2m1 0h5m6 0h3m6 0h1m1 0h1m5 0h3m2 0h2m1 0h2m1 0h1m4 0h1m2 0h1m1 0h1m1 0h4m3 0h1m7 0h1m36 0h1m3 0h1m1 0h2m1 0h1m2 0h1m6 0h1m1 0h2m1 0h1m1 0h1m3 0h1m2 0h1m1 0h1m11 0h1m2 0h2m1 0h4m2 0h2m1 0h1m4 0h2m3 0h1m2 0h1m1 0h1m8 0h1m2 0h2m11 0h2m1 0h1m1 0h2m3 0h2m18 0h1m21 0h1m1 0h1m2 0h1m15 0h1m1 0h1m8 0h1m4 0h1m7 0h1m20 0h1m7 0h1M0 111h3m1 0h2m2 0h2m2 0h1m2 0h1m2 0h3m5 0h1m1 0h4m1 0h1m1 0h2m1 0h1m1 0h2m1 0h6m1 0h2m8 0h3m1 0h1m2 0h6m5 0h1m3 0h1m1 0h3m3 0h1m2 0h2m1 0h1m1 0h1m4 0h1m19 0h1m8 0h1m23 0h4m2 0h2m3 0h1m3 0h3m4 0h3m4 0h1m7 0h1m6 0h1m2 0h1m2 0h2m2 0h1m4 0h1m3 0h2m2 0h1m3 0h2m1 0h2m4 0h1m6 0h1m9 0h1m1 0h1m3 0h1m4 0h1m2 0h1m34 0h1m1 0h1m6 0h2m15 0h1m7 0h1m4 0h1m22 0h1m7 0h1M0 112h2m1 0h4m2 0h1m1 0h1m1 0h6m3 0h1m1 0h1m3 0h2m1 0h4m1 0h1m2 0h3m1 0h2m1 0h2m10 0h1m1 0h2m2 0h1m3 0h4m3 0h1m2 0h1m1 0h2m1 0h3m1 0h1m2 0h1m1 0h1m1 0h1m4 0h1m4 0h1m2 0h1m14 0h1m33 0h2m3 0h4m2 0h1m1 0h1m1 0h2m3 0h1m1 0h2m2 0h1m3 0h2m1 0h2m6 0h3m6 0h3m3 0h1m2 0h1m2 0h1m3 0h1m1 0h1m2 0h1m5 0h1m4 0h2m4 0h1m1 0h1m9 0h1m25 0h1m7 0h1m12 0h2m3 0h1m3 0h1m3 0h1m8 0h1m2 0h1m1 0h1m2 0h1m7 0h1m11 0h1m1 0h1m22 0h1M0 113h2m1 0h3m2 0h1m1 0h3m1 0h4m2 0h1m1 0h1m1 0h3m1 0h1m1 0h2m4 0h1m1 0h1m2 0h1m1 0h2m2 0h1m1 0h1m1 0h1m1 0h1m4 0h1m1 0h2m1 0h1m4 0h1m1 0h2m2 0h4m1 0h5m3 0h1m1 0h1m1 0h1m1 0h1m8 0h1m1 0h1m13 0h3m24 0h1m10 0h2m3 0h1m2 0h1m1 0h1m2 0h4m1 0h1m1 0h1m1 0h1m4 0h1m2 0h1m1 0h1m1 0h2m1 0h2m1 0h1m1 0h3m3 0h1m1 0h2m1 0h1m4 0h2m1 0h2m3 0h2m28 0h1m5 0h4m9 0h1m21 0h1m5 0h1m6 0h1m17 0h1m11 0h1m3 0h2m6 0h1m14 0h3m8 0h1m20 0h1m1 0h1M0 114h1m2 0h2m1 0h2m1 0h1m1 0h13m1 0h7m3 0h1m1 0h1m1 0h3m1 0h2m1 0h2m1 0h4m2 0h1m1 0h1m2 0h2m1 0h2m4 0h1m1 0h6m3 0h1m1 0h2m1 0h1m1 0h1m4 0h1m1 0h2m2 0h1m3 0h2m8 0h2m1 0h1m9 0h1m12 0h1m4 0h1m12 0h1m6 0h1m2 0h2m3 0h2m1 0h3m1 0h1m1 0h2m1 0h1m6 0h1m1 0h1m7 0h2m2 0h1m2 0h4m1 0h1m12 0h1m1 0h3m9 0h1m5 0h2m7 0h1m1 0h1m3 0h1m3 0h1m2 0h1m3 0h1m14 0h1m9 0h1m14 0h2m11 0h1m2 0h1m21 0h2m1 0h1m5 0h1m5 0h1m4 0h1m11 0h1m9 0h1M0 115h3m1 0h1m1 0h1m3 0h2m1 0h2m2 0h1m2 0h1m2 0h1m1 0h1m2 0h1m6 0h2m2 0h4m1 0h2m1 0h2m1 0h1m2 0h3m5 0h3m8 0h2m4 0h1m4 0h1m1 0h1m4 0h3m1 0h1m2 0h2m3 0h3m4 0h2m3 0h1m41 0h1m1 0h1m4 0h1m1 0h1m3 0h1m1 0h1m1 0h1m2 0h1m5 0h2m2 0h2m5 0h1m2 0h1m5 0h1m4 0h2m1 0h3m7 0h2m2 0h1m1 0h1m1 0h3m2 0h1m1 0h1m7 0h1m1 0h1m1 0h1m3 0h1m1 0h1m2 0h4m7 0h1m4 0h1m4 0h1m5 0h1m5 0h1m20 0h1m11 0h1m25 0h1m5 0h1m26 0h1m19 0h1M0 116h5m3 0h2m2 0h1m1 0h1m1 0h5m2 0h3m2 0h4m1 0h2m3 0h3m2 0h1m1 0h2m1 0h2m3 0h1m2 0h1m1 0h4m1 0h1m1 0h1m1 0h2m4 0h3m3 0h3m8 0h1m1 0h2m2 0h1m1 0h3m2 0h2m9 0h1m3 0h1m4 0h1m1 0h1m9 0h1m5 0h2m13 0h1m1 0h1m3 0h2m1 0h1m1 0h1m4 0h1m1 0h3m6 0h1m1 0h1m4 0h1m1 0h2m1 0h1m3 0h1m4 0h1m2 0h2m3 0h1m4 0h1m3 0h1m3 0h2m2 0h1m1 0h1m10 0h1m1 0h1m1 0h1m4 0h1m3 0h1m4 0h1m2 0h1m20 0h1m5 0h1m5 0h1m6 0h1m7 0h1m15 0h1m1 0h1m23 0h1m4 0h1m4 0h1m10 0h2m14 0h1M0 117h3m1 0h5m1 0h5m2 0h3m1 0h3m1 0h4m1 0h1m2 0h2m2 0h1m2 0h1m2 0h6m2 0h7m4 0h1m5 0h4m4 0h1m3 0h1m6 0h1m1 0h2m1 0h1m2 0h1m1 0h2m5 0h1m2 0h1m13 0h1m15 0h1m19 0h1m1 0h1m5 0h1m3 0h2m1 0h2m1 0h1m3 0h2m1 0h1m2 0h1m3 0h1m1 0h2m3 0h1m1 0h2m1 0h1m3 0h1m5 0h2m1 0h1m3 0h2m3 0h2m18 0h3m2 0h2m1 0h2m5 0h1m1 0h1m7 0h1m4 0h1m1 0h2m16 0h1m2 0h1m8 0h1m19 0h1m18 0h1m2 0h1m1 0h1m1 0h2m42 0h1M2 118h4m1 0h1m1 0h1m1 0h1m1 0h3m1 0h1m3 0h1m3 0h2m2 0h5m1 0h2m1 0h1m1 0h6m2 0h6m2 0h1m5 0h1m2 0h2m4 0h1m5 0h2m3 0h1m5 0h1m3 0h1m1 0h1m2 0h1m1 0h2m1 0h2m17 0h1m23 0h1m10 0h3m2 0h1m9 0h1m4 0h1m1 0h2m1 0h2m1 0h1m3 0h2m2 0h1m5 0h2m5 0h3m1 0h1m2 0h2m9 0h1m3 0h1m3 0h2m2 0h1m13 0h2m6 0h1m35 0h1m33 0h1m4 0h1m13 0h1m9 0h1m6 0h1m14 0h1M1 119h2m1 0h3m1 0h3m1 0h2m4 0h2m2 0h7m2 0h1m2 0h3m1 0h1m2 0h1m1 0h1m1 0h3m5 0h1m4 0h1m1 0h2m4 0h2m2 0h2m1 0h1m1 0h2m4 0h3m2 0h1m4 0h2m2 0h4m4 0h1m18 0h1m1 0h1m2 0h1m7 0h1m21 0h1m1 0h2m1 0h1m7 0h1m1 0h1m4 0h2m1 0h1m1 0h2m1 0h1m6 0h1m1 0h1m2 0h1m1 0h1m5 0h1m1 0h1m5 0h1m1 0h1m1 0h1m6 0h1m1 0h2m9 0h1m1 0h1m4 0h2m5 0h2m3 0h1m2 0h1m1 0h1m3 0h1m28 0h1m15 0h3m2 0h1m2 0h1m8 0h1m10 0h2m4 0h1m1 0h1m4 0h1m11 0h2M3 120h2m1 0h4m2 0h1m1 0h1m1 0h9m2 0h4m2 0h4m1 0h2m4 0h2m1 0h1m1 0h1m2 0h2m1 0h2m3 0h1m4 0h1m1 0h1m1 0h1m1 0h1m1 0h1m6 0h1m3 0h2m1 0h1m2 0h1m3 0h2m4 0h1m1 0h2m1 0h2m2 0h1m3 0h1m2 0h1m37 0h1m1 0h1m1 0h1m5 0h1m2 0h2m1 0h1m4 0h1m7 0h1m2 0h1m9 0h1m1 0h1m3 0h1m2 0h1m3 0h3m1 0h1m4 0h2m10 0h2m12 0h1m3 0h3m3 0h1m1 0h2m26 0h1m11 0h1m4 0h1m3 0h1m3 0h1m2 0h1m6 0h3m4 0h1m19 0h1m2 0h1m1 0h1m43 0h1M0 121h3m2 0h3m1 0h5m5 0h7m1 0h2m2 0h2m1 0h1m2 0h3m1 0h2m3 0h4m1 0h2m1 0h1m8 0h1m3 0h4m5 0h1m2 0h1m1 0h1m2 0h1m1 0h1m1 0h1m2 0h1m4 0h1m2 0h1m2 0h1m1 0h1m5 0h1m5 0h1m11 0h1m11 0h1m15 0h2m8 0h1m4 0h1m1 0h1m4 0h1m1 0h1m1 0h1m6 0h2m1 0h1m2 0h1m4 0h1m5 0h2m10 0h1m10 0h1m16 0h1m2 0h2m25 0h2m17 0h2m7 0h1m7 0h1m20 0h2m2 0h1m12 0h1m1 0h1M0 122h2m3 0h1m4 0h3m1 0h2m1 0h3m1 0h2m1 0h4m4 0h1m1 0h1m1 0h3m2 0h4m1 0h1m1 0h1m1 0h1m1 0h1m7 0h1m1 0h1m6 0h1m5 0h1m1 0h1m1 0h3m2 0h1m1 0h1m1 0h1m3 0h1m3 0h3m2 0h3m3 0h1m1 0h1m3 0h1m21 0h1m23 0h1m1 0h3m3 0h3m4 0h1m5 0h1m3 0h1m2 0h1m5 0h1m4 0h2m1 0h1m2 0h2m18 0h1m4 0h2m1 0h1m10 0h1m11 0h1m23 0h1m9 0h1m15 0h1m5 0h1m8 0h1m5 0h1m5 0h1m32 0h1m2 0h1M0 123h4m2 0h2m2 0h2m1 0h3m1 0h1m3 0h1m1 0h1m1 0h3m2 0h2m1 0h3m2 0h4m1 0h5m2 0h1m1 0h2m4 0h1m6 0h1m1 0h1m1 0h1m5 0h3m5 0h1m3 0h3m3 0h3m2 0h2m1 0h1m1 0h2m5 0h1m29 0h1m17 0h1m3 0h1m2 0h2m1 0h2m5 0h1m4 0h1m5 0h1m13 0h2m4 0h3m5 0h1m2 0h2m2 0h1m2 0h1m2 0h1m3 0h1m1 0h1m4 0h1m2 0h2m1 0h1m13 0h3m12 0h1m37 0h3m3 0h1m13 0h1m2 0h1m2 0h1m16 0h1m16 0h1m2 0h1m6 0h1m1 0h1m14 0h1" stroke="#0044ff" stroke-width="1.02" fill="none"/>
<path transform="translate(95 21.5) scale(1.68990 1.00000)" d="M6 0h1m37 0h1M7 1h1m13 0h1m10 0h1M8 3h1m8 0h1m83 0h1M225 4h1M6 5h1m3 0h1m35 0h1m2 0h1M28 6h1m1 0h1m12 0h1m7 0h1m13 0h1m11 0h1M2 7h1m11 0h1m8 0h1m18 0h1m8 0h1M38 8h1m12 0h1m260 0h1M22 9h1m15 0h1m10 0h1M16 10h1m10 0h1m18 0h1m49 0h1M8 11h1m38 0h1m3 0h1m12 0h1M11 12h1m5 0h1m6 0h1m9 0h1M2 13h1m3 0h1m6 0h1m5 0h1M2 14h1m8 0h1m3 0h1m20 0h1m6 0h1m3 0h1M6 15h1m42 0h1M49 16h3m51 0h1M7 17h1m9 0h2m27 0h1m4 0h1M26 18h1M8 19h1M20 20h1m238 0h1m28 0h1M28 21h1m2 0h1m66 0h1M28 22h1m17 0h1m2 0h1m1 0h1m43 0h1m257 0h1M21 23h1m10 0h1M43 24h2m6 0h1M21 25h1M27 26h1m15 0h1M41 27h1M32 28h1m18 0h1M0 29h2m8 0h1m29 0h1m2 0h1M20 30h1m1 0h1m10 0h2m9 0h2m3 0h1m209 0h1M5 31h2m8 0h1m12 0h1M7 32h1m11 0h1m7 0h1m22 0h1M6 33h1m6 0h1m11 0h1m19 0h1M3 34h1m15 0h1m10 0h1m14 0h1m4 0h1m25 0h1M7 35h1m4 0h3m7 0h1m20 0h1m2 0h1M6 36h1m32 0h1m8 0h1m2 0h1m193 0h1M33 37h1m2 0h1m3 0h2m3 0h1m210 0h1M17 38h1m2 0h1m19 0h2m9 0h1M11 39h1m11 0h1m11 0h1m12 0h1m2 0h1m13 0h1m29 0h1m7 0h1M6 40h1m3 0h1m6 0h1m19 0h1m4 0h1m2 0h1m1 0h1m1 0h1m43 0h1m8 0h1M3 41h1m6 0h1m5 0h1m20 0h1m10 0h2m2 0h1m6 0h1m3 0h1M10 42h1m15 0h1m5 0h1m1 0h1m9 0h2m210 0h1M0 43h1m9 0h2m1 0h2m7 0h1m10 0h1m3 0h1m4 0h1m3 0h2m2 0h1m19 0h1m24 0h1M19 44h1m4 0h1m7 0h1m2 0h1m1 0h1m12 0h2m14 0h1m30 0h1M10 45h1m3 0h1m1 0h1m22 0h1m11 0h1m32 0h1M8 46h1m3 0h1m1 0h1m17 0h1m10 0h1m6 0h1m40 0h1m10 0h1M12 47h1m4 0h1m18 0h1m1 0h1m5 0h1m2 0h1m1 0h2m1 0h1m18 0h1M11 48h1m6 0h1m3 0h1m5 0h1m1 0h1m20 0h1M1 49h1m14 0h1m11 0h1m3 0h1m2 0h3M0 50h1m1 0h1m9 0h1m5 0h1m12 0h1m5 0h1m1 0h1m10 0h1M12 51h2m11 0h1m1 0h1m8 0h1m3 0h1m5 0h1m4 0h1M1 52h1m6 0h1m2 0h1m13 0h1m3 0h1m7 0h1m1 0h1m1 0h1m1 0h1m1 0h2m1 0h1m54 0h1m118 0h1m36 0h1M3 53h1m3 0h2m5 0h1m2 0h1m23 0h1m8 0h2m41 0h1m9 0h1M6 54h1m7 0h1m5 0h2m3 0h1m1 0h1m5 0h2m10 0h2m4 0h1M12 55h2m4 0h1m5 0h1m3 0h4m2 0h1m1 0h1m4 0h1m4 0h2m1 0h3m42 0h1M0 56h2m4 0h1m3 0h1m6 0h1m1 0h2m19 0h1m4 0h1m1 0h1m4 0h1m2 0h1m256 0h1M3 57h2m7 0h1m5 0h1m4 0h1m1 0h1m2 0h3m1 0h1m3 0h1m2 0h1m2 0h2m1 0h1m3 0h2M6 58h1m2 0h1m3 0h1m4 0h2m1 0h1m4 0h2m1 0h1m1 0h2m1 0h1m1 0h4m2 0h3m5 0h2m20 0h1m4 0h1M1 59h3m1 0h1m5 0h1m6 0h2m4 0h3m1 0h1m1 0h2m5 0h1m3 0h1m4 0h1m2 0h3M1 60h2m1 0h2m1 0h2m1 0h1m9 0h3m1 0h2m1 0h6m3 0h1m2 0h9m2 0h1m10 0h1m9 0h3m30 0h1m141 0h1m12 0h1m119 0h1M0 61h1m1 0h3m1 0h2m2 0h2m5 0h5m2 0h1m3 0h3m1 0h2m2 0h4m4 0h3m2 0h1m1 0h1m20 0h1m9 0h1m72 0h1m104 0h1M0 62h5m1 0h7m1 0h1m2 0h2m1 0h1m1 0h4m1 0h2m1 0h5m2 0h1m4 0h1m1 0h1m1 0h6m12 0h1m1 0h1m1 0h1m10 0h1m5 0h1m10 0h1m1 0h1m4 0h1m52 0h1m9 0h2m9 0h1m15 0h2m6 0h1m1 0h1m1 0h1m1 0h3m4 0h1m3 0h1m1 0h1m2 0h1m4 0h2m8 0h1m3 0h1m4 0h1m6 0h2m34 0h1m4 0h1m21 0h1m18 0h1M0 63h3m1 0h4m1 0h1m1 0h1m1 0h3m2 0h2m3 0h1m2 0h1m1 0h3m1 0h1m3 0h1m2 0h1m1 0h1m4 0h6m3 0h1m11 0h1m6 0h1m2 0h1m1 0h1m8 0h1m9 0h1m4 0h1m7 0h1m44 0h1m13 0h1m17 0h1m3 0h1m2 0h1m7 0h1m3 0h3m2 0h1m4 0h1m22 0h1m4 0h1m1 0h1m11 0h2m28 0h1m35 0h1m32 0h1M2 64h1m1 0h1m1 0h1m1 0h5m1 0h1m3 0h1m3 0h4m5 0h1m4 0h3m5 0h1m2 0h4m22 0h1m12 0h1m69 0h1m12 0h1m11 0h2m6 0h1m3 0h1m8 0h1m4 0h1m31 0h1m1 0h1m11 0h1m9 0h1M0 65h4m4 0h2m4 0h1m2 0h3m3 0h1m2 0h2m1 0h1m4 0h1m4 0h2m4 0h1m2 0h1m1 0h3m4 0h1m3 0h1m5 0h1m22 0h1m65 0h1m1 0h1m1 0h1m46 0h1m47 0h1m3 0h1m32 0h1m19 0h1M5 66h1m1 0h1m6 0h1m8 0h1m2 0h1m1 0h1m2 0h2m5 0h1m4 0h2m1 0h2m3 0h2m20 0h1m23 0h2m64 0h1m9 0h1m11 0h1m2 0h2m3 0h1m10 0h1m55 0h1m16 0h1m34 0h1M1 67h1m1 0h1m1 0h1m2 0h4m1 0h1m1 0h1m3 0h1m9 0h1m6 0h1m6 0h2m2 0h2m3 0h1m20 0h1m22 0h1m77 0h2m11 0h1m3 0h1m9 0h1m1 0h1m4 0h1m11 0h1m14 0h1m55 0h1m20 0h1M1 68h1m2 0h1m1 0h1m2 0h2m1 0h2m3 0h1m1 0h2m8 0h1m2 0h1m10 0h1m2 0h1m4 0h2m8 0h1m7 0h1m8 0h1m11 0h1m12 0h1m59 0h1m2 0h1m1 0h1m15 0h1m5 0h1m9 0h1m2 0h1m1 0h1m202 0h1M6 69h1m5 0h1m2 0h1m7 0h1m7 0h1m6 0h1m12 0h1m12 0h1m4 0h1m93 0h1m60 0h1M6 70h1m5 0h1m3 0h1m8 0h1m2 0h1m7 0h1m1 0h2m6 0h1m4 0h2m25 0h2m10 0h1m7 0h1m19 0h1m41 0h2m10 0h2m18 0h1m3 0h1m18 0h1m37 0h1M3 71h1m4 0h1m3 0h1m20 0h1m1 0h1m5 0h1m7 0h3m26 0h1m77 0h2m16 0h1m3 0h1m1 0h1m26 0h2m11 0h1m73 0h1m68 0h1M3 72h1m10 0h1m2 0h1m17 0h1m14 0h1m20 0h1m88 0h1m21 0h1m16 0h1m7 0h2m9 0h1m27 0h1m56 0h1M5 73h2m4 0h1m3 0h1m15 0h1m1 0h1m1 0h1m15 0h1m15 0h1m17 0h1m3 0h1m82 0h1m66 0h1m7 0h1m63 0h1M1 74h1m3 0h1m4 0h1m6 0h1m11 0h1m1 0h1m48 0h1m11 0h1m3 0h1m1 0h1M6 75h2m4 0h1m3 0h1m4 0h1m8 0h1m7 0h1m2 0h1m5 0h1m43 0h1m79 0h1m14 0h1M9 76h2m11 0h1m16 0h1m8 0h1m27 0h1m27 0h1m52 0h1m1 0h1m5 0h1m57 0h1m2 0h1m16 0h1M17 77h1m11 0h1m9 0h2m2 0h1m4 0h1m2 0h1m51 0h2m89 0h1m2 0h1m4 0h1m4 0h1m7 0h1m28 0h1M2 78h1m9 0h1m4 0h1m5 0h1m10 0h1m14 0h1m1 0h1m46 0h2m69 0h1m4 0h1m35 0h1m86 0h1M2 79h1m2 0h1m2 0h1m1 0h1m1 0h1m1 0h1m10 0h1m14 0h1m116 0h1m14 0h1m69 0h1M7 80h1m1 0h1m12 0h1m27 0h1m109 0h1m9 0h1m1 0h1m12 0h1M16 81h1m9 0h1m16 0h1m8 0h1m141 0h1m2 0h1m15 0h1M2 82h1m8 0h1m13 0h1m20 0h1m2 0h2m1 0h1m6 0h1m9 0h1m113 0h1m45 0h1m111 0h1m13 0h1M9 83h1m5 0h1m13 0h2m58 0h1m71 0h1M1 84h1m31 0h2m6 0h2m2 0h1m5 0h1m54 0h1m81 0h1m54 0h1M2 85h1m4 0h1m1 0h1m11 0h1m14 0h1m15 0h1m16 0h1m9 0h1m77 0h1m13 0h1m124 0h1m14 0h2M0 86h1m28 0h1m8 0h1m139 0h1m80 0h1M2 87h2m23 0h1m3 0h1m4 0h1m14 0h1m108 0h1m34 0h1M14 88h1m3 0h2m2 0h2m8 0h1m7 0h1m10 0h1m3 0h1m102 0h1m46 0h1m112 0h1M5 89h1m10 0h1m1 0h1m26 0h1m165 0h1m2 0h1M42 90h1m1 0h1m39 0h1m110 0h1m63 0h1m52 0h1M36 91h1m1 0h1m12 0h1m51 0h1M5 92h1m6 0h1m4 0h1m33 0h1m1 0h1m22 0h1m135 0h1M3 93h1m4 0h1m17 0h1m10 0h1m8 0h1m140 0h1m19 0h1M32 94h1m7 0h1m5 0h1m295 0h1M8 95h1m16 0h1m6 0h1m16 0h1m2 0h1m42 0h1m79 0h1m54 0h1M18 96h1m2 0h1m1 0h1m7 0h1m147 0h1M9 97h1m38 0h1m3 0h1m117 0h1m28 0h1M5 98h1m7 0h1m3 0h1m7 0h1m4 0h2m11 0h1m17 0h2M8 99h1m10 0h1m19 0h1m28 0h1m15 0h1m18 0h1m85 0h1m167 0h1M358 100h1M12 101h1m4 0h1m4 0h1m1 0h1m1 0h1m12 0h1m11 0h1m30 0h1M4 102h1m6 0h1m6 0h1m12 0h2m186 0h1M22 103h1m10 0h1m6 0h1m3 0h1m5 0h1m122 0h1m34 0h1M1 104h2m7 0h1m1 0h1m8 0h1m1 0h1m11 0h1m9 0h1M2 105h1m1 0h1m6 0h1m66 0h1M19 106h1m24 0h1m1 0h1m1 0h1m2 0h1m53 0h1m55 0h1m41 0h1m48 0h1m6 0h1M0 107h1m8 0h2m8 0h1m165 0h1m5 0h1m3 0h1M3 108h1m1 0h1m37 0h1m12 0h1m14 0h1m31 0h1m102 0h1m35 0h1M38 109h1m314 0h1M5 110h1m28 0h1m13 0h1m9 0h1m5 0h1m2 0h1m2 0h1m20 0h1m2 0h1M3 111h1m12 0h1m20 0h1M2 112h1m4 0h1m19 0h1m23 0h1M18 113h1m4 0h1m3 0h1m7 0h1m3 0h1m2 0h1m9 0h1m155 0h1m28 0h1M70 114h1m122 0h1M5 115h1m10 0h1m13 0h1m20 0h1m108 0h1m48 0h1m50 0h1M37 116h1m3 0h2m4 0h1m3 0h1m33 0h1m95 0h1M3 117h1m37 0h1m51 0h1m62 0h1m27 0h1M12 118h1m3 0h1m2 0h1m4 0h1m29 0h1m153 0h1m8 0h1m146 0h1M3 119h1m10 0h2m4 0h1m27 0h1m1 0h1m13 0h1m168 0h1M10 120h1m4 0h1m10 0h1m10 0h1m12 0h2m34 0h1m4 0h1m114 0h1m33 0h1M8 121h1m20 0h1m20 0h1m34 0h1m17 0h1m127 0h1M8 122h1m26 0h1m15 0h1m14 0h1m37 0h1m61 0h1m50 0h1M51 123h1m205 0h1m3 0h1" stroke="#008bff" stroke-width="1.02" fill="none"/>
<path transform="translate(95 21.5) scale(1.68990 1.00000)" d="M46 32h1M40 59h1m1 0h1M19 60h1m31 0h1M8 61h1m3 0h2m26 0h1m6 0h1M19 62h1m70 0h1m100 0h1M51 64h1m107 0h1M0 66h1m41 0h1M176 68h1M8 76h1m26 0h1M89 80h1M28 85h1M51 98h1M21 103h1M51 119h1" stroke="#00bbff" stroke-width="1.02" fill="none"/>
</g></g>
<line x1="95.5" y1="21" x2="95.5" y2="146" stroke="#000" stroke-width="1"/>
<line x1="95" y1="145.5" x2="799" y2="145.5" stroke="#000" stroke-width="1"/>
<line x1="798.5" y1="21" x2="798.5" y2="146" stroke="#000" stroke-width="1"/>
<text transform="translate(91.2 149.6) scale(0.95 1)" font-size="11.6" text-anchor="end">0</text>
<line x1="95.5" y1="129.5" x2="117.5" y2="129.5" stroke="#000" stroke-width="1"/>
<text transform="translate(91.2 134.1) scale(0.95 1)" font-size="11.6" text-anchor="end">20</text>
<line x1="95.5" y1="114.5" x2="117.5" y2="114.5" stroke="#000" stroke-width="1"/>
<text transform="translate(91.2 118.6) scale(0.95 1)" font-size="11.6" text-anchor="end">40</text>
<line x1="95.5" y1="98.5" x2="117.5" y2="98.5" stroke="#000" stroke-width="1"/>
<text transform="translate(91.2 103.1) scale(0.95 1)" font-size="11.6" text-anchor="end">60</text>
<line x1="95.5" y1="83.5" x2="117.5" y2="83.5" stroke="#000" stroke-width="1"/>
<text transform="translate(91.2 87.6) scale(0.95 1)" font-size="11.6" text-anchor="end">80</text>
<line x1="95.5" y1="67.5" x2="117.5" y2="67.5" stroke="#000" stroke-width="1"/>
<text transform="translate(91.2 72.1) scale(0.95 1)" font-size="11.6" text-anchor="end">100</text>
<line x1="95.5" y1="52.5" x2="117.5" y2="52.5" stroke="#000" stroke-width="1"/>
<text transform="translate(91.2 56.6) scale(0.95 1)" font-size="11.6" text-anchor="end">120</text>
<line x1="95.5" y1="36.5" x2="117.5" y2="36.5" stroke="#000" stroke-width="1"/>
<text transform="translate(91.2 41.1) scale(0.95 1)" font-size="11.6" text-anchor="end">140</text>
<line x1="95.5" y1="21.5" x2="117.5" y2="21.5" stroke="#000" stroke-width="1"/>
<text transform="translate(91.2 25.6) scale(0.95 1)" font-size="11.6" text-anchor="end">160</text>
<text x="95" y="155" font-size="11.8" text-anchor="middle">0</text>
<line x1="180.5" y1="145.5" x2="180.5" y2="141" stroke="#000" stroke-width="1"/>
<text x="180" y="155" font-size="11.8" text-anchor="middle">50</text>
<line x1="264.5" y1="145.5" x2="264.5" y2="141" stroke="#000" stroke-width="1"/>
<text x="264" y="155" font-size="11.8" text-anchor="middle">100</text>
<line x1="349.5" y1="145.5" x2="349.5" y2="141" stroke="#000" stroke-width="1"/>
<text x="349" y="155" font-size="11.8" text-anchor="middle">150</text>
<line x1="433.5" y1="145.5" x2="433.5" y2="141" stroke="#000" stroke-width="1"/>
<text x="433" y="155" font-size="11.8" text-anchor="middle">200</text>
<line x1="517.5" y1="145.5" x2="517.5" y2="141" stroke="#000" stroke-width="1"/>
<text x="517" y="155" font-size="11.8" text-anchor="middle">250</text>
<line x1="602.5" y1="145.5" x2="602.5" y2="141" stroke="#000" stroke-width="1"/>
<text x="602" y="155" font-size="11.8" text-anchor="middle">300</text>
<line x1="686.5" y1="145.5" x2="686.5" y2="141" stroke="#000" stroke-width="1"/>
<text x="686" y="155" font-size="11.8" text-anchor="middle">350</text>
<line x1="771.5" y1="145.5" x2="771.5" y2="141" stroke="#000" stroke-width="1"/>
<text x="771" y="155" font-size="11.8" text-anchor="middle">400</text>
<text transform="translate(95.5 17.6) scale(1.02 1)" font-size="13.7">Vcal threshold</text>
<rect x="802" y="138" width="40" height="8" fill="#6300ff" shape-rendering="crispEdges"/>
<rect x="802" y="132" width="40" height="6" fill="#3300ff" shape-rendering="crispEdges"/>
<rect x="802" y="126" width="40" height="6" fill="#0014ff" shape-rendering="crispEdges"/>
<rect x="802" y="120" width="40" height="6" fill="#0044ff" shape-rendering="crispEdges"/>
<rect x="802" y="114" width="40" height="6" fill="#008bff" shape-rendering="crispEdges"/>
<rect x="802" y="108" width="40" height="6" fill="#00bbff" shape-rendering="crispEdges"/>
<rect x="802" y="101" width="40" height="7" fill="#00fffc" shape-rendering="crispEdges"/>
<rect x="802" y="95" width="40" height="6" fill="#00ffcc" shape-rendering="crispEdges"/>
<rect x="802" y="89" width="40" height="6" fill="#00ff85" shape-rendering="crispEdges"/>
<rect x="802" y="83" width="40" height="6" fill="#00ff55" shape-rendering="crispEdges"/>
<rect x="802" y="77" width="40" height="6" fill="#00ff0e" shape-rendering="crispEdges"/>
<rect x="802" y="70" width="40" height="7" fill="#22ff00" shape-rendering="crispEdges"/>
<rect x="802" y="64" width="40" height="6" fill="#69ff00" shape-rendering="crispEdges"/>
<rect x="802" y="58" width="40" height="6" fill="#99ff00" shape-rendering="crispEdges"/>
<rect x="802" y="52" width="40" height="6" fill="#e0ff00" shape-rendering="crispEdges"/>
<rect x="802" y="46" width="40" height="6" fill="#ffee00" shape-rendering="crispEdges"/>
<rect x="802" y="40" width="40" height="6" fill="#ffa700" shape-rendering="crispEdges"/>
<rect x="802" y="33" width="40" height="7" fill="#ff7700" shape-rendering="crispEdges"/>
<rect x="802" y="27" width="40" height="6" fill="#ff3000" shape-rendering="crispEdges"/>
<rect x="802" y="21" width="40" height="6" fill="#ff0000" shape-rendering="crispEdges"/>
<line x1="842.5" y1="21" x2="842.5" y2="146" stroke="#000" stroke-width="1"/>
<line x1="821" y1="31.5" x2="842.5" y2="31.5" stroke="#000" stroke-width="1"/>
<text x="846" y="33.15" font-size="6.3" class="s" font-weight="bold">240</text>
<line x1="821" y1="45.5" x2="842.5" y2="45.5" stroke="#000" stroke-width="1"/>
<text x="846" y="47.01" font-size="6.3" class="s" font-weight="bold">220</text>
<line x1="821" y1="59.5" x2="842.5" y2="59.5" stroke="#000" stroke-width="1"/>
<text x="846" y="60.87" font-size="6.3" class="s" font-weight="bold">200</text>
<line x1="821" y1="73.5" x2="842.5" y2="73.5" stroke="#000" stroke-width="1"/>
<text x="846" y="74.73" font-size="6.3" class="s" font-weight="bold">180</text>
<line x1="821" y1="87.5" x2="842.5" y2="87.5" stroke="#000" stroke-width="1"/>
<text x="846" y="88.59" font-size="6.3" class="s" font-weight="bold">160</text>
<line x1="821" y1="100.5" x2="842.5" y2="100.5" stroke="#000" stroke-width="1"/>
<text x="846" y="102.45" font-size="6.3" class="s" font-weight="bold">140</text>
<line x1="821" y1="114.5" x2="842.5" y2="114.5" stroke="#000" stroke-width="1"/>
<text x="846" y="116.31" font-size="6.3" class="s" font-weight="bold">120</text>
<line x1="821" y1="128.5" x2="842.5" y2="128.5" stroke="#000" stroke-width="1"/>
<text x="846" y="130.17" font-size="6.3" class="s" font-weight="bold">100</text>
<line x1="821" y1="142.5" x2="842.5" y2="142.5" stroke="#000" stroke-width="1"/>
<text x="846" y="144.03" font-size="6.3" class="s" font-weight="bold">80</text>
<text transform="translate(819.8 17.6) scale(1.022 1)" font-size="13.7" text-anchor="end">M0253-061114.20:27T-10a</text>
<rect x="729" y="100" width="1.6" height="1.9" fill="#ff2a00"/>
<rect x="730.5" y="101" width="1.9" height="0.9" fill="#ff8800"/>
<rect x="95.5" y="189.5" width="703" height="124" fill="none" stroke="#000"/>
<text transform="translate(91.2 317.6) scale(0.95 1)" font-size="11.6" text-anchor="end">0</text>
<line x1="95.5" y1="297.5" x2="117.5" y2="297.5" stroke="#000" stroke-width="1"/>
<text transform="translate(91.2 302.1) scale(0.95 1)" font-size="11.6" text-anchor="end">20</text>
<line x1="95.5" y1="282.5" x2="117.5" y2="282.5" stroke="#000" stroke-width="1"/>
<text transform="translate(91.2 286.6) scale(0.95 1)" font-size="11.6" text-anchor="end">40</text>
<line x1="95.5" y1="266.5" x2="117.5" y2="266.5" stroke="#000" stroke-width="1"/>
<text transform="translate(91.2 271.1) scale(0.95 1)" font-size="11.6" text-anchor="end">60</text>
<line x1="95.5" y1="251.5" x2="117.5" y2="251.5" stroke="#000" stroke-width="1"/>
<text transform="translate(91.2 255.6) scale(0.95 1)" font-size="11.6" text-anchor="end">80</text>
<line x1="95.5" y1="235.5" x2="117.5" y2="235.5" stroke="#000" stroke-width="1"/>
<text transform="translate(91.2 240.1) scale(0.95 1)" font-size="11.6" text-anchor="end">100</text>
<line x1="95.5" y1="220.5" x2="117.5" y2="220.5" stroke="#000" stroke-width="1"/>
<text transform="translate(91.2 224.6) scale(0.95 1)" font-size="11.6" text-anchor="end">120</text>
<line x1="95.5" y1="204.5" x2="117.5" y2="204.5" stroke="#000" stroke-width="1"/>
<text transform="translate(91.2 209.1) scale(0.95 1)" font-size="11.6" text-anchor="end">140</text>
<line x1="95.5" y1="189.5" x2="117.5" y2="189.5" stroke="#000" stroke-width="1"/>
<text transform="translate(91.2 193.6) scale(0.95 1)" font-size="11.6" text-anchor="end">160</text>
<text x="95" y="323" font-size="11.8" text-anchor="middle">0</text>
<line x1="180.5" y1="313.5" x2="180.5" y2="309" stroke="#000" stroke-width="1"/>
<text x="180" y="323" font-size="11.8" text-anchor="middle">50</text>
<line x1="264.5" y1="313.5" x2="264.5" y2="309" stroke="#000" stroke-width="1"/>
<text x="264" y="323" font-size="11.8" text-anchor="middle">100</text>
<line x1="349.5" y1="313.5" x2="349.5" y2="309" stroke="#000" stroke-width="1"/>
<text x="349" y="323" font-size="11.8" text-anchor="middle">150</text>
<line x1="433.5" y1="313.5" x2="433.5" y2="309" stroke="#000" stroke-width="1"/>
<text x="433" y="323" font-size="11.8" text-anchor="middle">200</text>
<line x1="517.5" y1="313.5" x2="517.5" y2="309" stroke="#000" stroke-width="1"/>
<text x="517" y="323" font-size="11.8" text-anchor="middle">250</text>
<line x1="602.5" y1="313.5" x2="602.5" y2="309" stroke="#000" stroke-width="1"/>
<text x="602" y="323" font-size="11.8" text-anchor="middle">300</text>
<line x1="686.5" y1="313.5" x2="686.5" y2="309" stroke="#000" stroke-width="1"/>
<text x="686" y="323" font-size="11.8" text-anchor="middle">350</text>
<line x1="771.5" y1="313.5" x2="771.5" y2="309" stroke="#000" stroke-width="1"/>
<text x="771" y="323" font-size="11.8" text-anchor="middle">400</text>
<text transform="translate(95.5 186.1) scale(1.02 1)" font-size="13.7">Bump bonding map</text>
<rect x="802" y="306" width="40" height="8" fill="#6300ff" shape-rendering="crispEdges"/>
<rect x="802" y="300" width="40" height="6" fill="#3300ff" shape-rendering="crispEdges"/>
<rect x="802" y="294" width="40" height="6" fill="#0014ff" shape-rendering="crispEdges"/>
<rect x="802" y="288" width="40" height="6" fill="#0044ff" shape-rendering="crispEdges"/>
<rect x="802" y="282" width="40" height="6" fill="#008bff" shape-rendering="crispEdges"/>
<rect x="802" y="276" width="40" height="6" fill="#00bbff" shape-rendering="crispEdges"/>
<rect x="802" y="269" width="40" height="7" fill="#00fffc" shape-rendering="crispEdges"/>
<rect x="802" y="263" width="40" height="6" fill="#00ffcc" shape-rendering="crispEdges"/>
<rect x="802" y="257" width="40" height="6" fill="#00ff85" shape-rendering="crispEdges"/>
<rect x="802" y="251" width="40" height="6" fill="#00ff55" shape-rendering="crispEdges"/>
<rect x="802" y="245" width="40" height="6" fill="#00ff0e" shape-rendering="crispEdges"/>
<rect x="802" y="238" width="40" height="7" fill="#22ff00" shape-rendering="crispEdges"/>
<rect x="802" y="232" width="40" height="6" fill="#69ff00" shape-rendering="crispEdges"/>
<rect x="802" y="226" width="40" height="6" fill="#99ff00" shape-rendering="crispEdges"/>
<rect x="802" y="220" width="40" height="6" fill="#e0ff00" shape-rendering="crispEdges"/>
<rect x="802" y="214" width="40" height="6" fill="#ffee00" shape-rendering="crispEdges"/>
<rect x="802" y="208" width="40" height="6" fill="#ffa700" shape-rendering="crispEdges"/>
<rect x="802" y="201" width="40" height="7" fill="#ff7700" shape-rendering="crispEdges"/>
<rect x="802" y="195" width="40" height="6" fill="#ff3000" shape-rendering="crispEdges"/>
<rect x="802" y="189" width="40" height="6" fill="#ff0000" shape-rendering="crispEdges"/>
<line x1="842.5" y1="189" x2="842.5" y2="314" stroke="#000" stroke-width="1"/>
<line x1="821" y1="189.5" x2="842.5" y2="189.5" stroke="#000" stroke-width="1"/>
<text x="846" y="191" font-size="6.3" class="s" font-weight="bold">2</text>
<line x1="821" y1="204.5" x2="842.5" y2="204.5" stroke="#000" stroke-width="1"/>
<text x="846" y="206" font-size="6.3" class="s" font-weight="bold">1.5</text>
<line x1="821" y1="220.5" x2="842.5" y2="220.5" stroke="#000" stroke-width="1"/>
<text x="846" y="222" font-size="6.3" class="s" font-weight="bold">1</text>
<line x1="821" y1="235.5" x2="842.5" y2="235.5" stroke="#000" stroke-width="1"/>
<text x="846" y="237" font-size="6.3" class="s" font-weight="bold">0.5</text>
<line x1="821" y1="251.5" x2="842.5" y2="251.5" stroke="#000" stroke-width="1"/>
<text x="846" y="253" font-size="6.3" class="s" font-weight="bold">0</text>
<line x1="821" y1="266.5" x2="842.5" y2="266.5" stroke="#000" stroke-width="1"/>
<text x="846" y="268" font-size="6.3" class="s" font-weight="bold">-0.5</text>
<line x1="821" y1="282.5" x2="842.5" y2="282.5" stroke="#000" stroke-width="1"/>
<text x="846" y="284" font-size="6.3" class="s" font-weight="bold">-1</text>
<line x1="821" y1="297.5" x2="842.5" y2="297.5" stroke="#000" stroke-width="1"/>
<text x="846" y="299" font-size="6.3" class="s" font-weight="bold">-1.5</text>
<line x1="821" y1="313.5" x2="842.5" y2="313.5" stroke="#000" stroke-width="1"/>
<text x="846" y="315" font-size="6.3" class="s" font-weight="bold">-2</text>
<g shape-rendering="crispEdges"><rect x="490" y="225" width="2" height="1" fill="#00bbff"/><rect x="492" y="226" width="2" height="1" fill="#00bbff"/><rect x="729" y="268" width="1" height="1" fill="#00ff0e"/><rect x="729" y="269" width="1" height="1" fill="#ff0000"/><rect x="730" y="269" width="2" height="1" fill="#00ff0e"/></g>
<text transform="translate(312 354.8) scale(0.968 1)" font-size="13.3" font-weight="bold">Test Summary of M0253</text>
<text transform="translate(466.2 354.8) scale(0.93 1)" font-size="13.3" font-weight="bold">T-10a</text>
<text transform="translate(767.3 354.8) scale(0.962 1)" font-size="13.3" font-weight="bold">GRADE:&#160;&#160;A</text>
<text transform="translate(311.9 378.7) scale(0.977 1)" font-size="13.3">ROCs &gt; 1% defects:</text>
<text transform="translate(446.9 378.7) scale(0.977 1)" font-size="13.3">0</text>
<text transform="translate(507.5 379) scale(0.977 1)" font-size="13.3">Tested on:</text>
<text transform="translate(604.2 379) scale(0.977 1)" font-size="13.3">Nov 14</text>
<text transform="translate(670 379) scale(0.977 1)" font-size="13.3">Noise [e]</text>
<text transform="translate(800.7 379) scale(0.977 1)" font-size="13.3">167.6</text>
<text transform="translate(311.9 396.8) scale(0.977 1)" font-size="13.3">Dead Pixel:</text>
<text transform="translate(446.9 396.8) scale(0.977 1)" font-size="13.3">2</text>
<text transform="translate(507.5 395.6) scale(0.977 1)" font-size="13.3">Temp. [<tspan dy="-5" font-size="8" dx="-.3">o</tspan><tspan dy="5" dx="-.5">C]:</tspan></text>
<text transform="translate(604.2 395.6) scale(0.977 1)" font-size="13.3">-10.0 +- 0.0</text>
<text transform="translate(670 395.6) scale(0.977 1)" font-size="13.3">Vcal Thr. Width [e]</text>
<text transform="translate(800.7 395.6) scale(0.977 1)" font-size="13.3">89.0</text>
<text transform="translate(311.9 413.5) scale(0.977 1)" font-size="13.3">Mask Defects:</text>
<text transform="translate(446.9 413.5) scale(0.977 1)" font-size="13.3">0</text>
<text transform="translate(507.5 412.2) scale(0.977 1)" font-size="13.3">Trim / phCal:</text>
<text transform="translate(604.2 412.2) scale(0.977 1)" font-size="13.3">yes / yes</text>
<text transform="translate(670 412.2) scale(0.977 1)" font-size="13.3">Rel. Gain Width [%]</text>
<text transform="translate(800.7 412.2) scale(0.977 1)" font-size="13.3">2.7</text>
<text transform="translate(311.9 431) scale(0.977 1)" font-size="13.3">Dead Bumps:</text>
<text transform="translate(446.9 431) scale(0.977 1)" font-size="13.3">4</text>
<text transform="translate(507.5 428.9) scale(0.977 1)" font-size="13.3">Therm. cycl.:</text>
<text transform="translate(604.2 428.9) scale(0.977 1)" font-size="13.3">yes</text>
<text transform="translate(670 428.9) scale(0.977 1)" font-size="13.3">Pedestal Spread [e]</text>
<text transform="translate(800.7 428.9) scale(0.977 1)" font-size="13.3">1540.9</text>
<text transform="translate(311.9 446.7) scale(0.977 1)" font-size="13.3">Dead Trimbits:</text>
<text transform="translate(446.9 446.7) scale(0.977 1)" font-size="13.3">0</text>
<text transform="translate(507.5 446) scale(0.977 1)" font-size="13.3">TBM1:</text>
<text transform="translate(604.2 446) scale(0.977 1)" font-size="13.3">ok</text>
<text transform="translate(311.9 463.7) scale(0.977 1)" font-size="13.3">Address Probl:</text>
<text transform="translate(446.9 463.7) scale(0.977 1)" font-size="13.3">2</text>
<text transform="translate(507.5 462) scale(0.977 1)" font-size="13.3">TBM2:</text>
<text transform="translate(604.2 462) scale(0.977 1)" font-size="13.3">ok</text>
<rect x="47.5" y="527.5" width="151" height="121" fill="none" stroke="#000"/>
<text x="56.8" y="520.9" font-size="13">Noise</text>
<text transform="translate(45.2 651.2) scale(0.92 1)" font-size="11.8" text-anchor="end">0</text>
<line x1="47.5" y1="628.5" x2="53" y2="628.5" stroke="#000" stroke-width="1"/>
<text transform="translate(45.2 631.2) scale(0.92 1)" font-size="11.8" text-anchor="end">100</text>
<line x1="47.5" y1="607.5" x2="53" y2="607.5" stroke="#000" stroke-width="1"/>
<text transform="translate(45.2 610.2) scale(0.92 1)" font-size="11.8" text-anchor="end">200</text>
<line x1="47.5" y1="587.5" x2="53" y2="587.5" stroke="#000" stroke-width="1"/>
<text transform="translate(45.2 590.2) scale(0.92 1)" font-size="11.8" text-anchor="end">300</text>
<line x1="47.5" y1="567.5" x2="53" y2="567.5" stroke="#000" stroke-width="1"/>
<text transform="translate(45.2 570.2) scale(0.92 1)" font-size="11.8" text-anchor="end">400</text>
<line x1="47.5" y1="547.5" x2="53" y2="547.5" stroke="#000" stroke-width="1"/>
<text transform="translate(45.2 550.2) scale(0.92 1)" font-size="11.8" text-anchor="end">500</text>
<text transform="translate(45.2 530.2) scale(0.92 1)" font-size="11.8" text-anchor="end">600</text>
<text x="46.1" y="657.8" font-size="11" text-anchor="middle">0</text>
<line x1="66.5" y1="648.5" x2="66.5" y2="644" stroke="#000" stroke-width="1"/>
<text x="65.1" y="657.8" font-size="11" text-anchor="middle">2</text>
<line x1="85.5" y1="648.5" x2="85.5" y2="644" stroke="#000" stroke-width="1"/>
<text x="84.1" y="657.8" font-size="11" text-anchor="middle">4</text>
<line x1="104.5" y1="648.5" x2="104.5" y2="644" stroke="#000" stroke-width="1"/>
<text x="103.1" y="657.8" font-size="11" text-anchor="middle">6</text>
<line x1="123.5" y1="648.5" x2="123.5" y2="644" stroke="#000" stroke-width="1"/>
<text x="122.1" y="657.8" font-size="11" text-anchor="middle">8</text>
<line x1="141.5" y1="648.5" x2="141.5" y2="644" stroke="#000" stroke-width="1"/>
<text x="140.1" y="657.8" font-size="11" text-anchor="middle">10</text>
<line x1="160.5" y1="648.5" x2="160.5" y2="644" stroke="#000" stroke-width="1"/>
<text x="159.1" y="657.8" font-size="11" text-anchor="middle">12</text>
<line x1="179.5" y1="648.5" x2="179.5" y2="644" stroke="#000" stroke-width="1"/>
<text x="178.1" y="657.8" font-size="11" text-anchor="middle">14</text>
<text x="197.1" y="657.8" font-size="11" text-anchor="middle">16</text>
<line x1="53.5" y1="547.5" x2="198" y2="547.5" stroke="#ff0000" stroke-width="1" stroke-dasharray="3.6 2.45" stroke-dashoffset="0.6"/>
<line x1="48" y1="614.5" x2="57" y2="614.5" stroke="#0000ff" stroke-width="1"/>
<line x1="52.5" y1="610" x2="52.5" y2="619" stroke="#0000ff" stroke-width="1"/>
<rect x="50.5" y="612.5" width="4" height="4" rx="1.3" fill="#fff" stroke="#0000ff" stroke-width="1"/>
<line x1="57" y1="617.5" x2="67" y2="617.5" stroke="#0000ff" stroke-width="1"/>
<line x1="61.5" y1="614" x2="61.5" y2="621" stroke="#0000ff" stroke-width="1"/>
<rect x="59.5" y="615.5" width="4" height="4" rx="1.3" fill="#fff" stroke="#0000ff" stroke-width="1"/>
<line x1="67" y1="613.5" x2="76" y2="613.5" stroke="#0000ff" stroke-width="1"/>
<line x1="71.5" y1="608" x2="71.5" y2="619" stroke="#0000ff" stroke-width="1"/>
<rect x="69.5" y="611.5" width="4" height="4" rx="1.3" fill="#fff" stroke="#0000ff" stroke-width="1"/>
<line x1="76" y1="617.5" x2="86" y2="617.5" stroke="#0000ff" stroke-width="1"/>
<line x1="80.5" y1="614" x2="80.5" y2="621" stroke="#0000ff" stroke-width="1"/>
<rect x="78.5" y="615.5" width="4" height="4" rx="1.3" fill="#fff" stroke="#0000ff" stroke-width="1"/>
<line x1="86" y1="615.5" x2="95" y2="615.5" stroke="#0000ff" stroke-width="1"/>
<line x1="90.5" y1="611" x2="90.5" y2="620" stroke="#0000ff" stroke-width="1"/>
<rect x="88.5" y="613.5" width="4" height="4" rx="1.3" fill="#fff" stroke="#0000ff" stroke-width="1"/>
<line x1="95" y1="612.5" x2="105" y2="612.5" stroke="#0000ff" stroke-width="1"/>
<line x1="99.5" y1="607" x2="99.5" y2="618" stroke="#0000ff" stroke-width="1"/>
<rect x="97.5" y="610.5" width="4" height="4" rx="1.3" fill="#fff" stroke="#0000ff" stroke-width="1"/>
<line x1="105" y1="613.5" x2="114" y2="613.5" stroke="#0000ff" stroke-width="1"/>
<line x1="109.5" y1="609" x2="109.5" y2="617" stroke="#0000ff" stroke-width="1"/>
<rect x="107.5" y="611.5" width="4" height="4" rx="1.3" fill="#fff" stroke="#0000ff" stroke-width="1"/>
<line x1="114" y1="613.5" x2="124" y2="613.5" stroke="#0000ff" stroke-width="1"/>
<line x1="118.5" y1="608" x2="118.5" y2="618" stroke="#0000ff" stroke-width="1"/>
<rect x="116.5" y="611.5" width="4" height="4" rx="1.3" fill="#fff" stroke="#0000ff" stroke-width="1"/>
<line x1="124" y1="615.5" x2="133" y2="615.5" stroke="#0000ff" stroke-width="1"/>
<line x1="127.5" y1="612" x2="127.5" y2="620" stroke="#0000ff" stroke-width="1"/>
<rect x="125.5" y="613.5" width="4" height="4" rx="1.3" fill="#fff" stroke="#0000ff" stroke-width="1"/>
<line x1="133" y1="614.5" x2="142" y2="614.5" stroke="#0000ff" stroke-width="1"/>
<line x1="137.5" y1="610" x2="137.5" y2="619" stroke="#0000ff" stroke-width="1"/>
<rect x="135.5" y="612.5" width="4" height="4" rx="1.3" fill="#fff" stroke="#0000ff" stroke-width="1"/>
<line x1="142" y1="613.5" x2="152" y2="613.5" stroke="#0000ff" stroke-width="1"/>
<line x1="146.5" y1="608" x2="146.5" y2="618" stroke="#0000ff" stroke-width="1"/>
<rect x="144.5" y="611.5" width="4" height="4" rx="1.3" fill="#fff" stroke="#0000ff" stroke-width="1"/>
<line x1="152" y1="612.5" x2="161" y2="612.5" stroke="#0000ff" stroke-width="1"/>
<line x1="156.5" y1="608" x2="156.5" y2="617" stroke="#0000ff" stroke-width="1"/>
<rect x="154.5" y="610.5" width="4" height="4" rx="1.3" fill="#fff" stroke="#0000ff" stroke-width="1"/>
<line x1="161" y1="613.5" x2="171" y2="613.5" stroke="#0000ff" stroke-width="1"/>
<line x1="165.5" y1="609" x2="165.5" y2="617" stroke="#0000ff" stroke-width="1"/>
<rect x="163.5" y="611.5" width="4" height="4" rx="1.3" fill="#fff" stroke="#0000ff" stroke-width="1"/>
<line x1="171" y1="611.5" x2="180" y2="611.5" stroke="#0000ff" stroke-width="1"/>
<line x1="175.5" y1="607" x2="175.5" y2="616" stroke="#0000ff" stroke-width="1"/>
<rect x="173.5" y="609.5" width="4" height="4" rx="1.3" fill="#fff" stroke="#0000ff" stroke-width="1"/>
<line x1="180" y1="616.5" x2="190" y2="616.5" stroke="#0000ff" stroke-width="1"/>
<line x1="184.5" y1="613" x2="184.5" y2="621" stroke="#0000ff" stroke-width="1"/>
<rect x="182.5" y="614.5" width="4" height="4" rx="1.3" fill="#fff" stroke="#0000ff" stroke-width="1"/>
<line x1="190" y1="615.5" x2="199" y2="615.5" stroke="#0000ff" stroke-width="1"/>
<line x1="193.5" y1="611" x2="193.5" y2="620" stroke="#0000ff" stroke-width="1"/>
<rect x="191.5" y="613.5" width="4" height="4" rx="1.3" fill="#fff" stroke="#0000ff" stroke-width="1"/>
<rect x="267.5" y="527.5" width="151" height="121" fill="none" stroke="#000"/>
<text x="275.9" y="520.9" font-size="13">Vcal Thr. Width</text>
<text transform="translate(265.2 651.2) scale(0.92 1)" font-size="11.8" text-anchor="end">0</text>
<line x1="267.5" y1="628.5" x2="273" y2="628.5" stroke="#000" stroke-width="1"/>
<text transform="translate(265.2 631.2) scale(0.92 1)" font-size="11.8" text-anchor="end">50</text>
<line x1="267.5" y1="607.5" x2="273" y2="607.5" stroke="#000" stroke-width="1"/>
<text transform="translate(265.2 610.2) scale(0.92 1)" font-size="11.8" text-anchor="end">100</text>
<line x1="267.5" y1="587.5" x2="273" y2="587.5" stroke="#000" stroke-width="1"/>
<text transform="translate(265.2 590.2) scale(0.92 1)" font-size="11.8" text-anchor="end">150</text>
<line x1="267.5" y1="567.5" x2="273" y2="567.5" stroke="#000" stroke-width="1"/>
<text transform="translate(265.2 570.2) scale(0.92 1)" font-size="11.8" text-anchor="end">200</text>
<line x1="267.5" y1="547.5" x2="273" y2="547.5" stroke="#000" stroke-width="1"/>
<text transform="translate(265.2 550.2) scale(0.92 1)" font-size="11.8" text-anchor="end">250</text>
<text transform="translate(265.2 530.2) scale(0.92 1)" font-size="11.8" text-anchor="end">300</text>
<text x="266.1" y="657.8" font-size="11" text-anchor="middle">0</text>
<line x1="286.5" y1="648.5" x2="286.5" y2="644" stroke="#000" stroke-width="1"/>
<text x="285.1" y="657.8" font-size="11" text-anchor="middle">2</text>
<line x1="305.5" y1="648.5" x2="305.5" y2="644" stroke="#000" stroke-width="1"/>
<text x="304.1" y="657.8" font-size="11" text-anchor="middle">4</text>
<line x1="324.5" y1="648.5" x2="324.5" y2="644" stroke="#000" stroke-width="1"/>
<text x="323.1" y="657.8" font-size="11" text-anchor="middle">6</text>
<line x1="343.5" y1="648.5" x2="343.5" y2="644" stroke="#000" stroke-width="1"/>
<text x="342.1" y="657.8" font-size="11" text-anchor="middle">8</text>
<line x1="361.5" y1="648.5" x2="361.5" y2="644" stroke="#000" stroke-width="1"/>
<text x="360.1" y="657.8" font-size="11" text-anchor="middle">10</text>
<line x1="380.5" y1="648.5" x2="380.5" y2="644" stroke="#000" stroke-width="1"/>
<text x="379.1" y="657.8" font-size="11" text-anchor="middle">12</text>
<line x1="399.5" y1="648.5" x2="399.5" y2="644" stroke="#000" stroke-width="1"/>
<text x="398.1" y="657.8" font-size="11" text-anchor="middle">14</text>
<text x="417.1" y="657.8" font-size="11" text-anchor="middle">16</text>
<line x1="273.5" y1="567.5" x2="418" y2="567.5" stroke="#ff0000" stroke-width="1" stroke-dasharray="3.6 2.45" stroke-dashoffset="0.6"/>
<polyline fill="none" stroke="#4cc94c" stroke-width="1" points="272.22,612.85 281.66,613.66 291.09,609.61 300.53,611.64 309.97,611.64 319.41,611.64 328.84,613.66 338.28,612.85 347.72,614.88 357.16,612.85 366.59,612.85 376.03,612.85 385.47,614.07 394.91,612.85 404.34,613.66 413.78,611.64"/>
<rect x="270.5" y="610.5" width="4" height="4" fill="none" stroke="#4cc94c" stroke-width="1"/>
<rect x="279.5" y="611.5" width="4" height="4" fill="none" stroke="#4cc94c" stroke-width="1"/>
<rect x="289.5" y="607.5" width="4" height="4" fill="none" stroke="#4cc94c" stroke-width="1"/>
<rect x="298.5" y="609.5" width="4" height="4" fill="none" stroke="#4cc94c" stroke-width="1"/>
<rect x="307.5" y="609.5" width="4" height="4" fill="none" stroke="#4cc94c" stroke-width="1"/>
<rect x="317.5" y="609.5" width="4" height="4" fill="none" stroke="#4cc94c" stroke-width="1"/>
<rect x="326.5" y="611.5" width="4" height="4" fill="none" stroke="#4cc94c" stroke-width="1"/>
<rect x="336.5" y="610.5" width="4" height="4" fill="none" stroke="#4cc94c" stroke-width="1"/>
<rect x="345.5" y="612.5" width="4" height="4" fill="none" stroke="#4cc94c" stroke-width="1"/>
<rect x="355.5" y="610.5" width="4" height="4" fill="none" stroke="#4cc94c" stroke-width="1"/>
<rect x="364.5" y="610.5" width="4" height="4" fill="none" stroke="#4cc94c" stroke-width="1"/>
<rect x="374.5" y="610.5" width="4" height="4" fill="none" stroke="#4cc94c" stroke-width="1"/>
<rect x="383.5" y="612.5" width="4" height="4" fill="none" stroke="#4cc94c" stroke-width="1"/>
<rect x="392.5" y="610.5" width="4" height="4" fill="none" stroke="#4cc94c" stroke-width="1"/>
<rect x="402.5" y="611.5" width="4" height="4" fill="none" stroke="#4cc94c" stroke-width="1"/>
<rect x="411.5" y="609.5" width="4" height="4" fill="none" stroke="#4cc94c" stroke-width="1"/>
<rect x="486.5" y="527.5" width="151" height="121" fill="none" stroke="#000"/>
<text x="495.9" y="520.9" font-size="13">Rel. Gain Width</text>
<text transform="translate(484.2 651.2) scale(0.92 1)" font-size="11.8" text-anchor="end">0</text>
<line x1="486.5" y1="632.5" x2="492" y2="632.5" stroke="#000" stroke-width="1"/>
<text transform="translate(484.2 635.2) scale(0.92 1)" font-size="11.8" text-anchor="end">0.02</text>
<line x1="486.5" y1="616.5" x2="492" y2="616.5" stroke="#000" stroke-width="1"/>
<text transform="translate(484.2 619.2) scale(0.92 1)" font-size="11.8" text-anchor="end">0.04</text>
<line x1="486.5" y1="599.5" x2="492" y2="599.5" stroke="#000" stroke-width="1"/>
<text transform="translate(484.2 602.2) scale(0.92 1)" font-size="11.8" text-anchor="end">0.06</text>
<line x1="486.5" y1="583.5" x2="492" y2="583.5" stroke="#000" stroke-width="1"/>
<text transform="translate(484.2 586.2) scale(0.92 1)" font-size="11.8" text-anchor="end">0.08</text>
<line x1="486.5" y1="567.5" x2="492" y2="567.5" stroke="#000" stroke-width="1"/>
<text transform="translate(484.2 570.2) scale(0.92 1)" font-size="11.8" text-anchor="end">0.1</text>
<line x1="486.5" y1="551.5" x2="492" y2="551.5" stroke="#000" stroke-width="1"/>
<text transform="translate(484.2 554.2) scale(0.92 1)" font-size="11.8" text-anchor="end">0.12</text>
<line x1="486.5" y1="535.5" x2="492" y2="535.5" stroke="#000" stroke-width="1"/>
<text transform="translate(484.2 538.2) scale(0.92 1)" font-size="11.8" text-anchor="end">0.14</text>
<text x="485.1" y="657.8" font-size="11" text-anchor="middle">0</text>
<line x1="505.5" y1="648.5" x2="505.5" y2="644" stroke="#000" stroke-width="1"/>
<text x="504.1" y="657.8" font-size="11" text-anchor="middle">2</text>
<line x1="524.5" y1="648.5" x2="524.5" y2="644" stroke="#000" stroke-width="1"/>
<text x="523.1" y="657.8" font-size="11" text-anchor="middle">4</text>
<line x1="543.5" y1="648.5" x2="543.5" y2="644" stroke="#000" stroke-width="1"/>
<text x="542.1" y="657.8" font-size="11" text-anchor="middle">6</text>
<line x1="562.5" y1="648.5" x2="562.5" y2="644" stroke="#000" stroke-width="1"/>
<text x="561.1" y="657.8" font-size="11" text-anchor="middle">8</text>
<line x1="580.5" y1="648.5" x2="580.5" y2="644" stroke="#000" stroke-width="1"/>
<text x="579.1" y="657.8" font-size="11" text-anchor="middle">10</text>
<line x1="599.5" y1="648.5" x2="599.5" y2="644" stroke="#000" stroke-width="1"/>
<text x="598.1" y="657.8" font-size="11" text-anchor="middle">12</text>
<line x1="618.5" y1="648.5" x2="618.5" y2="644" stroke="#000" stroke-width="1"/>
<text x="617.1" y="657.8" font-size="11" text-anchor="middle">14</text>
<text x="636.1" y="657.8" font-size="11" text-anchor="middle">16</text>
<line x1="492.5" y1="567.5" x2="637" y2="567.5" stroke="#ff0000" stroke-width="1" stroke-dasharray="3.6 2.45" stroke-dashoffset="0.6"/>
<polyline fill="none" stroke="#ff00ff" stroke-width="1" points="491.22,630.67 500.66,630.67 510.09,629.05 519.53,626.62 528.97,621.76 538.41,629.05 547.84,625.81 557.28,627.43 566.72,623.38 576.16,627.43 585.59,629.05 595.03,627.43 604.47,629.05 613.91,629.05 623.34,621.76 632.78,625"/>
<path d="M489.12 632.27L493.32 632.27L491.22 628.27Z" fill="none" stroke="#ff00ff" stroke-width="1"/>
<path d="M498.56 632.27L502.76 632.27L500.66 628.27Z" fill="none" stroke="#ff00ff" stroke-width="1"/>
<path d="M507.99 630.65L512.19 630.65L510.09 626.65Z" fill="none" stroke="#ff00ff" stroke-width="1"/>
<path d="M517.43 628.22L521.63 628.22L519.53 624.22Z" fill="none" stroke="#ff00ff" stroke-width="1"/>
<path d="M526.87 623.36L531.07 623.36L528.97 619.36Z" fill="none" stroke="#ff00ff" stroke-width="1"/>
<path d="M536.31 630.65L540.51 630.65L538.41 626.65Z" fill="none" stroke="#ff00ff" stroke-width="1"/>
<path d="M545.74 627.41L549.94 627.41L547.84 623.41Z" fill="none" stroke="#ff00ff" stroke-width="1"/>
<path d="M555.18 629.03L559.38 629.03L557.28 625.03Z" fill="none" stroke="#ff00ff" stroke-width="1"/>
<path d="M564.62 624.98L568.82 624.98L566.72 620.98Z" fill="none" stroke="#ff00ff" stroke-width="1"/>
<path d="M574.06 629.03L578.26 629.03L576.16 625.03Z" fill="none" stroke="#ff00ff" stroke-width="1"/>
<path d="M583.49 630.65L587.69 630.65L585.59 626.65Z" fill="none" stroke="#ff00ff" stroke-width="1"/>
<path d="M592.93 629.03L597.13 629.03L595.03 625.03Z" fill="none" stroke="#ff00ff" stroke-width="1"/>
<path d="M602.37 630.65L606.57 630.65L604.47 626.65Z" fill="none" stroke="#ff00ff" stroke-width="1"/>
<path d="M611.81 630.65L616.01 630.65L613.91 626.65Z" fill="none" stroke="#ff00ff" stroke-width="1"/>
<path d="M621.24 623.36L625.44 623.36L623.34 619.36Z" fill="none" stroke="#ff00ff" stroke-width="1"/>
<path d="M630.68 626.6L634.88 626.6L632.78 622.6Z" fill="none" stroke="#ff00ff" stroke-width="1"/>
<rect x="706.5" y="527.5" width="151" height="121" fill="none" stroke="#000"/>
<text x="714.9" y="520.9" font-size="13">Pedestal Spread</text>
<text transform="translate(704.2 651.2) scale(0.92 1)" font-size="11.8" text-anchor="end">0</text>
<line x1="706.5" y1="631.5" x2="712" y2="631.5" stroke="#000" stroke-width="1"/>
<text transform="translate(704.2 634.2) scale(0.92 1)" font-size="11.8" text-anchor="end">500</text>
<line x1="706.5" y1="613.5" x2="712" y2="613.5" stroke="#000" stroke-width="1"/>
<text transform="translate(704.2 616.2) scale(0.92 1)" font-size="11.8" text-anchor="end">1000</text>
<line x1="706.5" y1="596.5" x2="712" y2="596.5" stroke="#000" stroke-width="1"/>
<text transform="translate(704.2 599.2) scale(0.92 1)" font-size="11.8" text-anchor="end">1500</text>
<line x1="706.5" y1="579.5" x2="712" y2="579.5" stroke="#000" stroke-width="1"/>
<text transform="translate(704.2 582.2) scale(0.92 1)" font-size="11.8" text-anchor="end">2000</text>
<line x1="706.5" y1="561.5" x2="712" y2="561.5" stroke="#000" stroke-width="1"/>
<text transform="translate(704.2 564.2) scale(0.92 1)" font-size="11.8" text-anchor="end">2500</text>
<line x1="706.5" y1="544.5" x2="712" y2="544.5" stroke="#000" stroke-width="1"/>
<text transform="translate(704.2 547.2) scale(0.92 1)" font-size="11.8" text-anchor="end">3000</text>
<text transform="translate(704.2 530.2) scale(0.92 1)" font-size="11.8" text-anchor="end">3500</text>
<text x="705.1" y="657.8" font-size="11" text-anchor="middle">0</text>
<line x1="725.5" y1="648.5" x2="725.5" y2="644" stroke="#000" stroke-width="1"/>
<text x="724.1" y="657.8" font-size="11" text-anchor="middle">2</text>
<line x1="744.5" y1="648.5" x2="744.5" y2="644" stroke="#000" stroke-width="1"/>
<text x="743.1" y="657.8" font-size="11" text-anchor="middle">4</text>
<line x1="763.5" y1="648.5" x2="763.5" y2="644" stroke="#000" stroke-width="1"/>
<text x="762.1" y="657.8" font-size="11" text-anchor="middle">6</text>
<line x1="782.5" y1="648.5" x2="782.5" y2="644" stroke="#000" stroke-width="1"/>
<text x="781.1" y="657.8" font-size="11" text-anchor="middle">8</text>
<line x1="800.5" y1="648.5" x2="800.5" y2="644" stroke="#000" stroke-width="1"/>
<text x="799.1" y="657.8" font-size="11" text-anchor="middle">10</text>
<line x1="819.5" y1="648.5" x2="819.5" y2="644" stroke="#000" stroke-width="1"/>
<text x="818.1" y="657.8" font-size="11" text-anchor="middle">12</text>
<line x1="838.5" y1="648.5" x2="838.5" y2="644" stroke="#000" stroke-width="1"/>
<text x="837.1" y="657.8" font-size="11" text-anchor="middle">14</text>
<text x="856.1" y="657.8" font-size="11" text-anchor="middle">16</text>
<line x1="712.5" y1="561.5" x2="857" y2="561.5" stroke="#ff0000" stroke-width="1" stroke-dasharray="3.6 2.45" stroke-dashoffset="0.6"/>
<polyline fill="none" stroke="#000000" stroke-width="1" points="711.22,599.89 720.66,602.32 730.09,599.89 739.53,591.91 748.97,590.87 758.41,593.99 767.84,597.12 777.28,590.87 786.72,589.83 796.16,593.99 805.59,595.38 815.03,593.99 824.47,597.12 833.91,596.08 843.34,583.93 852.78,593.99"/>
<path d="M709.22 598.49L713.22 598.49L711.22 601.99Z" fill="#000000" stroke="#000000" stroke-width=".5"/>
<path d="M718.66 600.92L722.66 600.92L720.66 604.42Z" fill="#000000" stroke="#000000" stroke-width=".5"/>
<path d="M728.09 598.49L732.09 598.49L730.09 601.99Z" fill="#000000" stroke="#000000" stroke-width=".5"/>
<path d="M737.53 590.51L741.53 590.51L739.53 594.01Z" fill="#000000" stroke="#000000" stroke-width=".5"/>
<path d="M746.97 589.47L750.97 589.47L748.97 592.97Z" fill="#000000" stroke="#000000" stroke-width=".5"/>
<path d="M756.41 592.59L760.41 592.59L758.41 596.09Z" fill="#000000" stroke="#000000" stroke-width=".5"/>
<path d="M765.84 595.72L769.84 595.72L767.84 599.22Z" fill="#000000" stroke="#000000" stroke-width=".5"/>
<path d="M775.28 589.47L779.28 589.47L777.28 592.97Z" fill="#000000" stroke="#000000" stroke-width=".5"/>
<path d="M784.72 588.43L788.72 588.43L786.72 591.93Z" fill="#000000" stroke="#000000" stroke-width=".5"/>
<path d="M794.16 592.59L798.16 592.59L796.16 596.09Z" fill="#000000" stroke="#000000" stroke-width=".5"/>
<path d="M803.59 593.98L807.59 593.98L805.59 597.48Z" fill="#000000" stroke="#000000" stroke-width=".5"/>
<path d="M813.03 592.59L817.03 592.59L815.03 596.09Z" fill="#000000" stroke="#000000" stroke-width=".5"/>
<path d="M822.47 595.72L826.47 595.72L824.47 599.22Z" fill="#000000" stroke="#000000" stroke-width=".5"/>
<path d="M831.91 594.68L835.91 594.68L833.91 598.18Z" fill="#000000" stroke="#000000" stroke-width=".5"/>
<path d="M841.34 582.53L845.34 582.53L843.34 586.03Z" fill="#000000" stroke="#000000" stroke-width=".5"/>
<path d="M850.78 592.59L854.78 592.59L852.78 596.09Z" fill="#000000" stroke="#000000" stroke-width=".5"/>
</svg></body></html>
